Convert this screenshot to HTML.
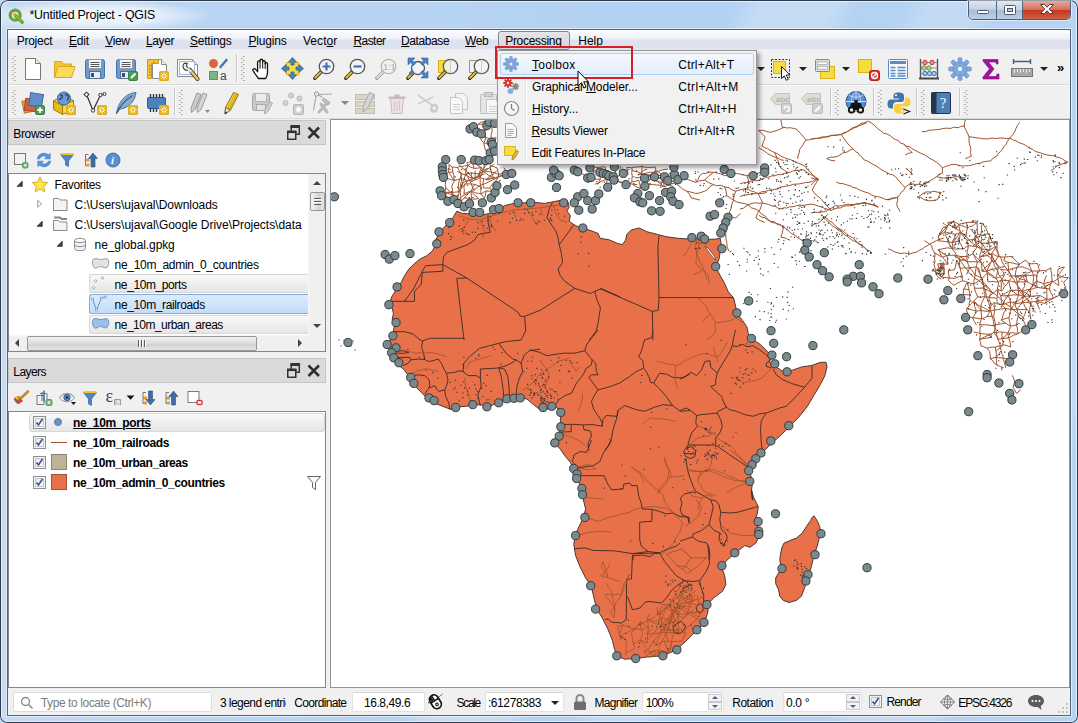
<!DOCTYPE html>
<html lang="en">
<head>
<meta charset="utf-8">
<title>*Untitled Project - QGIS</title>
<style>
*{box-sizing:border-box;margin:0;padding:0}
html,body{width:1078px;height:723px;overflow:hidden;background:#c3d8f0}
body{font-family:"Liberation Sans",sans-serif;font-size:12px;color:#000;position:relative}
.abs,.abs>*{position:absolute}
#win{position:absolute;left:0;top:0;width:1078px;height:723px;border-radius:8px 8px 7px 7px;background:linear-gradient(115deg,transparent 0,transparent 52%,rgba(255,255,255,.22) 54%,rgba(255,255,255,.22) 59%,transparent 61%,transparent 64%,rgba(255,255,255,.18) 66%,rgba(255,255,255,.18) 69%,transparent 71%,transparent 82%,rgba(255,255,255,.2) 84%,rgba(255,255,255,.2) 89%,transparent 91%),linear-gradient(90deg,#cbdef4 0,#c2d9f3 1%,#b9d5f3 20%,#b3d1f2 60%,#b6d3f3 100%);box-shadow:inset 0 0 0 1px #2c3a4c, inset 0 0 0 2px #e6f0fb;overflow:hidden}
#titleglow{position:absolute;left:2px;top:2px;width:230px;height:27px;background:radial-gradient(ellipse 120px 16px at 92px 14px,rgba(255,255,255,.85) 0,rgba(255,255,255,.6) 55%,rgba(255,255,255,0) 100%)}
#title{position:absolute;left:28px;top:8px;font-size:12.4px;color:#000;white-space:nowrap;text-shadow:0 0 5px #fff,0 0 8px #fff}
#client{position:absolute;left:7px;top:29px;width:1064px;height:687px;background:#f0f0f0;border:1px solid #53647a;outline:1px solid rgba(255,255,255,.55)}
.t{position:absolute;white-space:nowrap;line-height:14px;height:14px}
u{text-decoration:underline;text-underline-offset:1px}
/* menubar */
#menubar{position:absolute;left:0;top:0;width:1062px;height:21px;background:linear-gradient(180deg,#fdfdfe 0,#eef1f8 45%,#dfe3f0 50%,#dde1ee 88%,#e9ecf5 100%);border-bottom:1px solid #f4f5f9}
#menubar .t{top:4px}
#procbtn{position:absolute;left:490px;top:1px;width:72px;height:19px;border:1px solid #7d8694;border-radius:3px;background:linear-gradient(180deg,#e4e6ea,#d2d5db)}
/* toolbars */
.tbrow{position:absolute;left:0;width:1062px;height:34px;background:#f0f0f0}
.sep{position:absolute;width:1px;background:#c9c9c9;border-right:1px solid #fbfbfb;box-sizing:content-box}
.grip{position:absolute;width:4px;height:26px;background:repeating-linear-gradient(180deg,#a3a3a3 0,#a3a3a3 1.500px,transparent 1.500px,transparent 4px) 2px 0/1.500px 100% no-repeat,repeating-linear-gradient(180deg,#a3a3a3 0,#a3a3a3 1.500px,transparent 1.500px,transparent 4px) 0 2px/1.500px 100% no-repeat}
.ic{position:absolute;width:24px;height:24px}
.ic svg,.ic16 svg{display:block;overflow:visible}
.ic16{position:absolute;width:16px;height:16px}
.dis{opacity:.38;filter:grayscale(1)}
.dd{position:absolute;width:0;height:0;border:4px solid transparent;border-top:4px solid #222;border-bottom:0}
/* docks */
.dtitle{position:absolute;left:0px;width:318px;height:25px;background:#dadada;border:1px solid #c6c6c6}
.dtitle .t{left:4px;top:6px}
.frame{position:absolute;background:#fff;border:1px solid #828790}
.row{position:absolute;height:20px}
.selrow{position:absolute;border:1px solid #d7d7d7;border-radius:3px;background:linear-gradient(180deg,#f8f8f8,#e6e6e6)}
.selrow.act{border-color:#84acdd;background:linear-gradient(180deg,#dcebfd,#c2dcfc)}
.cb{position:absolute;width:13px;height:13px;border:1px solid #8e8f8f;background:linear-gradient(135deg,#dfe2e6,#f7f7f8 60%,#fff);box-shadow:inset 0 0 0 1px #f4f4f4, inset 0 0 0 2px #c3c7cc}
.cb svg{position:absolute;left:1px;top:1px}
/* status */
.field{position:absolute;height:20px;background:#fff;border:1px solid #e3e3e3;border-top-color:#d5d5d5;border-radius:2px}
/* popup menu */
#popup{position:absolute;left:497px;top:50px;width:260px;height:115px;background:#f1f1f1;border:1px solid #979797;box-shadow:3px 3px 4px rgba(0,0,0,.35)}
#popup .gut{position:absolute;left:27px;top:2px;width:1px;height:109px;background:#e2e3e3;border-right:1px solid #fff;box-sizing:content-box}
#popup .hl{position:absolute;left:2px;top:2px;width:254px;height:22px;border:1px solid #aecff7;border-radius:3px;background:linear-gradient(180deg,#f4f8fd,#e4eefb)}
#redbox{position:absolute;left:495px;top:46px;width:138px;height:33px;border:2px solid #d5202b}
</style>
</head>
<body>
<div id="win">
<div id="titleglow"></div>
<!-- QGIS logo -->
<svg style="position:absolute;left:8px;top:8px" width="16" height="16" viewBox="0 0 17 17">
<circle cx="7.6" cy="7.6" r="5.3" fill="none" stroke="#6fa32a" stroke-width="3.4"/>
<path d="M8 8 L15 15" stroke="#5b8f2a" stroke-width="3.6" stroke-linecap="round"/>
<path d="M6.6 6.4 L11.5 11.2" stroke="#f08b2c" stroke-width="2.2" stroke-linecap="round"/>
<path d="M9.5 9.5 L14.6 14.6" stroke="#8dbb45" stroke-width="1.8" stroke-linecap="round"/>
</svg>
<div id="title" style="letter-spacing:-0.223px;margin-left:1.5px">*Untitled Project - QGIS</div>
<!-- window buttons -->
<div style="position:absolute;left:968px;top:1px;width:103px;height:19px;border:1px solid #4f5f73;border-top:0;border-radius:0 0 5px 5px;overflow:hidden;box-shadow:0 0 0 1px rgba(255,255,255,.5)">
 <div style="position:absolute;left:0;top:0;width:28px;height:18px;background:linear-gradient(180deg,#dfe8f3 0,#c4d3e6 45%,#a9bed8 50%,#bccfe6 100%);border-right:1px solid #56667b"></div>
 <div style="position:absolute;left:28px;top:0;width:26px;height:19px;background:linear-gradient(180deg,#dfe8f3 0,#c4d3e6 45%,#a9bed8 50%,#bccfe6 100%);border-right:1px solid #56667b"></div>
 <div style="position:absolute;left:54px;top:0;width:48px;height:19px;background:linear-gradient(180deg,#e8a99b 0,#d5705c 45%,#c2391f 50%,#d0654a 100%)"></div>
 <svg style="position:absolute;left:0;top:-1px" width="102" height="19" viewBox="0 0 102 19">
  <rect x="8.5" y="10.5" width="11" height="3" rx="1" fill="#fff" stroke="#4a5566" stroke-width="1"/>
  <rect x="35.500" y="5.500" width="11" height="9" rx="1" fill="#fff" stroke="#4a5566"/>
  <rect x="38.5" y="8.5" width="5" height="3" fill="#b9c9de" stroke="#4a5566"/>
  <path d="M71.500 4.500h4l2.500 2.800 2.500-2.800h4l-4.300 4.500 4.300 4.500h-4l-2.500-2.800-2.500 2.800h-4l4.300-4.500z" fill="#fff" stroke="#5a3a3a" stroke-width="1" stroke-linejoin="round"/>
 </svg>
</div>

<div id="client">
<!-- ================= MENUBAR ================= -->
<div id="menubar">
 <div id="procbtn"></div>
 <div class="t" style="letter-spacing:-0.254px;margin-left:0.7px;left:8px">Pro<u>j</u>ect</div>
 <div class="t" style="letter-spacing:-0.176px;margin-left:0px;left:61px"><u>E</u>dit</div>
 <div class="t" style="letter-spacing:-0.328px;margin-left:0.2px;left:97px"><u>V</u>iew</div>
 <div class="t" style="letter-spacing:-0.426px;margin-left:1.1px;left:137px"><u>L</u>ayer</div>
 <div class="t" style="letter-spacing:-0.222px;margin-left:0px;left:182px"><u>S</u>ettings</div>
 <div class="t" style="letter-spacing:-0.168px;margin-left:0.5px;left:240px"><u>P</u>lugins</div>
 <div class="t" style="letter-spacing:0.076px;margin-left:-0.1px;left:295px">Vect<u>o</u>r</div>
 <div class="t" style="letter-spacing:-0.543px;margin-left:0.4px;left:345px"><u>R</u>aster</div>
 <div class="t" style="letter-spacing:-0.409px;margin-left:0.1px;left:393px"><u>D</u>atabase</div>
 <div class="t" style="letter-spacing:-0.423px;margin-left:0.1px;left:457px"><u>W</u>eb</div>
 <div class="t" style="letter-spacing:-0.307px;margin-left:0.2px;left:497px">Pro<u>c</u>essing</div>
 <div class="t" style="letter-spacing:-0.047px;margin-left:-0.7px;left:571px"><u>H</u>elp</div>
</div>
<div class="tbrow" style="top:21px;border-bottom:1px solid #dadada"></div>
<div class="tbrow" style="top:55px;border-top:1px solid #fbfbfb;border-bottom:1px solid #d8d8d8"></div>
<div class="grip" style="left:4px;top:26px"></div>
<div class="grip" style="left:4px;top:60px"></div>
<div class="ic" style="left:13px;top:26.5px"><svg width="24" height="24" viewBox="0 0 24 24"><path d="M4.500 1.500h10l5 5v16h-15z" fill="#fff" stroke="#777"/><path d="M14.500 1.500v5h5" fill="#eee" stroke="#777"/></svg></div>
<div class="ic" style="left:44px;top:26.5px"><svg width="24" height="24" viewBox="0 0 24 24"><path d="M2.500 20.500v-16h7l2 2.500h8v3" fill="#f3c63a" stroke="#d9a81c"/><path d="M2.500 20.500l3.500-11h17l-3.500 11z" fill="#fad95c" stroke="#d9a81c"/></svg></div>
<div class="ic" style="left:75px;top:26.5px"><svg width="24" height="24" viewBox="0 0 24 24"><path d="M2.500 4.500a2 2 0 0 1 2-2h15a2 2 0 0 1 2 2v15a2 2 0 0 1-2 2h-15a2 2 0 0 1-2-2z" fill="#6d9bd1" stroke="#4374ab"/><rect x="5.500" y="2.500" width="13" height="9" fill="#f4f6f9" stroke="#8d99a8"/><path d="M7.500 5.500h9M7.500 7.500h9M7.500 9.500h9" stroke="#555"/><rect x="6.500" y="14.500" width="11" height="7" fill="#e9edf2" stroke="#55708f"/><rect x="8" y="16" width="3" height="4" fill="#3c4f6b"/></svg></div>
<div class="ic" style="left:106px;top:26.5px"><svg width="24" height="24" viewBox="0 0 24 24"><path d="M2.500 4.500a2 2 0 0 1 2-2h15a2 2 0 0 1 2 2v15a2 2 0 0 1-2 2h-15a2 2 0 0 1-2-2z" fill="#6d9bd1" stroke="#4374ab"/><rect x="5.500" y="2.500" width="13" height="9" fill="#f4f6f9" stroke="#8d99a8"/><path d="M7.500 5.500h9M7.500 7.500h9M7.500 9.500h9" stroke="#555"/><rect x="6.500" y="14.500" width="11" height="7" fill="#e9edf2" stroke="#55708f"/><rect x="8" y="16" width="3" height="4" fill="#3c4f6b"/><rect x="14.500" y="14.500" width="9" height="9" rx="1.5" fill="#4f9c5a" stroke="#3b8246"/><path d="M17 21l4.500-4.500" stroke="#fff" stroke-width="2"/></svg></div>
<div class="ic" style="left:137px;top:26.5px"><svg width="24" height="24" viewBox="0 0 24 24"><path d="M7.500 2.500h9l5 5v14h-14z" fill="#fff" stroke="#888"/><path d="M16.500 2.500v5h5" fill="#eee" stroke="#888"/><path d="M2.500 2.500h11v4h-7v15h-4z" fill="#f3c63a" stroke="#c99b11"/><path d="M4 9h2M4 12h2M4 15h2M4 18h2M9 4v2" stroke="#a67d08"/><rect x="14" y="14" width="10" height="10" rx="1.500" fill="#e2b118"/><path d="M19 15.500v7M15.500 19h7M16.500 16.500l5 5M21.500 16.500l-5 5" stroke="#fff" stroke-width="1"/><circle cx="19" cy="19" r="1.100" fill="#e2b118"/></svg></div>
<div class="ic" style="left:168px;top:26.5px"><svg width="24" height="24" viewBox="0 0 24 24"><path d="M1.500 2.500h15l5 5v12h-20z" fill="#fff" stroke="#888"/><path d="M16.500 2.500v5h5" fill="#eee" stroke="#888"/><rect x="3.500" y="4.500" width="15" height="13" fill="#fff" stroke="#9db4e0"/><path d="M14.500 13.500l7 8.500" stroke="#3a3a3a" stroke-width="4.200" stroke-linecap="round"/><path d="M14.500 13.500l7 8.500" stroke="#e9c45a" stroke-width="2.600" stroke-linecap="round"/><path d="M8.300 6.200a4.200 4.200 0 1 0 6.500 5.200l-2.800-.4-1.500-2 .8-2.600z" fill="#e9e9e9" stroke="#3a3a3a" stroke-width="1.100" stroke-linejoin="round"/><path d="M11.500 11.500l3.500 3" stroke="#e4e4e4" stroke-width="2.400"/></svg></div>
<div class="ic" style="left:198px;top:26.5px"><svg width="24" height="24" viewBox="0 0 24 24"><circle cx="7.500" cy="6.500" r="4.500" fill="#d9673b"/><rect x="3.500" y="14.500" width="8" height="8" fill="#7fb583" stroke="#5d9a63"/><path d="M14.500 10l6-7" stroke="#4a7ab5" stroke-width="2.600" stroke-linecap="round"/><text x="14" y="22.500" font-family="Liberation Sans,sans-serif" font-size="12" fill="#444">a</text></svg></div>
<div class="sep" style="left:228px;top:24px;height:28px"></div>
<div class="grip" style="left:233px;top:26px"></div>
<div class="ic" style="left:242px;top:26.5px"><svg width="24" height="24" viewBox="0 0 24 24"><path d="M8.500 21.500c-1.500-2-4.500-6-5.500-8 -.7-1.600 1.400-2.600 2.600-1.200l2 2.400v-9.500c0-1.800 2.500-1.800 2.500 0v-1.600c0-1.800 2.600-1.800 2.600 0v1.400c0-1.700 2.500-1.700 2.500 0.200v1.600c0-1.500 2.300-1.500 2.300 0.300v8.400c0 3-1 4.500-1.800 6z" fill="#fff" stroke="#111" stroke-width="1.300" stroke-linejoin="round"/><path d="M10.100 5.500v6M12.700 5v6.500M15.200 6v6" stroke="#111" stroke-width="1"/></svg></div>
<div class="ic" style="left:273px;top:26.5px"><svg width="24" height="24" viewBox="0 0 24 24"><rect x="5.500" y="5.500" width="12" height="12" fill="#f5dc3f" stroke="#d9b31a"/><path d="M11.500 0.500l4 4.500h-2.500v3h-3v-3h-2.500zM11.500 22.500l4-4.500h-2.500v-3h-3v3h-2.500zM0.500 11.500l4.500-4v2.500h3v3h-3v2.500zM22.500 11.500l-4.500-4v2.500h-3v3h3v2.500z" fill="#4a82c4" stroke="#2f65a6" stroke-width=".8"/></svg></div>
<div class="ic" style="left:304px;top:26.5px"><svg width="24" height="24" viewBox="0 0 24 24"><path d="M9.500 14.500l-6.700 6.700" stroke="#222" stroke-width="3.400" stroke-linecap="round"/><path d="M8.600 15.400l-5.400 5.400" stroke="#f0c029" stroke-width="2" stroke-linecap="round"/><circle cx="14.500" cy="9.500" r="7.200" fill="#f3f4f6" stroke="#555" stroke-width="1.300"/><path d="M14.500 5.500v8M10.500 9.500h8" stroke="#3f74b5" stroke-width="2.200"/></svg></div>
<div class="ic" style="left:335px;top:26.5px"><svg width="24" height="24" viewBox="0 0 24 24"><path d="M9.500 14.500l-6.700 6.700" stroke="#222" stroke-width="3.400" stroke-linecap="round"/><path d="M8.600 15.400l-5.400 5.400" stroke="#f0c029" stroke-width="2" stroke-linecap="round"/><circle cx="14.500" cy="9.500" r="7.200" fill="#f3f4f6" stroke="#555" stroke-width="1.300"/><path d="M10.500 9.500h8" stroke="#3f74b5" stroke-width="2.200"/></svg></div>
<div class="ic dis" style="left:366px;top:26.5px"><svg width="24" height="24" viewBox="0 0 24 24"><path d="M9.500 14.500l-6.700 6.700" stroke="#222" stroke-width="3.400" stroke-linecap="round"/><path d="M8.600 15.400l-5.400 5.400" stroke="#f0c029" stroke-width="2" stroke-linecap="round"/><circle cx="14.500" cy="9.500" r="7.200" fill="#f3f4f6" stroke="#555" stroke-width="1.300"/><text x="9.300" y="13" font-family="Liberation Sans,sans-serif" font-size="8.500" font-weight="bold" fill="#666">1:1</text></svg></div>
<div class="ic" style="left:397px;top:26.5px"><svg width="24" height="24" viewBox="0 0 24 24"><path d="M9.500 14.500l-6.700 6.700" stroke="#222" stroke-width="3.400" stroke-linecap="round"/><path d="M8.600 15.400l-5.400 5.400" stroke="#f0c029" stroke-width="2" stroke-linecap="round"/><circle cx="13" cy="11" r="6.500" fill="#f3f4f6" stroke="#555" stroke-width="1.300"/><path d="M3 1h7l-2.500 2.500 3 3-2 2-3-3L3 8zM23 1h-7l2.500 2.500-3 3 2 2 3-3L23 8zM23 21h-7l2.500-2.500-3-3 2-2 3 3L23 14zM4 16l3-3 2 2-3 3z" fill="#4a82c4" stroke="#2f65a6" stroke-width=".6"/></svg></div>
<div class="ic" style="left:428px;top:26.5px"><svg width="24" height="24" viewBox="0 0 24 24"><rect x="2.500" y="3.500" width="12" height="12" fill="#f5dc3f" stroke="#d9b31a"/><path d="M9.500 14.500l-6.700 6.700" stroke="#222" stroke-width="3.400" stroke-linecap="round"/><path d="M8.600 15.400l-5.400 5.400" stroke="#f0c029" stroke-width="2" stroke-linecap="round"/><circle cx="14.500" cy="9.500" r="7.200" fill="rgba(243,244,246,.8)" stroke="#555" stroke-width="1.300"/><path d="M14.500 2.500v14" stroke="#ccc"/></svg></div>
<div class="ic" style="left:459px;top:26.5px"><svg width="24" height="24" viewBox="0 0 24 24"><rect x="2.500" y="3.500" width="12" height="12" fill="#f1f1f1" stroke="#999"/><path d="M9.500 14.500l-6.700 6.700" stroke="#222" stroke-width="3.400" stroke-linecap="round"/><path d="M8.600 15.400l-5.400 5.400" stroke="#f0c029" stroke-width="2" stroke-linecap="round"/><circle cx="14.500" cy="9.500" r="7.200" fill="rgba(243,244,246,.9)" stroke="#555" stroke-width="1.300"/><path d="M14.500 2.500v14" stroke="#ccc"/></svg></div>
<div class="dd" style="left:749px;top:37px"></div>
<div class="ic" style="left:761px;top:26.5px"><svg width="24" height="24" viewBox="0 0 24 24"><rect x="2.500" y="2.500" width="18" height="18" fill="none" stroke="#333" stroke-dasharray="2 1.500"/><rect x="4.500" y="4.500" width="12" height="12" fill="#f5dc3f" stroke="#d9b31a"/><path d="M12.500 9.500v12l2.800-2.700 2 4.500 2-1-2-4.300h3.800z" fill="#fff" stroke="#222" stroke-linejoin="round"/></svg></div>
<div class="ic" style="left:805px;top:26.5px"><svg width="24" height="24" viewBox="0 0 24 24"><rect x="7.500" y="9.500" width="14" height="12" fill="#f5dc3f" stroke="#d9b31a"/><rect x="2.500" y="2.500" width="14" height="12" rx="1" fill="#dcdcdc" stroke="#8a8a8a"/><rect x="4.500" y="5" width="10" height="2.500" fill="#fff" stroke="#9a9a9a" stroke-width=".6"/><rect x="4.500" y="9.500" width="10" height="2.500" fill="#fff" stroke="#9a9a9a" stroke-width=".6"/></svg></div>
<div class="ic" style="left:848px;top:26.5px"><svg width="24" height="24" viewBox="0 0 24 24"><rect x="2.500" y="2.500" width="13" height="13" fill="#f5dc3f" stroke="#d9b31a"/><rect x="13.500" y="13.500" width="10" height="10" rx="2" fill="#d9352d" stroke="#b31f1a"/><circle cx="18.500" cy="18.500" r="3" fill="none" stroke="#fff" stroke-width="1.300"/><path d="M16.500 20.500l4-4" stroke="#fff" stroke-width="1.300"/></svg></div>
<div class="ic" style="left:878px;top:26.5px"><svg width="24" height="24" viewBox="0 0 24 24"><rect x="2.500" y="2.500" width="19" height="19" rx="1" fill="#f4f8fd" stroke="#5b8cc4"/><rect x="4" y="4" width="16" height="3" fill="#5b8cc4"/><path d="M4.500 10.500h5M11.500 10.500h8M4.500 13.500h5M11.500 13.500h8M4.500 16.500h5M11.500 16.500h8M4.500 19h5M11.500 19h8" stroke="#5b8cc4" stroke-width="1.400"/></svg></div>
<div class="ic" style="left:909px;top:26.5px"><svg width="24" height="24" viewBox="0 0 24 24"><path d="M3.500 2v19M20.500 2v19" stroke="#555" stroke-width="1.400"/><path d="M2 21.500h20" stroke="#444" stroke-width="2"/><path d="M3.500 5.500h17M3.500 11h17M3.500 16.500h17" stroke="#777" stroke-width=".8"/><g stroke-width="1"><circle cx="8" cy="5.500" r="2.200" fill="#e98a8a" stroke="#c23b3b"/><circle cx="15" cy="5.500" r="2.200" fill="#e98a8a" stroke="#c23b3b"/><circle cx="7" cy="11" r="2.200" fill="#a5d6a5" stroke="#4e9a4e"/><circle cx="12" cy="11" r="2.200" fill="#a5d6a5" stroke="#4e9a4e"/><circle cx="8" cy="16.500" r="2.200" fill="#a9c6e8" stroke="#3f74b5"/><circle cx="12.500" cy="16.500" r="2.200" fill="#a9c6e8" stroke="#3f74b5"/><circle cx="17" cy="16.500" r="2.200" fill="#a9c6e8" stroke="#3f74b5"/></g></svg></div>
<div class="ic" style="left:940px;top:26.5px"><svg width="24" height="24" viewBox="0 0 24 24"><g transform="translate(12 12)"><g fill="#7fa9dc" stroke="#5b8cc4" stroke-width=".7"><rect x="-2" y="-11.500" width="4" height="23" rx="1.500"/><rect x="-2" y="-11.500" width="4" height="23" rx="1.500" transform="rotate(45)"/><rect x="-2" y="-11.500" width="4" height="23" rx="1.500" transform="rotate(90)"/><rect x="-2" y="-11.500" width="4" height="23" rx="1.500" transform="rotate(135)"/></g><circle r="7" fill="#7fa9dc" stroke="#5b8cc4" stroke-width=".7"/><circle r="2.800" fill="#f0f0f0" stroke="#5b8cc4" stroke-width=".7"/></g></svg></div>
<div class="ic" style="left:971px;top:26.5px"><svg width="24" height="24" viewBox="0 0 24 24"><path d="M4 2.500h15v4.500h-1.500l-1-2h-7l5.500 7-6 7.500h8l1.200-2.500h1.800v5h-16v-2l6.500-8-6.500-8z" fill="#a3119e" stroke="#7d0a79" stroke-width=".6"/></svg></div>
<div class="ic" style="left:1002px;top:26.5px"><svg width="24" height="24" viewBox="0 0 24 24"><path d="M3 4.500h18M3.500 2v5M20.500 2v5" stroke="#3f5f8a" stroke-width="1.400"/><rect x="1.500" y="11.500" width="21" height="8" fill="#a9a9a9" stroke="#777"/><path d="M4.500 12v4M7.500 12v3M10.500 12v4M13.500 12v3M16.500 12v4M19.500 12v3" stroke="#eee"/></svg></div>
<div class="dd" style="left:791px;top:37px"></div>
<div class="dd" style="left:834px;top:37px"></div>
<div class="dd" style="left:1032px;top:37px"></div>
<div class="t" style="left:1049px;top:31px;font-size:13px;font-weight:bold;letter-spacing:-1px">»</div>
<div class="ic" style="left:13px;top:60.5px"><svg width="24" height="24" viewBox="0 0 24 24"><rect x="2" y="9" width="12" height="12" transform="rotate(-12 8 15)" fill="#e5a03a" stroke="#c27a18"/><rect x="4" y="8" width="12" height="12" transform="rotate(8 10 14)" fill="#d2613d" stroke="#a8421f"/><rect x="8.500" y="2.500" width="13" height="13" transform="rotate(10 15 9)" fill="#5f8fc9" stroke="#3c6aa5"/><rect x="14.500" y="14.500" width="9" height="9" rx="1.5" fill="#4f9c5a" stroke="#3b8246"/><path d="M19 16.300v5.400M16.300 19h5.400" stroke="#fff" stroke-width="1.800"/></svg></div>
<div class="ic" style="left:44px;top:60.5px"><svg width="24" height="24" viewBox="0 0 24 24"><path d="M1.500 9.500l9 5v9l-9-5z" fill="#e8bb16" stroke="#9f7c07"/><path d="M10.500 14.500l11-5v9l-11 5z" fill="#f5d94e" stroke="#9f7c07"/><path d="M1.500 9.500l11-4 9 4-11 5z" fill="#fbe88a" stroke="#9f7c07"/><circle cx="12" cy="7.500" r="6.500" fill="#6c9bd4" stroke="#3c5f94"/><path d="M8 4c2-.5 3 1 2 2.500s-2 1-2.500 2.500M13 3c1.500 1 3 .5 3.500 2.500s-1.500 2-1 4" stroke="#2f4d7c" stroke-width="1.600" fill="none"/><rect x="14" y="14" width="10" height="10" rx="1.500" fill="#e2b118"/><path d="M19 15.500v7M15.500 19h7M16.500 16.500l5 5M21.500 16.500l-5 5" stroke="#fff" stroke-width="1"/><circle cx="19" cy="19" r="1.100" fill="#e2b118"/></svg></div>
<div class="ic" style="left:75px;top:60.5px"><svg width="24" height="24" viewBox="0 0 24 24"><path d="M3.500 3.500l6.500 16 7.500-15.500 4-1" fill="none" stroke="#333" stroke-width="1.200"/><g fill="#fff" stroke="#333"><rect x="1.800" y="1.800" width="3.400" height="3.400" transform="rotate(45 3.500 3.500)"/><circle cx="10" cy="19.500" r="1.700"/><circle cx="17.500" cy="4" r="1.700"/><circle cx="21.500" cy="3" r="1.500"/></g><rect x="14" y="14" width="10" height="10" rx="1.500" fill="#e2b118"/><path d="M19 15.500v7M15.500 19h7M16.500 16.500l5 5M21.500 16.500l-5 5" stroke="#fff" stroke-width="1"/><circle cx="19" cy="19" r="1.100" fill="#e2b118"/></svg></div>
<div class="ic" style="left:106px;top:60.5px"><svg width="24" height="24" viewBox="0 0 24 24"><path d="M2.500 22.500c1-7 4-13 9-17 3-2.400 7-3.800 10.500-4-.5 4-2 7.500-4.500 10.500-3 3.500-7 5.500-11.500 6z" fill="#88a9d0" stroke="#4d72a3"/><path d="M2.500 22.500c3-7 8-13 16-18" fill="none" stroke="#39597f" stroke-width="1.100"/><rect x="14" y="14" width="10" height="10" rx="1.500" fill="#e2b118"/><path d="M19 15.500v7M15.500 19h7M16.500 16.500l5 5M21.500 16.500l-5 5" stroke="#fff" stroke-width="1"/><circle cx="19" cy="19" r="1.100" fill="#e2b118"/></svg></div>
<div class="ic" style="left:137px;top:60.5px"><svg width="24" height="24" viewBox="0 0 24 24"><rect x="2.500" y="6.500" width="18" height="11" rx="1" fill="#4f80be" stroke="#2f5c96"/><path d="M5.500 3v3.500M8.500 3v3.500M11.500 3v3.500M14.500 3v3.500M17.500 3v3.500M5.500 17.500v3.500M8.500 17.500v3.500M11.500 17.500v3.500" stroke="#333" stroke-width="1.400"/><rect x="14" y="14" width="10" height="10" rx="1.500" fill="#e2b118"/><path d="M19 15.500v7M15.500 19h7M16.500 16.500l5 5M21.500 16.500l-5 5" stroke="#fff" stroke-width="1"/><circle cx="19" cy="19" r="1.100" fill="#e2b118"/></svg></div>
<div class="sep" style="left:166px;top:58px;height:28px"></div>
<div class="grip" style="left:171px;top:60px"></div>
<div class="ic" style="left:180px;top:60.5px"><svg width="24" height="24" viewBox="0 0 24 24"><path d="M9 2l4 1.500-6 15-3.500 3-.5-4.500z" fill="#ccc" stroke="#999"/><path d="M15 2l4 1.500-6 15-3.500 3-.5-4.500z" fill="#d5d5d5" stroke="#999"/><path d="M17 19h5l-2.500 3z" fill="#888"/></svg></div>
<div class="ic" style="left:211px;top:60.5px"><svg width="24" height="24" viewBox="0 0 24 24"><path d="M14.500 1.500l5 2-8 15.500-5.500 4 .5-6.500z" fill="#f2d230" stroke="#8a7416"/><path d="M16.500 2.300l-8 15.700M18.200 3l-8 15.500" stroke="#b99b1a" stroke-width=".8"/><path d="M6.500 16.500l5 2.500-5.500 4z" fill="#e9e2d0" stroke="#8a7416"/><path d="M6 23l.25-2.500 2 1z" fill="#222"/></svg></div>
<div class="ic" style="left:242px;top:60.5px"><svg width="24" height="24" viewBox="0 0 24 24"><path d="M2.500 4.500a2 2 0 0 1 2-2h13a2 2 0 0 1 2 2v13a2 2 0 0 1-2 2h-13a2 2 0 0 1-2-2z" fill="#c9c9c9" stroke="#a5a5a5"/><rect x="5.500" y="2.500" width="11" height="8" fill="#ececec" stroke="#b5b5b5"/><rect x="6.500" y="13.500" width="9" height="6" fill="#e2e2e2" stroke="#aaa"/><path d="M19.500 10.500l3 1.500-5 9-3 2 .3-3.500z" fill="#d2d2d2" stroke="#aaa"/></svg></div>
<div class="ic" style="left:273px;top:60.5px"><svg width="24" height="24" viewBox="0 0 24 24"><circle cx="4.500" cy="12" r="2.500" fill="#d3d3d3" stroke="#b8b8b8"/><circle cx="10" cy="4.500" r="2.500" fill="#d3d3d3" stroke="#b8b8b8"/><circle cx="18.500" cy="7.500" r="2.500" fill="#d3d3d3" stroke="#b8b8b8"/><rect x="12.500" y="13.500" width="10" height="10" rx="1.500" fill="#cfcfcf" stroke="#b5b5b5"/><path d="M17.500 15.500v6M14.500 18.500h6M15.400 16.400l4.200 4.200M19.600 16.400l-4.200 4.200" stroke="#fff" stroke-width="1.200"/></svg></div>
<div class="ic" style="left:303px;top:60.5px"><svg width="24" height="24" viewBox="0 0 24 24"><path d="M5.500 2.500l-3 17M5.500 2.500l6 4M4 3.500l17-.5" stroke="#aaa" stroke-width="1.200" fill="none"/><circle cx="5.500" cy="3" r="2.200" fill="#e8e8e8" stroke="#999"/><path d="M8 21l9-10M16 21l-6-8" stroke="#b9b9b9" stroke-width="3" stroke-linecap="round"/><path d="M13 7l6 5-2 2-6-5z" fill="#c5c5c5" stroke="#aaa"/></svg></div>
<div class="ic" style="left:346px;top:60.5px"><svg width="24" height="24" viewBox="0 0 24 24"><rect x="1.500" y="3.500" width="19" height="5" fill="#d9d7c4" stroke="#c2c0ad"/><rect x="1.500" y="10.500" width="19" height="5" fill="#d9d7c4" stroke="#c2c0ad"/><rect x="1.500" y="17.500" width="19" height="5" fill="#d9d7c4" stroke="#c2c0ad"/><path d="M15.500 1.500l4.500 2-6.500 14-4.500 3.500.3-5.500z" fill="#d5d5d5" stroke="#a9a9a9"/></svg></div>
<div class="ic" style="left:377px;top:60.5px"><svg width="24" height="24" viewBox="0 0 24 24"><path d="M5.500 7.500h13l-1.500 15h-10z" fill="#ece4e4" stroke="#c9b9b9"/><path d="M3.500 6.500h17M9.500 4.500h5" stroke="#c9b9b9" stroke-width="2"/><path d="M9.500 10v10M12 10v10M14.500 10v10" stroke="#d4c6c6"/></svg></div>
<div class="ic" style="left:408px;top:60.5px"><svg width="24" height="24" viewBox="0 0 24 24"><path d="M2 4l15 11M2 13l15-7" stroke="#cfcfcf" stroke-width="1.800"/><circle cx="18.500" cy="16.500" r="3" fill="none" stroke="#ccc" stroke-width="1.600"/><circle cx="19" cy="5" r="3" fill="none" stroke="#ccc" stroke-width="1.600" transform="translate(-1 13)"/></svg></div>
<div class="ic" style="left:439px;top:60.5px"><svg width="24" height="24" viewBox="0 0 24 24"><path d="M8.500 2.500h8l4 4v12h-12z" fill="#f4f4f4" stroke="#c4c4c4"/><path d="M3.500 6.500h8l4 4v12h-12z" fill="#f8f8f8" stroke="#c4c4c4"/><path d="M6 13.500h7M6 16h7M6 18.500h7" stroke="#d0d0d0"/></svg></div>
<div class="ic" style="left:470px;top:60.5px"><svg width="24" height="24" viewBox="0 0 24 24"><rect x="2.500" y="3.500" width="16" height="19" rx="1" fill="#e4e4e4" stroke="#c0c0c0"/><rect x="6.500" y="1.500" width="8" height="4" fill="#d0d0d0" stroke="#bbb"/><path d="M8.500 8.500h9l4 4v10h-13z" fill="#f8f8f8" stroke="#c4c4c4"/><path d="M11 15.500h8M11 18h8M11 20.500h8" stroke="#d0d0d0"/></svg></div>
<div class="dd" style="left:333px;top:71px;border-top-color:#888"></div>
<div class="ic" style="left:761px;top:60.5px"><svg width="24" height="24" viewBox="0 0 24 24"><path d="M1.500 8l5-5.500h14v11h-14z" fill="#dcdcd4" stroke="#c4c4bb"/><text x="7" y="11" font-family="Liberation Sans,sans-serif" font-size="8" font-weight="bold" fill="#b5b5ac">abc</text><rect x="12.500" y="12.500" width="10" height="10" rx="1.500" fill="#cfcfcf" stroke="#bbb"/><path d="M15 18a2.600 2.600 0 1 1 2.600 2.600" fill="none" stroke="#fff" stroke-width="1.500"/></svg></div>
<div class="ic" style="left:792px;top:60.5px"><svg width="24" height="24" viewBox="0 0 24 24"><path d="M1.500 8l5-5.500h14v11h-14z" fill="#dcdcd4" stroke="#c4c4bb"/><text x="7" y="11" font-family="Liberation Sans,sans-serif" font-size="8" font-weight="bold" fill="#b5b5ac">abc</text><rect x="12.500" y="12.500" width="10" height="10" rx="1.500" fill="#cfcfcf" stroke="#bbb"/><path d="M15 20.500l5-5" stroke="#fff" stroke-width="2"/></svg></div>
<div class="sep" style="left:822px;top:58px;height:28px"></div>
<div class="grip" style="left:827px;top:60px"></div>
<div class="ic" style="left:836px;top:60.5px"><svg width="24" height="24" viewBox="0 0 24 24"><circle cx="12" cy="10.500" r="10" fill="#5a8bd0" stroke="#2d4f86"/><path d="M2 10.500h20M12 .5v20M5 4c4 3 10 3 14 0M5 17c4-3 10-3 14 0M12 .5c-6 5-6 15 0 20M12 .5c6 5 6 15 0 20" fill="none" stroke="#cfe0f5" stroke-width=".9"/><path d="M7 12h3.500v-3h3v3h3.500l1.500 7h-13z" fill="#111"/><circle cx="7.500" cy="19" r="3.600" fill="#111"/><circle cx="16.500" cy="19" r="3.600" fill="#111"/><circle cx="7.500" cy="19" r="1.800" fill="#e8e8e8"/><circle cx="16.500" cy="19" r="1.800" fill="#e8e8e8"/></svg></div>
<div class="sep" style="left:865px;top:58px;height:28px"></div>
<div class="grip" style="left:870px;top:60px"></div>
<div class="ic" style="left:879px;top:60.5px"><svg width="24" height="24" viewBox="0 0 24 24"><path d="M11.500 1.500c-4 0-5 1.500-5 3.500v2.500h5.500v1h-8c-2.500 0-3.500 2-3.500 4.500s1 4.500 3.500 4.500h2v-3c0-2 1.500-3.500 3.500-3.500h5c1.500 0 2.500-1 2.500-2.500v-3.500c0-2-1.500-3.500-5.500-3.500z" fill="#3d77ae"/><circle cx="9" cy="4.300" r="1" fill="#fff"/><path d="M12.500 22.500c4 0 5-1.500 5-3.500v-2.500h-5.500v-1h8c2.500 0 3.500-2 3.500-4.500s-1-4.500-3.500-4.500h-2v3c0 2-1.500 3.500-3.500 3.500h-5c-1.500 0-2.500 1-2.500 2.500v3.500c0 2 1.500 3.500 5.500 3.500z" fill="#f7cf3f"/><circle cx="15" cy="19.700" r="1" fill="#fff"/><path d="M16.500 18l6 2.500-6 2.500" fill="none" stroke="#222" stroke-width="1.300"/></svg></div>
<div class="sep" style="left:908px;top:58px;height:28px"></div>
<div class="grip" style="left:913px;top:60px"></div>
<div class="ic" style="left:921px;top:60.5px"><svg width="24" height="24" viewBox="0 0 24 24"><rect x="2.500" y="1.500" width="19" height="21" rx="1" fill="#4d7eb8" stroke="#1f3552"/><rect x="2.500" y="1.500" width="5" height="21" fill="#26384f"/><text x="11" y="17" font-family="Liberation Serif,serif" font-size="14" fill="#fff">?</text></svg></div>
<div class="sep" style="left:951px;top:58px;height:28px"></div>
<div class="grip" style="left:956px;top:60px"></div>
<!-- ================= BROWSER DOCK ================= (client coords = page - (8,30)) -->
<div class="dtitle" style="top:90px"><div class="t" style="letter-spacing:-0.359px;margin-left:0.3px">Browser</div>
 <svg style="position:absolute;left:277px;top:3px" width="38" height="18" viewBox="0 0 38 18">
  <path d="M5.200 7v-4.300h8.100v7.600h-3.500" fill="none" stroke="#333" stroke-width="1.500"/><path d="M4.500 2.500h9.500" stroke="#333" stroke-width="3"/>
  <rect x="1.750" y="7.750" width="8" height="7.500" fill="#dcdcdc" stroke="#333" stroke-width="1.500"/><path d="M1 7.800h9.500" stroke="#333" stroke-width="2.600"/>
  <path d="M22.500 3.500l10.500 10.500M33 3.500l-10.500 10.500" stroke="#2e2e2e" stroke-width="2.500"/>
 </svg>
</div>
<!-- browser toolbar -->
<div class="ic16" style="left:5px;top:122px"><svg width="16" height="16" viewBox="0 0 16 16"><rect x="1.500" y="1.500" width="11" height="11" fill="#f2f2f2" stroke="#777"/><rect x="9.500" y="10.500" width="5.500" height="5.500" rx="1.500" fill="#7bb686" stroke="#4f9c5a"/><circle cx="12.300" cy="13.300" r="1.300" fill="#d9efdc"/></svg></div>
<div class="ic16" style="left:27px;top:121px"><svg width="18" height="18" viewBox="0 0 16 16"><path d="M2 7a6 6 0 0 1 10-3.500l1.500-1.500v5h-5l1.700-1.700a3.800 3.800 0 0 0-6 1.700z" fill="#5596df" stroke="#3b78c4" stroke-width=".5"/><path d="M14 9a6 6 0 0 1-10 3.500l-1.500 1.500v-5h5l-1.700 1.700a3.800 3.800 0 0 0 6-1.700z" fill="#5596df" stroke="#3b78c4" stroke-width=".5"/></svg></div>
<div class="ic16" style="left:51px;top:122px"><svg width="16" height="16" viewBox="0 0 16 16"><path d="M1.500 2.500h13l-5 6.500v5.500l-3-1.500v-4z" fill="#4f86c6" stroke="#3a6ca8" stroke-width=".8"/><path d="M1.500 2h13" stroke="#f0c929" stroke-width="2"/></svg></div>
<div class="ic16" style="left:74px;top:122px"><svg width="16" height="16" viewBox="0 0 16 16"><path d="M3.500 2.500v11M3.500 2.500h3M3.500 8h2M3.500 13.500h2" stroke="#777" fill="none"/><rect x="4.500" y="6.500" width="3" height="3" fill="#f19a2a"/><rect x="4.500" y="11.500" width="3" height="3" fill="#f19a2a"/><path d="M11 1l4.500 5.500h-2.500v8.500h-4v-8.500h-2.500z" fill="#3f6ea6" stroke="#2a4f7e" stroke-width=".6"/></svg></div>
<div class="ic16" style="left:97px;top:122px"><svg width="16" height="16" viewBox="0 0 16 16"><circle cx="8" cy="8" r="7" fill="#5b8fd0" stroke="#3f6fae"/><text x="6" y="12" font-family="Liberation Serif,serif" font-size="11" font-style="italic" font-weight="bold" fill="#fff">i</text></svg></div>
<!-- browser tree -->
<div class="frame" style="left:0px;top:143px;width:318px;height:179px"></div>
<div class="selrow" style="left:81px;top:244px;width:220px;height:19px;border-radius:3px 0 0 3px;border-right:0"></div>
<div class="selrow act" style="left:81px;top:264px;width:220px;height:20px;border-radius:3px 0 0 3px;border-right:0"></div>
<div class="selrow" style="left:81px;top:285px;width:220px;height:19px;border-radius:3px 0 0 3px;border-right:0"></div>
<svg style="position:absolute;left:2px;top:144px" width="100" height="161" viewBox="0 0 100 161">
 <!-- expand arrows -->
 <g transform="translate(-1.800 -.7)">
 <path d="M14 8v5h-5z" fill="#444" stroke="#222" stroke-width=".8"/>
 <path d="M29.500 27l4 3.500-4 3.500z" fill="#fff" stroke="#9a9a9a"/>
 <path d="M34 48v5h-5z" fill="#444" stroke="#222" stroke-width=".8"/>
 <path d="M54 68v5h-5z" fill="#444" stroke="#222" stroke-width=".8"/>
 </g>
 <!-- star -->
 <path d="M30 3l2.300 5 5.400.6-4 3.700 1.100 5.400-4.800-2.800-4.800 2.800 1.100-5.400-4-3.700 5.400-.6z" fill="#fbe94a" stroke="#d9a81c" stroke-width="1"/>
 <!-- folder -->
 <g transform="translate(0 -1)"><path d="M43.500 37.500v-12h5l1.500 1.500h7v10.500z" fill="#f3f3f3" stroke="#8a8a8a"/>
 <path d="M43.500 57.500v-10h5l1.500 1.500h7v8.500z" fill="#f3f3f3" stroke="#8a8a8a"/><path d="M44 44.500h6l1.500 1.500h5.500" stroke="#8a8a8a" stroke-width="2" fill="none"/></g>
 <!-- db -->
 <g transform="translate(0 1.500)"><path d="M64.500 65v8c0 2.800 11 2.800 11 0v-8" fill="#f4f4f4" stroke="#8a8a8a"/><ellipse cx="70" cy="65" rx="5.500" ry="2.200" fill="#fafafa" stroke="#8a8a8a"/><path d="M64.500 69c0 2.800 11 2.800 11 0" fill="none" stroke="#8a8a8a"/></g>
 <g transform="translate(0 1.500)">
 <!-- polygon grey -->
 <path d="M83 84c3-2 5 0 8 0s5-2 7 0c1.500 2 .5 6-1 8-2 1.500-4-1-6.500-1s-4.500 3-6.500 1c-1.500-2-2-6-1-8z" fill="#e3e3e3" stroke="#9a9a9a"/>
 <!-- points -->
 <g fill="#fff" stroke="#7fa3d0" stroke-width=".9"><rect x="84.600" y="104.600" width="2" height="2" transform="rotate(45 85.600 105.600)"/><rect x="91.500" y="101.500" width="2" height="2" transform="rotate(45 92.500 102.500)"/><rect x="82.600" y="111.200" width="2" height="2" transform="rotate(45 83.600 112.200)"/></g>
 <!-- line -->
 <path d="M82.500 123.500l4 11 5-12 4-1" fill="none" stroke="#6f8fba" stroke-width="1"/><g fill="#fff" stroke="#6f8fba" stroke-width=".8"><circle cx="82.500" cy="123.500" r="1.200"/><circle cx="86.500" cy="134.500" r="1.200"/><circle cx="91.500" cy="122.500" r="1.200"/><circle cx="95.500" cy="121.500" r="1.100"/></g>
 <!-- polygon blue -->
 <path d="M83 144c3-2 5 0 8 0s5-2 7 0c1.500 2 .5 6-1 8-2 1.500-4-1-6.500-1s-4.500 3-6.500 1c-1.500-2-2-6-1-8z" fill="#9dc0e8" stroke="#6d96c8"/>
 </g>
</svg>
<div class="t" style="letter-spacing:-0.362px;margin-left:0.5px;left:46px;top:148px">Favorites</div>
<div class="t" style="letter-spacing:-0.034px;margin-left:0.6px;left:66px;top:168px">C:\Users\ujaval\Downloads</div>
<div class="t" style="letter-spacing:-0.024px;margin-left:0.6px;left:66px;top:188px">C:\Users\ujaval\Google Drive\Projects\data</div>
<div class="t" style="letter-spacing:-0.093px;margin-left:0.6px;left:86px;top:208px">ne_global.gpkg</div>
<div class="t" style="letter-spacing:-0.31px;margin-left:0.6px;left:106px;top:228px">ne_10m_admin_0_countries</div>
<div class="t" style="letter-spacing:-0.402px;margin-left:0.6px;left:106px;top:248px">ne_10m_ports</div>
<div class="t" style="letter-spacing:-0.366px;margin-left:0.6px;left:106px;top:268px">ne_10m_railroads</div>
<div class="t" style="letter-spacing:-0.512px;margin-left:0.6px;left:106px;top:288px">ne_10m_urban_areas</div>
<!-- vertical scrollbar -->
<div style="position:absolute;left:300px;top:144px;width:17px;height:161px;background:#f0f0f0;border-left:1px solid #f7f7f7"></div>
<div class="dd" style="left:305px;top:151px;border-top:0;border-bottom:4px solid #444"></div>
<div class="dd" style="left:305px;top:294px;border-top-color:#444"></div>
<div style="position:absolute;left:302px;top:162px;width:15px;height:19px;border:1px solid #979797;border-radius:2px;background:linear-gradient(90deg,#f3f3f3,#dcdcdc 50%,#cfcfcf 51%,#e4e4e4)"></div>
<div style="position:absolute;left:306px;top:168px;width:7px;height:7px;background:repeating-linear-gradient(180deg,#5c5c5c 0,#5c5c5c 1px,#fff 1px,#fff 2px,transparent 2px,transparent 3px)"></div>
<!-- horizontal scrollbar -->
<div style="position:absolute;left:1px;top:305px;width:299px;height:16px;background:#f0f0f0;border-top:1px solid #f7f7f7"></div>
<div style="position:absolute;left:300px;top:305px;width:17px;height:16px;background:#f0f0f0"></div>
<div style="position:absolute;left:19px;top:306px;width:230px;height:15px;border:1px solid #979797;border-radius:2px;background:linear-gradient(180deg,#f3f3f3,#dcdcdc 50%,#cfcfcf 51%,#e4e4e4)"></div>
<div style="position:absolute;left:130px;top:310px;width:8px;height:7px;background:repeating-linear-gradient(90deg,#5c5c5c 0,#5c5c5c 1px,#fff 1px,#fff 2px,transparent 2px,transparent 3px)"></div>
<div style="position:absolute;left:7px;top:309px;width:0;height:0;border:4px solid transparent;border-right:4px solid #444;border-left:0"></div>
<div style="position:absolute;left:290px;top:309px;width:0;height:0;border:4px solid transparent;border-left:4px solid #444;border-right:0"></div>

<!-- ================= LAYERS DOCK ================= -->
<div class="dtitle" style="top:328px"><div class="t" style="letter-spacing:-0.555px;margin-left:0.3px">Layers</div>
 <svg style="position:absolute;left:277px;top:3px" width="38" height="18" viewBox="0 0 38 18">
  <path d="M5.200 7v-4.300h8.100v7.600h-3.500" fill="none" stroke="#333" stroke-width="1.500"/><path d="M4.500 2.500h9.500" stroke="#333" stroke-width="3"/>
  <rect x="1.750" y="7.750" width="8" height="7.500" fill="#dcdcdc" stroke="#333" stroke-width="1.500"/><path d="M1 7.800h9.500" stroke="#333" stroke-width="2.600"/>
  <path d="M22.500 3.500l10.500 10.500M33 3.500l-10.500 10.500" stroke="#2e2e2e" stroke-width="2.500"/>
 </svg>
</div>
<!-- layers toolbar -->
<svg style="position:absolute;left:4px;top:359px" width="200" height="18" viewBox="0 0 200 18">
 <!-- style brush -->
 <path d="M2 9l5-2 4 5-4 3c-3 0-4-3-5-6z" fill="#d9452f"/><path d="M3 8l4-1.500 2 2.500-4 2z" fill="#f0c029"/><path d="M2.500 10l3 4" stroke="#3f74b5" stroke-width="1.500"/><path d="M8.500 9.500l7.500-7" stroke="#c58a3a" stroke-width="2.800" stroke-linecap="round"/><path d="M6 7.500l4 5" stroke="#8a6a3a" stroke-width="1.200"/>
 <!-- add group -->
 <g transform="translate(-2.500 0)"><path d="M27.500 6.500h7v9h-7zM30.500 4.500h7v9" fill="#f4f4f4" stroke="#777"/><path d="M34.500 1.500v11" stroke="#4a7ab5" stroke-width="1.600"/><path d="M32.500 3v9" stroke="#666"/><rect x="36.500" y="10.500" width="6" height="6" rx="1.500" fill="#7bb686" stroke="#4f9c5a"/><circle cx="39.500" cy="13.500" r="1.300" fill="#e9f5ea"/></g>
 <!-- eye -->
 <g transform="translate(-1.500 0)"><path d="M49 9c4-6 11-6 15 0-4 5-11 5-15 0z" fill="#eef2f7" stroke="#999"/><path d="M49 8c4-5 11-5 15 0" fill="none" stroke="#aaa"/><circle cx="56.500" cy="8.500" r="3.200" fill="#5b8cc4" stroke="#3a5f8f"/><circle cx="56.500" cy="8.500" r="1.300" fill="#1d2d44"/><path d="M60.500 13h5l-2.500 3z" fill="#111"/></g>
 <!-- filter -->
 <g transform="translate(-1 0)"><path d="M72.500 3.500h13l-5 6.500v6.500l-3-1.500v-5z" fill="#4f86c6" stroke="#3a6ca8" stroke-width=".8"/><path d="M72.500 3h13" stroke="#f0c929" stroke-width="2"/></g>
 <!-- epsilon -->
 <text x="93.500" y="12.500" font-family="Liberation Serif,serif" font-size="18" fill="#6a2c7a">ε</text><path d="M102.500 16v-5.500h6v5.500" fill="#c9c9c9" stroke="#9a9a9a"/><path d="M104 11.500h3.500v4" fill="#f4f4f4"/>
 <path d="M114.500 6.500h8l-4 4.300z" fill="#111"/>
 <!-- expand all -->
 <g transform="translate(-3.500 0)"><path d="M134.500 3.500v11M134.500 3.500h3M134.500 9h2M134.500 14.500h2" stroke="#777" fill="none"/><rect x="135.500" y="7.500" width="3" height="3" fill="#f19a2a"/><rect x="135.500" y="12.500" width="3" height="3" fill="#f19a2a"/><path d="M142 16l4.500-5.500h-2.500v-8.500h-4v8.500h-2.500z" fill="#3f6ea6" stroke="#2a4f7e" stroke-width=".6"/></g>
 <!-- collapse all -->
 <g transform="translate(-3.500 0)"><path d="M157.500 3.500v11M157.500 3.500h3M157.500 9h2M157.500 14.500h2" stroke="#777" fill="none"/><rect x="158.500" y="7.500" width="3" height="3" fill="#f19a2a"/><rect x="158.500" y="12.500" width="3" height="3" fill="#f19a2a"/><path d="M165 2l4.500 5.500h-2.500v8.500h-4v-8.500h-2.500z" fill="#3f6ea6" stroke="#2a4f7e" stroke-width=".6"/></g>
 <!-- remove -->
 <g transform="translate(-7.500 0)"><rect x="183.500" y="2.500" width="11" height="11" fill="#fff" stroke="#7a7a7a"/><rect x="192.500" y="11.500" width="5" height="4" rx="1.200" fill="#fff" stroke="#e0304a" stroke-width="1.400"/></g>
</svg>
<!-- layers tree -->
<div class="frame" style="left:0px;top:381px;width:318px;height:277px"></div>
<div class="selrow" style="left:21px;top:383px;width:296px;height:19px"></div>
<!-- checkboxes -->
<div class="cb" style="left:25px;top:386px"><svg width="9" height="9" viewBox="0 0 9 9"><path d="M1.500 4.500l2 2.500 4-6" fill="none" stroke="#3b4fa5" stroke-width="1.600"/></svg></div>
<div class="cb" style="left:25px;top:406px"><svg width="9" height="9" viewBox="0 0 9 9"><path d="M1.500 4.500l2 2.500 4-6" fill="none" stroke="#3b4fa5" stroke-width="1.600"/></svg></div>
<div class="cb" style="left:25px;top:426px"><svg width="9" height="9" viewBox="0 0 9 9"><path d="M1.500 4.500l2 2.500 4-6" fill="none" stroke="#3b4fa5" stroke-width="1.600"/></svg></div>
<div class="cb" style="left:25px;top:446px"><svg width="9" height="9" viewBox="0 0 9 9"><path d="M1.500 4.500l2 2.500 4-6" fill="none" stroke="#3b4fa5" stroke-width="1.600"/></svg></div>
<!-- symbols -->
<div style="position:absolute;left:46px;top:388px;width:8px;height:8px;border-radius:50%;background:#6a94c0;border:1px solid #5580ad"></div>
<div style="position:absolute;left:43px;top:412px;width:16px;height:1px;background:#a0522d"></div>
<div style="position:absolute;left:43px;top:424px;width:16px;height:16px;background:#c0b294;border:1px solid #8b8574"></div>
<div style="position:absolute;left:43px;top:444px;width:16px;height:16px;background:#e8704a;border:1px solid #9d5640"></div>
<div class="t" style="letter-spacing:-0.315px;margin-left:0.1px;left:65px;top:386px;font-weight:bold;text-decoration:underline">ne_10m_ports</div>
<div class="t" style="letter-spacing:-0.385px;margin-left:0.1px;left:65px;top:406px;font-weight:bold">ne_10m_railroads</div>
<div class="t" style="letter-spacing:-0.447px;margin-left:0.1px;left:65px;top:426px;font-weight:bold">ne_10m_urban_areas</div>
<div class="t" style="letter-spacing:-0.373px;margin-left:0.1px;left:65px;top:446px;font-weight:bold">ne_10m_admin_0_countries</div>
<svg style="position:absolute;left:298px;top:444px" width="16" height="18" viewBox="0 0 16 18"><path d="M1.500 2.500h13l-5 6v7l-3-2v-5z" fill="#fafafa" stroke="#666"/></svg>

<div id="map" style="position:absolute;left:322px;top:89px;width:740px;height:569px;background:#fff;border:1px solid #8d949c;overflow:hidden">
<svg width="738" height="567" viewBox="0 0 738 567" style="position:absolute;left:0;top:0">
<g fill="#e8714a" stroke="#3a2a26" stroke-width="0.900" stroke-linejoin="round">
<path d="M125.8 91.2 131.4 93.4 138.1 93.8 149.2 95.6 158.1 93.4 164.8 90.1 173.7 85.6 182.6 83.4 191.5 82.9 202.6 82.3 213.7 83.4 224.9 81.2 231.6 80 237.1 82.3 238.2 86.7 236 91.2 239.4 95.6 238.2 101.2 242.7 104.5 249.4 107.9 258.3 110.1 267.2 113.4 269 118.3 277.9 119.7 286.8 123.5 291.3 124.6 294.6 120.1 295.7 114.5 300.2 110.1 308 107.9 315.8 111.7 326.9 114.5 335.8 116.8 346.9 118.3 358.1 119 364.7 118.3 371.4 118.3 378.1 119.7 384.8 119 389.2 118.3 390.3 124.6 389.2 131.2 388.1 139 384.8 146.8 389.2 155.7 393.7 163.5 397 171.3 402.6 178 404.8 186.9 405.9 193.6 411.5 200.3 415.9 206.9 417.7 215.8 420.4 220.1 422.6 220 429.3 224.5 436 231.1 440.4 236.7 438.2 242.3 444.9 246.7 451.6 251.2 458.2 251.2 464.9 248.9 471.6 246.7 480.5 245.6 489.4 242.3 495 242.3 496.1 246.7 493.9 255.6 489.4 264.5 482.7 275.7 476.1 286.8 467.1 297.9 458.2 306.8 449.3 315.7 440.4 323.5 431.5 332.4 424.8 340.2 420.4 346.9 419.3 353.6 421.5 362.5 420.4 371.4 421.5 380.1 420.6 370 422.3 376.6 425.6 383.3 427.3 386.6 426.4 393.2 424.8 398.2 425.6 403.2 428.1 411.5 427.3 418.1 424.8 423.1 419 427.3 413.8 425.6 403.8 433.4 396 440.1 390.4 446.8 393.7 455.7 394.9 464.6 391.5 471.3 382.6 478 376.4 484.6 377.1 491.3 373.7 502.4 365.9 510.2 355.9 520.3 344.8 530.3 331.4 535.8 315.8 537 304.7 538.5 293.6 539.2 285.8 535.8 283.5 529.2 281.3 520.3 276.9 509.1 271.3 498 265.7 489.1 262.4 475.7 260.2 465.7 254.6 457.9 249 446.8 244.6 435.7 242.8 424.5 244.1 415.6 247.9 406.7 252.4 397.8 254.6 388.9 252.4 380 252.7 380.1 250.5 369.2 246 358 242.7 349.1 239.4 342.4 233.8 335.8 229.3 329.1 223.8 323.5 227.1 315.7 230.4 306.8 229.3 300.1 230.4 292.4 224.9 286.8 218.2 289 208.2 289 202.6 284.6 195.9 279 189.3 277.4 175.9 278.3 167 282.3 158.1 286.8 149.2 284.6 140.3 285.7 129.1 286.8 122.5 290.1 115.8 287.9 104.7 283.5 95.8 277.9 90.2 272.3 82.4 264.5 77.9 256.7 73.5 250.1 66.8 244.5 62.4 237.8 57.9 228.9 59 220 60.1 215.8 62.4 211.4 63.5 204.7 61.2 199.1 62.4 193.6 61.2 188 59 181.3 61.2 175.8 65.7 169.1 70.2 162.4 73.5 155.7 77.9 149.1 83.5 143.5 89.1 139 95.8 135.7 101.3 131.2 104.2 125.7 104.7 120.1 108 113.4 112.5 107.9 116.9 103.4 122.5 96.7Z"/>
<path d="M482.9 395.7 486.2 400.7 488.7 406.5 489.5 413.2 487.8 419.8 486.2 426.4 483.7 433.1 482 439.7 480.4 446.3 477.9 454.6 475.4 462.9 472.9 469.6 470.4 476.2 465.4 480.4 458 482.5 452.2 480.4 448.8 476.2 447.5 469.6 444.7 463.8 444.7 458 448 452.2 449.7 446.3 448.8 439.7 449.7 433.1 451.3 426.4 453 423.1 458.8 420.6 465.4 418.1 471.2 413.2 475.4 406.5 479.5 400.7 481.2 397.4Z"/>
</g>
<path d="M374.8 127.9 378.1 132.4 381.4 136.8 384.8 140.1 383.7 136.8 380.3 132.4 377 127.9Z" fill="#fff" stroke="#3a2a26" stroke-width=".6"/>
<g fill="none" stroke="#3a2a26" stroke-width="0.900" stroke-linejoin="round">
<path d="M157 94.5 157 102.3 159.2 112.3 147 114.5 143.6 120.1 136.9 124.6 124.7 129 115.8 132.4 112.5 136.8 111.8 144.6"/>
<path d="M111.8 144.6 94.6 145.7 91.3 151.3 90.2 153.5 82.4 169.1 73.5 181.3"/>
<path d="M111.8 144.6 111.8 151.3 91.3 152.4 90.2 164.6 83.5 171.3 83.5 181.3 59 181.3"/>
<path d="M111.8 144.6 135.8 158 175.9 184.7 182.6 189.1 188.1 193.6 189.3 196.3 193.7 196.3 209.3 190.2 243.8 168.4"/>
<path d="M135.8 158 125.8 158.4 132.5 215.8 133.2 220.1"/>
<path d="M193.7 196.3 194.6 210.3"/>
<path d="M221.5 82.3 218.2 88.9 216 97.8 220.4 104.5 224.9 111.2 227.1 117.9 228.2 124.6"/>
<path d="M242.7 104.5 238.2 111.2 231.6 120.1 228.2 124.6"/>
<path d="M228.2 124.6 230.4 133.5 231.6 142.4 227.1 149.1 229.3 155.7 233.8 161.3 243.8 168.4"/>
<path d="M243.8 168.4 259.4 173.5 263.8 171.3"/>
<path d="M263.8 171.3 270.5 168.6 289 176.9"/>
<path d="M263.8 171.3 266.1 180.2 269.4 188 267.2 202.5 265 211.4 258.3 220.1"/>
<path d="M328 115.7 326.9 126.8 328 178 327.3 190.2"/>
<path d="M328 177.6 402.6 177.6"/>
<path d="M269 168.6 321.3 191.4 327.3 190.2"/>
<path d="M321.3 191.4 322 220.1"/>
<path d="M63.1 211.7 73.9 211.7 82.2 214.1 88 219.1 91.8 221.3"/>
<path d="M91.8 221.3 90.5 226.6 92.5 233.2 93.8 239.5"/>
<path d="M91.8 220.8 98.8 218.3 133 218.3"/>
<path d="M64.8 231.2 72.2 230.7 78 232.4 72.2 233.4 65.6 233.1"/>
<path d="M64.8 237.4 78.9 237.4 79.7 239.9"/>
<path d="M79.7 239.9 87.2 239 93.8 239.5"/>
<path d="M79.7 239.9 77.2 243.2 72.2 245.7"/>
<path d="M93.8 239.5 97.1 241.5 102.1 240.7 107.1 239 110.4 243.2 112.9 249 115.4 253.2"/>
<path d="M78 256.5 87.2 254.8 93.8 255.6 98 259.8 98.8 264.8 98 268.1"/>
<path d="M98 268.1 93.8 273.9"/>
<path d="M98 268.1 103.8 265.6 106.3 269.8 107.9 271.4 113.7 269.8"/>
<path d="M115.4 253.2 117 259.8 115.4 266.4 113.7 269.8 114.6 276.4 117.9 283 118.7 289.7"/>
<path d="M115.4 253.2 123.7 252.3 128.7 250.7 132 251.5"/>
<path d="M132 251.5 132.8 243.2 138.6 236.6 148.6 228.3 158.5 225.8 167.7 223.3"/>
<path d="M132 251.5 137 255.6 145.3 255.6 149.4 258.1"/>
<path d="M149.4 258.1 150.2 266.4 146.9 274.7 148.6 283 149.4 286"/>
<path d="M149.4 258.1 149.4 249 165.2 248.2 167.7 247.8"/>
<path d="M167.7 247.8 170.2 256.5 171.8 266.4 172.7 276.4 173.1 279.7"/>
<path d="M167.7 247.8 173.5 249 176.8 256.5 178.1 268.1 178.5 276.4"/>
<path d="M167.7 247.8 175.1 245.7 181.8 242.4 185.1 239.9"/>
<path d="M167.7 223.3 175.1 233.2 181.8 239 185.1 239.9"/>
<path d="M185.1 239.9 190.1 243.2 191.7 251.5 188.4 258.1 185.9 266.4 185.1 276.4"/>
<path d="M190.1 243.2 193.4 234.9 198.4 230.7 209 229.1"/>
<path d="M167.7 223.3 175.1 221.6 190.1 220 193.4 213.3 195.1 210"/>
<path d="M199 229.9 209 232.4 215.6 235.7 220.6 234.9 232.2 233.2 243.8 233.2 253.8 230.7"/>
<path d="M267 210 260.4 218.3 255.4 224.9 253.8 230.7"/>
<path d="M253.8 230.7 257.1 234.9 261.2 239.9"/>
<path d="M261.2 239.9 260.4 244.9 255.4 248.2 252.1 254.8 245.5 263.1 240.5 273.1 233.9 275.6 228 279.7 224.7 283.9 223.9 287.2"/>
<path d="M261.2 239.9 264.6 243.2 265.4 251.5 267 254.8 260.4 254.8 257.9 257.3 262.1 263.1 267 269.8"/>
<path d="M267 269.8 277 267.3 288.6 263.1 298.6 256.5 305.2 251.5 311.9 248.5"/>
<path d="M321.8 210 321 217.5 313.5 220 310.2 231.6 307.7 236.6 311.9 240.7 312.7 248.2 315.2 251.5 318.5 258.1 319.3 262.3 322.7 263.1"/>
<path d="M322.7 263.1 328.5 253.2 335.1 254 341.7 257.3 351.7 258.1 359 254"/>
<path d="M322.7 263.1 328.5 268.9 335.1 276.4 341.7 285.5 349.2 291.3 359 290.5"/>
<path d="M341.7 285.5 331.8 284.7 323.5 287.2 313.5 291.3 305.2 289.7 293.6 285.5 287 290.5"/>
<path d="M287 290.5 286.1 296.3 275.3 295.5 272 299.6 271.2 306.3"/>
<path d="M267 269.8 262.9 276.4 260.4 281.4 262.9 289.7 268.7 298 271.2 302.9 271.2 306.3"/>
<path d="M271.2 306.3 262.1 304.6 252.1 304.9 240.5 304.3 231.4 304.6"/>
<path d="M240.2 304.6 240.2 311.6 230.5 312.1"/>
<path d="M252.1 304.9 252.9 309.6 259.6 311.2 260.4 316.2 257.1 322.9 257.9 330"/>
<path d="M287 290.5 285.3 299.6 282 309.6 280.3 319.5 277 326.2 273.7 330"/>
<path d="M404.6 210 402.9 216.6 401.3 225.8"/>
<path d="M401.3 225.8 406.3 226.6 411.2 224.1 415.4 226.6 422 225.8 428.7 229.9 435.3 234.9 439.5 239.9"/>
<path d="M439.5 239.9 435.3 243.2 435.3 246.5 440.3 247.8"/>
<path d="M441.9 249 445.3 254.8 451.9 259.8 461.9 263.9 473.5 267.3 465.2 276.4 455.2 286.3 448.6 288 435.3 293"/>
<path d="M481 245.7 481 258.1 473.5 267.3"/>
<path d="M435.3 293 428.7 293.8 422 296.3 413.7 294.6 405.4 291.3 398.8 289.7 395.5 287.2"/>
<path d="M435.3 293 430.3 300.5 429.5 309.6 430.3 322.9 431.2 330"/>
<path d="M401.3 225.8 398.8 231.6 393.8 239.9 388.8 248.2 386.3 253.2"/>
<path d="M386.3 253.2 384.7 259.8 384.7 264.8 379.7 266.4 383.9 270.6 390.5 276.4 393 283 395.5 287.2"/>
<path d="M349 259 355.6 255.6 359.8 252.3 365.6 255.6 370.6 249.8 373.9 241.5 378.9 240.7 379.7 247.3 384.7 251.5 386.3 253.2"/>
<path d="M395.5 287.2 387.2 291.3 386.3 293 378.9 293.8 370.6 294.6 365.6 295.5 360.6 291.3 355.6 288 349 290.5"/>
<path d="M386.3 293 389.7 299.6 391.3 306.3 388.8 312.9 384.7 317.9 384.7 324.5"/>
<path d="M365.6 295.5 364.8 302.9 366.4 306.3 360.6 312.9 357.3 322.9 356.5 330"/>
<path d="M280.5 320 277.1 326.6 272.2 333.3 268.8 341.6 262.2 345.7 250.6 347.4 245.6 348.2"/>
<path d="M260.5 320 258 326.6 255.6 332.4 248.9 331.6 243.1 334.9 241.4 341.6 244.8 344.9"/>
<path d="M245.6 355.7 262.2 355.7 273 355.7 276.3 363.2 280.5 369.8 292.1 369 292.9 364 298.7 363.2 300.4 365.6 306.2 365.6 307.8 376.4 310.3 383.1 311.2 388.9 321.1 389.4"/>
<path d="M321.1 389.4 320.8 401.3 308.7 402.2 308.7 419.6 310.3 426.2 317 431.5"/>
<path d="M321.1 389.4 328.6 391.4 335.2 393.9 341.9 393 348.5 396.3 355.1 397.2 358.1 397.2 358.1 403 356.8 397.2 351 394.7 349.3 389.7 351 383.1 349.3 378.1 353.5 373.9 361.8 371.8 365.1 373.1"/>
<path d="M317 431.5 328.6 432.9 335.2 429.5 345.2 426.2 349 423.2"/>
<path d="M243.1 428.7 253.9 427.9 262.2 430.4 283.8 430.9 302 433.7 317 431.5"/>
<path d="M302 433.7 328.6 432.9"/>
<path d="M302 434.5 302 440"/>
<path d="M301.4 435.8 300.5 459 295.6 459.4 295.2 499.7 290.6 503 280.6 502.2 277.3 498.9 274 499.7"/>
<path d="M301.4 435.8 310.5 435 318.8 436.6 323.8 433.3 328.8 433.3"/>
<path d="M328.8 433.3 333.7 441.6 340.4 449.9 345.3 455.7 353.6 460.7"/>
<path d="M353.6 460.7 347 464.8 340.4 470.6 335.4 478.1 330.4 483.1 318.8 481.4 313.8 482.3 308.8 488.1 301.4 489.7 299.7 484.8 296.4 476.5"/>
<path d="M353.6 460.7 361.9 461.5 368.6 460.7"/>
<path d="M368.6 460.7 375.2 451.6 378.5 443.3 377.7 433.3 376.9 425"/>
<path d="M368.6 460.7 370.2 468.2 372.7 474.8 372.7 483.1"/>
<path d="M368.6 483.4 371.9 485.6 372.2 490.6 369.4 493 366.1 491.4 365.3 487.2 368.6 483.4"/>
<path d="M342 508 344.5 504.7 350.3 501.3 354.5 505.5 353.6 509.6 348.7 513.8 343.7 513 342 508"/>
<path d="M384.7 325 398.8 334.9 408.8 341.6 417 347.4"/>
<path d="M357.3 325 384.7 325"/>
<path d="M354.8 328.3 360.6 326.6 364.8 330.8 363.9 336.6 359 338.6 354 335.8 352.7 331.6 354.8 328.3"/>
<path d="M353.1 333.3 363.9 334.1"/>
<path d="M354.8 339.1 356.5 349.9 359 358.2 362.3 366.5 364.8 371.5"/>
<path d="M364.8 371.5 372.2 375.6 379.7 379.8"/>
<path d="M379.7 379.8 384.7 380.6 388 384.7 389.7 392.2 398.8 393 407.1 392.2 415.4 389.7 422 388 426.7 386.4"/>
<path d="M379.7 379.8 382.2 386.4 380.5 394.7 378 404.6 383 410.5 388.8 412.9 388 419.6 392.2 426.2 396.3 417.9 394.6 412.9 390.5 409.6 388.8 399.7 389.7 392.2"/>
<path d="M378 404.6 370.6 410.5 362.3 413.8 361.4 417.1"/>
<path d="M349 421.2 355.6 418.8 361.4 417.1"/>
<path d="M361.4 417.1 367.3 421.2 375.6 422.9 378 427.9 378.9 436.2 378 440"/>
</g>
<path fill="none" stroke="#a0522d" stroke-width="1" stroke-linejoin="round" d="M480 19.3 483.3 18.8 487.1 18.2 491.1 16.9 494.5 16.9 496.9 16.9 500.4 15.6 504.6 15.4 507.5 14.9 510.1 14.5 513 12.6 515.6 12.1 518.1 10.5 521 8 523.4 7.2 527.1 5.8 529.8 3.5 533.9 2.7 536.7 1.2M510.1 14.5 512.4 17.8 514.5 20.7 516.2 22.9 519.1 26.3 522.2 28.9 524.3 31.7 527.1 32.7 528.2 35 531.6 37.5 533.1 39.8 536.3 41 539.1 42.6 541.9 44.4 545.1 45.8 548.5 48.4 551.8 50.5 554.8 51.9 558.5 54.2 561.4 54.6 564.4 56.7 566.9 59.8 569 61.6 570.4 63.9 574.1 67.5M522.2 28.9 519.2 30 516 32.1 511.9 32.9 508.9 35 506.1 36.6 501.7 37.2 498.9 37.2 495.7 38.6 499.6 40.2 504.1 41M536.7 1.2 539.9 2.5 542.1 4.4 544.9 6.8 547.8 9.6 549.9 10.9 552.9 13.4 555.7 13.9 559.1 15.6 562 18.1 564.3 19.5 567.6 20.6 569.5 23.1 572.9 24.1 575.3 26.2 578.9 26.9 580.9 28.6 583.7 30.1 586.9 31.8 589.8 33.3 593.4 34.7 595.8 36.2 598.9 38.5 601.8 39.9 605.4 42.2 609.1 45.2 611.4 48.2 611.4 53.1 608.5 54.2 605.4 56.7 602.3 58.9 598.7 61.1 596.6 62.4 593.4 65.1 590.6 64.8 587.6 64.3 584.6 64.5 581.3 63.9 577 65.1 574.1 67.5 572.5 70.6 570.1 72.3 568.8 74.5 566.8 77.2 563 78.1 559.6 79.6M572.9 24.1 575.5 27.1 578.2 29.6 581.3 32.6 578.1 33.1 574.1 35M505.3 62.2 509 63.5 512.3 63.7 516.2 65.1 519.6 65.9 521.8 67.4 525.5 68.1 528.2 69.9 531 70.9 534.7 72.3 537.8 73.1 540.3 74.8 543 76 546.6 76.7 548.6 77.1 551.9 78.2 554.8 79.6 558.2 79.5 560.4 78.1 564.2 78 566.8 77.2 566.6 80.6 565.6 84.4 566.9 87.8 569.2 91.7M480 92.9 484 92.3 487 92.2 490.8 91.9 494.5 91.7 498.3 89.2 500.2 88.3 504.1 85.6 508.3 86 511.3 85.6 515.6 84.3 518.6 84.4 522.6 84.6 526.1 83.8 529.2 83.3 533.1 83.2 536.3 83.5 540.4 84.7 544.3 85.3 547.5 86.8M605.4 56.7 609.2 57.4 612.5 58.1 615.1 57.9 618.9 57.6 620.8 57.4 624.7 56.7 627.5 56.8 631.4 57.5 634.4 57.9M586.1 77.2 589.6 75.4 593.4 72.4 596.8 71.8 599.5 72.1 603 71.2 606.6 72.2 610.2 72.4 608.2 75.6 606.6 79.6 602.4 80.6 598.2 80.8 594.7 80.3 592.7 79.4 589.6 77.4 586.1 77.2M590.9 11.6 594.7 11.6 597.5 10.3 601.5 10.1 605.4 9.6 608.9 9.3 613 8.3 615.7 8.2 619.9 8.4 622.7 7.2 627.2 7.7 629.3 6.6 633.2 6 633.5 2.7 634.4 0M633.2 6 634.6 9.8 636.5 13.1 638 16.9 638 19.9 638.3 23.4 639.2 26.5 639.9 29.6 639.4 32.5 640.4 36.2 637.2 37.5 634.4 38.6M638 16.9 641.5 17.1 644.7 17.8 647.3 17.9 650.6 18.7 653.7 18.8 657.2 18.9 660.8 18.1 664.6 18.5 668.1 18.1 671.1 18 675.3 18.6 679 18.1 681.6 14.7 683.6 12 685 8.4 686.5 5.3 688.6 2.4M679 18.1 676.4 21.3 675.2 24.2 672.9 26.5 671.5 29.2 669.6 31.4 666.9 33.9 665.7 36.2 662 38.1 659.7 41 656.5 41.2 651.9 42 648.8 43.4 645.7 43.6 640.9 45.1 637.5 45.7 634.4 45.8 631 46 627.8 45.3 623.9 44.3 619.9 44.6 617.4 45.8 614.5 46.4 611.4 48.2M679 18.1 682.6 20.2 685 20.9 689 23.1 692.2 24.1 694.9 25.5 697.9 27.9 701.6 29.4 704.3 31.4 707.1 32.2 710.1 33.1 712.8 34.1 716.4 35 720.1 35.5 722.7 35.7 725.7 37.2 728.4 37.4 731.5 39 734 40.8 736.9 42.2 733.8 42.9 729.1 44.9 726 45.8 723.6 48.2 720 50.6M480 57.9 483.5 58.8 487.2 59.1 484.4 60.8 482 63.2 480 65.1M480 106.1 482.9 104.1 486.7 103.5 489.6 101.3 491.7 99.2 494.3 97 496.9 94.1M492.1 97.7 494.6 99.5 496.5 101.2 499.3 103.8 501.7 106.1 504.5 107.9 507.9 110.6 511.4 112.2 513.3 114.9 516.2 116.3 518.6 118.2 521.6 120.5 525.1 121.9 527.6 123.9 530.6 125.4 533.5 127.3 535.8 130 537.9 131.4M557.2 129 560.4 129.9 563.2 131.8 566.8 132.7 570.1 133.6 573.3 132.9 575.4 133.3 578.9 133.9 581.7 133 585.8 132 588.5 130.2 591 129.1 593.9 126.9 597 125.4 600.1 123.2 602 122.7 605.4 120.6 608.8 119.2 612.7 118.2M593.4 120.6 597.1 123.2 600.6 125.4 601.1 128.4 602.9 131.8 604.2 135.1 603.4 138.4 604 141.3 603 144.7 603.9 147.4 604.3 151.4 605.4 154.4 607.3 157.3 610.2 159.2M427.8 10.5 431.5 10.3 434.7 11.1 437.6 12.1 440.4 12.1 443.2 11.2 446.9 10.2 449.4 8.9 452.9 7.4 456.7 8 459.2 7.7 462.3 8.4 465.4 9 468.1 12 470.2 14 472.7 17.4 474.8 19.9 477.5 20.1 481.3 18.6 484.9 18.3 487.4 18.4 490.3 18.1 493.8 17.2 497 16.4 499.7 15.4 503.1 15.2 505.6 15 509.7 14.3 512.5 13.7 516 11.9 518.4 10.4 522.4 8.3 525 7.4 528.7 5.5 532.7 4.1 536 2.7M427.8 10.5 430.7 13.5 434.1 16.8 433.1 20.3 431.8 23.6 430.9 26.2 433.5 27.5 436.6 28.8 440.7 31.2 443.5 32.5 446.2 33.6 449.6 36 453.3 37.6 456 38.8 459.3 39.5 462.1 40.9 465.5 42.6 468.1 43.4 471.7 45 474.4 46.7 476.8 50.2 479.4 51.9 481.1 54.4 484.3 56.9 487.4 59.1M449.8 -0.4 450.7 4.2 451.3 7.4 452.9 7.4M474.8 19.9 473 22.8 471.2 26.2 468.6 29.4 468.2 32.9 466.8 36 467 38.8M427.8 27.8 431.2 29.7 434.1 31.6 436.8 33.7 440.4 35.6 442.9 36.8 446.9 37.9 449.9 39.8 452.9 40.3M409 63.8 412.7 62.7 415.7 62.7 417.8 61.7 421.2 60.7 424.7 60.7 427.9 60.4 430.7 59.3 434.4 57.4 437.8 57.1 440.4 56 444.1 55.7 447 54.5 450.2 54.7 453.4 53.4 456 52.9 459.5 52.2 461.7 51 464.8 50.6 468.1 50.3 471.7 49.7 474.6 51.3 476.8 53 479.3 54.4 482.5 55.8 484.3 58.1 487.4 59.1M443.5 32.5 445.1 35.5 445.8 38.8 447.4 41.5 447.8 44.7 449.8 48.2 453.3 50.1 456 52.9M409 76.4 412.1 75.5 414.9 74.9 418.3 74.4 420.9 73.8 424.2 73.8 427.8 73.3 430.3 71.8 434 71.6 437.5 70.3 440.4 70.1 443.4 69.2 446 69.2 449.4 67.2 452.9 66.5 456.2 66 459.2 65.4 461.8 64.3 465.8 64.1 469 63.8 472.3 63.1 474.5 62.5 478 62.3 481.6 61.4 484 59.6 487.4 59.1M409 88.9 412.4 88.3 415.4 85.7 417.8 84.6 421.1 83.3 424.7 82.7 427.2 83.3 431.5 83 434.7 83.8 437.2 84.2 440.8 86 444.1 85.9 446.4 87.9 449.8 88.9 453.5 87.7 455.8 88.1 458.6 86.9 462 86.7 465.4 85.8 469.1 85 472 85.5 475.3 84.9 478.6 84.3 481.1 84.2 484.1 84.9 487.8 86.3 490.2 86.9 493.9 88.5 497.1 89.3 499.9 90.5 503 89.1 506.5 88 509.3 88 512.7 86.2 515.6 85.8 518.4 85.8 522.1 85.3 525.5 84.2 528.7 84.1 531 83 534.4 82.7 537 83.7 541.3 84.5 543.9 85.7 547 87.4M427.8 95.2 430.4 97 433.7 97.7 436.8 100.1 440.4 101.5 443.6 102 446.3 104.5 449.4 105.1 452.9 106.2 451.8 110.2 451 113.9 449.8 117.1 453 117.7 455.6 118.6 459.2 120.3M487.4 59.1 486.3 61.3 483.6 65.3 482.3 67.9 481.1 70.1 482.9 72.4 485.4 75.3 488.3 77.3 490.5 79.5 493.2 82.8 495 85.1 497.5 87.2 499.9 90.5M490.5 95.2 493.5 97.2 496 98.5 498.1 100.8 500.9 102.1 503.1 104.6 505.4 106.5 507.5 108.4 510.9 110.1 513.3 112.3 515.6 114 517.7 115.7 521.3 117.5 523 119.1 525.2 121.1 528.1 123.4 531.2 125.6 533.7 127.8 535.8 129.6 538.2 130.8 540.7 132.8M575.2 48.2 578.9 51.9 581.4 54.4 579.9 51.3M118 44.4 121.2 47M118 44.4 118.1 47.2 117.2 49.8 117.4 52.1M117.4 52.1 121.9 52.1M117.4 52.1 115.7 54.6 113.8 57.7M117.4 52.1 119.3 54.3 120.5 56.7 121.9 58.8 123.6 60.6M113.8 57.7 116 58.2 118.5 59.2 120.9 59.8 123.6 60.6M113.8 57.7 114.5 60.9 114.3 64.4 114.7 67.7M114.7 67.7 114.4 70.4 114 73M114.7 67.7 116.5 69.1 118 71.3 120 72.7 122.2 74.5M114 73 116.6 73.5 119.5 74.2 122.2 74.5M114 73 115.2 75.5 116.3 78.5M116.3 78.5 119.8 78.5 123.2 78.1M121.2 47 123.8 47.2 126.3 47.4M121.2 47 121.5 49.6 121.9 52.1M121.9 52.1 122.8 55.3 122.8 57.8 123.6 60.6M123.6 60.6 126.7 59.6 130.5 58.7M123.6 60.6 122 63.1 120.8 66.5M120.8 66.5 121.5 69.3 121.4 72.1 122.2 74.5M122.2 74.5 123.2 78.1M123.2 78.1 123.8 80.9 124.5 83.7M126.3 47.4 129.1 46.5 131.6 46.4 133.7 45.9 136.7 45.5M126.3 47.4 128.1 50.1 129.9 53.5M129.9 53.5 130 55.7 130.5 58.7M130.5 58.7 132.7 59.4M130.5 58.7 130.5 61.6 129.6 63.6 129.6 66.6M129.6 66.6 128.9 69.6 129 72.4M129.6 66.6 131 64.3 132 61.4 132.7 59.4M129 72.4 129.7 75.3 129.7 78.4 130.3 81.3M130.3 81.3 133.3 77.9M135.8 42.5 138.5 42 141.8 42M135.8 42.5 136.7 45.5M136.7 45.5 139.8 47.2 143.2 48.4M136.7 45.5 136 48 135.1 50.7 134.5 53.9M136.7 45.5 139.5 43.8 141.8 42M134.5 53.9 137.5 53.7 140.5 52.7M134.5 53.9 133.9 56.6 132.7 59.4M132.7 59.4 135.5 60.3 138.6 60.7 140.9 61.5M133.5 64.2 135.9 63.8 138.3 63.9 141.5 64.1 143.9 64.4M133.5 64.2 132.9 67.8 133.4 70.8 132.9 73.9M132.9 73.9 135.2 72.7 137.6 71.9 140 71.3M133.3 77.9 137.2 78.3 140.3 79M133.3 77.9 135.4 75.6 137.8 73.2 140 71.3M141.8 42 142.1 45 143.2 48.4M141.8 42 143.9 43 145.7 44.6 148 46.2 150.3 47.5M143.2 48.4 147 48.1 150.3 47.5M140.5 52.7 142.9 53.5 145.3 53.5 148.2 53.7M140.5 52.7 140.2 55.9 141.1 58.7 140.9 61.5M140.9 61.5 143.6 60.1 146.6 59 149 57.4M143.9 64.4 147.1 65.7 150.1 67.5M143.9 64.4 142.2 66.6 140.9 69.3 140 71.3M140 71.3 142.7 72 144.5 72.9 147.7 73.4 150 74.1M140 71.3 140.2 73.5 140.4 76.2 140.3 79M140 71.3 141.7 73.3 143.5 75.2 146.1 76.8 147.6 78.6M140.3 79 144.1 79.1 147.6 78.6M140.3 79 141.3 81.3 142 84.4M150.3 47.5 149.3 50.2 148.2 53.7M150.3 47.5 152.1 51.4M148.2 53.7 152.1 51.4M148.2 53.7 149 57.4M149 57.4 152.6 58.9M149 57.4 149.2 59.9 149.2 62.8 149.5 65.4 150.1 67.5M149 57.4 150.5 54.7 152.1 51.4M150.1 67.5 149.8 70.5 150 74.1M150 74.1 152.2 72.5 155.2 70.9M150 74.1 152 76.2 153.4 78.3M153.8 44.4 152.5 47.4 152.1 51.4M152.1 51.4 154.7 51.2 157.5 51.6 160.3 51.9M152.1 51.4 155 53.3 157.1 55 160.3 56.7 162.7 57.9M152.6 58.9 155.1 59.1 157.8 58.3 160.1 58 162.7 57.9M152.6 58.9 152.1 62.2 152.2 65.3 152.3 67.9M152.3 67.9 155.2 68 158.7 68.3M155.2 70.9 158.6 71.3 161.2 70.9M155.2 70.9 154.8 73 154.2 75.8 153.4 78.3M159.1 44.6 160.9 46.1 163.3 46.8 166 47.9M159.1 44.6 159.5 48.5 160.3 51.9M160.3 51.9 162.9 52.6 165.3 53.5 167.8 54.5M160.3 51.9 161.2 54.7 162.7 57.9M162.7 57.9 166.8 58.2M158.7 68.3 161.2 70.9M158.7 68.3 160.1 65.9 161.8 63.9 163.3 62.1 165.2 60.6 166.8 58.2M166 47.9 166.8 51.2 167.8 54.5M167.8 54.5 170.2 53.7 173.9 53 176.4 52.8M167.8 54.5 166.8 58.2M172.9 47.6 174.4 50 176.4 52.8M136.7 60.4 134.8 63.6 132.8 65.8 129.8 68.6 128 71.7 124.7 72.1 121.8 72.3 118.2 72.4 114.6 72.4 111.3 72.5M125.1 82 126.5 79 127.1 75.1 128.7 72.4 129.8 68.8 131.2 65.3 132.2 62.5 135.1 61.3 138.8 60.2 141.8 58.8 144.2 57.4 148 56.6 150.4 54.7 153.6 54M143.5 70.9 141.7 67.6 140.4 64.1 139 61.4 137.1 57.7 135.4 54.8 138.1 51.8M176 54.3 172.9 55.6 170.1 55.6 166.9 56.6 164.4 58 160.9 58.2 158 59.6 155.4 59.9 157.6 57.1 160.1 55.2 163.5 53.3 165.7 50.6M173.4 55.1 170.3 56.2 167.2 57.1 164.4 58.7 162.2 59.7 159.3 61.1 155.8 62.9 153.3 63.8 150.1 65.1 147.1 66.7 144.8 68.7 142.1 69.8 140.2 71 137.2 73.4 135 74.3 131.7 75.9 130 77.7 127.3 80 124.3 80.9 121.9 82.8M127.2 72.8 127.8 69.8 127.5 65.6 127.8 62.4 128.8 59.2 130.3 55.6 130.9 52.7M143.6 59 147.1 56.9 151 55M143.6 59 146.5 56.7 149.8 53.5 152.9 51.4 156.4 49.3 160.2 46.7 163.1 43.7M143.6 59 140 56 137.3 52.9 133.6 49.9 130.7 47.1 127.4 43.9M143.6 59 146.8 55.5 149.3 52.2 152.3 48.7 154.9 45.6M143.6 59 138.9 57.5 135 55 130.4 53.7 126.2 51.3M143.6 59 144.2 55 144.1 50.7M149.9 2.1 154.1 1.6M149.9 2.1 147.1 4.3M147.1 4.3 150.5 4.1 153.4 4.9 156 4.6M150.5 14.2 148.4 16M148.4 16 151.8 17.1 154.6 17.5M148.4 16 149.7 18.5 151 20.9 152.8 22.8M156 4.6 158.9 5.1 161 6.2M156 4.6 155.1 6.7 153.7 8.9 153.2 11.5M153.2 11.5 154.3 14.2 154.6 17.5M153.2 11.5 155.8 9.9 158.2 8.3 161 6.2M154.6 17.5 157.4 18.3 160.1 18.4M154.6 17.5 154.1 20.3 152.8 22.8M152.8 22.8 155.7 23.5 157.6 24.3 160.2 24.7M152.8 22.8 153.4 26.1 154.2 29.1 155.5 31.8M161 6.2 161.1 11.1M161.1 11.1 160.2 14.4 160.1 18.4M160.1 18.4 164.8 17.7M160.1 18.4 160.5 21.2 160.2 24.7M160.2 24.7 164.6 23.7M160.2 24.7 160.3 29.7M160.2 24.7 161.6 22 163.1 19.8 164.8 17.7M160.3 29.7 159.4 32.9 158.3 36.5M164.8 17.7 164.4 21.1 164.6 23.7M247.8 52.3 251.7 54.1M251.7 54.1 254.7 55.7 257.5 57.2 260 58.5M261 46.4 265.4 47.4M261 46.4 262.7 50.9M262.7 50.9 266.3 51.2 269.3 52.4M262.7 50.9 261.6 53.8 260.9 55.9 260 58.5M260 58.5 263.1 59 266.4 59.2 269.3 59.3M265.4 47.4 268.6 47.4 271.4 46.8 274.1 46.9M265.4 47.4 267.6 50 269.3 52.4M265.4 47.4 267.5 49.2 269.4 50 271.6 51.8 274.2 52.7 276 54.4M269.3 52.4 272.4 53.3 276 54.4M269.3 52.4 269 55.7 269.3 59.3M269.3 59.3 268.3 61.6 266.5 64.5M274.1 46.9 274.5 49.3 275 51.8 276 54.4M276 54.4 276.1 58.4M276.1 58.4 278.9 57.8 281.6 57.8 284 57M276.1 58.4 275.9 61.2 275.5 63.4 275.3 66.3M284.5 51.1 284.1 54.2 284 57M284.5 51.1 285.2 54 286.2 56.5 286.6 59 287.6 61.8M284 57 285.9 59.3 287.6 61.8M287.6 61.8 290.6 62.7 293.7 64.7 296.4 65.6M295.8 47.4 300.8 47.8M295.8 47.4 296.5 51.2 297.1 54.5M295.7 60.8 296.4 65.6M296.4 65.6 299.1 63.6 300.9 61.9M300.8 47.8 303.1 47.3 305.5 47 308.4 46.9 311 46.3M300.8 47.8 301.1 50.1M301.1 50.1 303.8 51.4 306.1 51.7 308.8 52.8 311 53.9M301.1 50.1 300.7 53.3 301.3 56.1 300.9 59 300.9 61.9M300.9 61.9 304.4 61.3 307.7 60.1M302.2 64.7 304.2 66.2 306.8 67.4 309.3 68.3M311 46.3 314.7 47.6M311 46.3 311 48.5 310.6 51.5 311 53.9M311 53.9 313.6 54.2 316.4 54.7 319.2 55M307.7 60.1 308.5 63.2 309 65.2 309.3 68.3M309.3 68.3 311.7 66.6 314.9 64.1M314.7 47.6 316.8 47.2 319.5 47.7 322.1 47.1 324.7 47.3M319.2 55 322.3 53.3 324.7 51.5M314.9 64.1 317.8 64.3 320.5 64.6 322.5 64.6 325.4 65M314.9 64.1 317.2 61.5 319.5 59.4 321.9 57.5M324.7 47.3 324.7 51.5M324.7 51.5 327.6 52.2 329.8 53.7M321.9 57.5 324.8 58.2 327.4 58.2 330.3 58.6M321.9 57.5 324.3 59.4 326.1 61.2 329 63.3 331 65.2 333.5 66.6M325.4 65 328.4 65.1 331 66.2 333.5 66.6M329.8 53.7 330.3 58.6M330.3 58.6 334 59.4 337.2 60.7M330.3 58.6 331.3 61.4 332.7 63.8 333.5 66.6M333.5 66.6 338.2 65.1M337.7 54.1 340.4 52.7 342.3 51M337.2 60.7 340.1 61.3 343.4 61.9 346.4 62.1M337.2 60.7 338.2 65.1M338.2 65.1 342.4 66.6M338.2 65.1 340.8 63.7 343.4 63.5 346.4 62.1M342.3 51 343.5 54.1 344.7 56.7 345.5 59.5 346.4 62.1M306.4 64.6 302.6 64.5 300.3 63.8 296.4 63.6 293.7 62.8 289.8 62 286.7 61.5 283.5 61.4 280.8 60.2 277.1 59.7 273.8 59.8 269.9 61.7 267.1 63.2 263.7 64.2M289.7 46 288.8 49.2 288.6 51.6 288.6 55.1 285.2 58 283.1 62.1M316.1 49 312.6 50.4 310.1 53.1 306.6 54.8 310.1 54.5 312.2 53.8 315.9 53 319.2 52.2 322.3 52.2 324.1 50.8 327.9 51.2 330.2 50.1 334 49.4 336.8 49.2M335.8 59.2 332.7 58.3 329 57.9 325.3 56.9 322.2 56.8 318.4 55.6 315.1 56.2 310.9 56.2 308.2 57.5 304 57.8M332.1 54.9 329.4 55.3 325.9 56.1 323 56.9 319.1 56.5 315.9 57.6 313 58.3 316.3 59.3 320 59.1 323.2 60.7 326.5 61.1 329 62.1 332.5 62.4M329.8 64.7 331.9 61.4 333.4 57.1 337.2 56.3 341.7 55.3M344.6 61.2 348.7 59.8 351.8 59.3 355.8 59 359.6 60.6 364.7 62.3 368.6 60.8 373.6 60.1 377.5 62.6 382.5 64.6 385.4 65.7 389.4 65.3 393.6 66.8 398 67.8 401.7 70.3 404.7 71.2 409.1 69.9 412.1 69.1 415.9 69 420.3 71 423.5 71.9 427 73.5 431.2 73.5 435.9 72.4M364.7 62.3 366.9 59.5 368.6 55.9 371.4 53.4 374.4 53.4 378.9 52.1 382.5 52.3 386.8 53.1 389.8 54 393.6 55.7 397.7 55.1 402.5 53.4 406.7 53.6 411.4 54.6 415.9 55.7 420.2 54.3 424.1 53.5 427 53.4 432.1 50.9 435.9 47.9M404.7 71.2 403.1 75.6 402.5 80.1 401.1 83.6 400.3 87.9 398.7 91.6 398.1 95.7 397.7 100.9 395.8 104.6 395.9 108.4 394.7 113.5 394.9 118.6 395.8 122.4 396.2 127.3 398.1 131.4M402.5 80.1 405.9 82 409.2 82.9 413.7 83.5 417.1 84.8 420.3 87.8 424.8 89.1 427.8 90.8 430.6 94.2 433.7 95.7 436.6 99.2 440.4 102.4 444.3 103 449.3 104.6 452.7 107.2 454.7 108.4 458.2 111.3 460.5 113.7 464.1 115.4 467.1 118 471.1 120.4 476 122.4M427 73.5 429.6 78.4 431.5 82.4 430.5 85.3 429.2 89.1 426.3 93.9 424.8 98 429.1 100.6 433.7 102.4M344.6 61.2 346.1 64.5 349.1 66.8 352.2 69.5 355.8 71.2 360.8 72.3 364.7 73.5 368.4 73 373.6 71.2 376.5 69.6 379.2 66.3 382.5 64.6M355.8 71.2 358.5 74.3 360.2 77.9 364.1 78.8 369.1 80.1M393.6 66.8 394.9 70.5 395.8 75.7 399.2 77.8 402.5 80.1M373.6 60.1 378 55.7 382.5 52.3M415.9 55.7 418.1 62.3 417 65 415.9 69M397 95.7 401.2 97.4 404.7 98 409.2 93.5M603.4 132.6 606 134.3 608.2 135.6 611.3 137.2M611.7 108.1 615 106.3 617.6 104.4M611.7 108.1 610.2 111 609.3 113.5 607.5 115.6M607.5 115.6 610.6 114 613.9 111.9M607.5 115.6 607.7 118.6 607.4 121.1M607.5 115.6 609.5 113.7 611.1 111.9 612.8 109.9 614.7 108.5 616.3 106.4 617.6 104.4M607.4 121.1 610.6 121 614.3 121.6 617.2 121.5M607.1 129.5 610 129.2 613 128.5 616.3 127.8M607.1 129.5 608.8 132.1 609.7 135 611.3 137.2M607.1 129.5 609.6 131.3 611.1 132.8 613.6 134.4 615.7 135.6M611.3 137.2 615.7 135.6M611.3 137.2 613.4 139.2 614.9 141.5 617 144.2M606.6 143.9 609.4 143.7 612 144.2 614 144.1 617 144.2M606.6 143.9 607.8 147.4 609.5 150.7M609.2 156.6 612.6 157.3 615.3 157.7 618.4 157.8M616.8 102.5 619.2 102.2 622.3 101.4M616.8 102.5 617.6 104.4M617.6 104.4 620.4 106 622.5 107.2 624.7 109.1M617.6 104.4 616.3 106.7 615.5 109 613.9 111.9M617.6 104.4 620.3 103.3 622.3 101.4M613.9 111.9 616.6 112.5 619.5 113.3 621.9 114 624.8 114.2M613.9 111.9 614.4 114.6 615.2 116.5 616.4 119 617.2 121.5M617.2 121.5 621.1 122.7M616.3 127.8 619.6 128.3 622.2 128.7M615.7 135.6 619.4 135.3 622.5 135.2M615.7 135.6 616.5 138.7 616.7 141.6 617 144.2M617.4 150.6 620.4 150.1 623.4 149.8M617.4 150.6 617.6 154.2 618.4 157.8M618.4 157.8 620.9 158.3 623.4 158.3M618.4 157.8 617.4 160.5M617.4 160.5 620.4 163.3 622.7 165.2M622.3 101.4 623.5 103.9 623.9 106.4 624.7 109.1M622.3 101.4 624.8 102.6 627.9 104.4M624.7 109.1 626.4 106.8 627.9 104.4M624.8 114.2 627.5 113.3 629.5 112.1M624.8 114.2 623.9 117.2 622.2 120 621.1 122.7M621.1 122.7 625 121.5 628.1 121M621.1 122.7 621.7 125.4 622.2 128.7M621.1 122.7 623.1 120.8 624.6 118.9 626.6 116.5 628 113.8 629.5 112.1M622.2 128.7 624.8 129.2 627.3 128.9 629.6 128.8 632.7 129M622.5 135.2 625.5 135.5 629 136.4M622.5 135.2 624.9 136.5 626.8 138.3 628.5 139.9M625.7 140.2 625.1 143 624.4 147 623.4 149.8M625.7 140.2 627.1 142.8 627.7 145.6 629.2 148.5M623.4 158.3 625.7 157.7 628.7 156.5 631.2 155.7M622.7 165.2 625.3 163.8 628.8 162 631.4 160.8M627.9 104.4 630.7 105.7 633.2 106.5 636.5 108.2M627.9 104.4 628.2 107.2 628.7 109.8 629.5 112.1M627.9 104.4 630.3 103.7 632.6 103.4 635.2 102.5M629.5 112.1 632.5 114.1 635.3 115.5M629.5 112.1 629 115.4 628.7 117.7 628.1 121M629.5 112.1 630.7 114 632.3 116.3 634.2 118.1 635.9 120.3M628.1 121 629.3 123.5 631 126.7 632.7 129M632.7 129 634.6 127.1 637.3 125.9M629 136.4 632 136.5 635.9 136.6M629 136.4 628.5 139.9M629 136.4 631.6 138.3 633.7 139.4 636.1 141.4M628.5 139.9 631.2 140 633.9 140.4 636.1 141.4M628.5 139.9 628.6 142.5 628.6 145.8 629.2 148.5M629.2 148.5 632.5 147.9 635.4 148 638.6 147.5M629.2 148.5 629.9 151.7 631.2 155.7M631.2 155.7 631.3 158.3 631.4 160.8M631.4 160.8 634.3 161.4 636.6 162.3M632.5 169.2 635.2 169.2 638 169.8M632.5 169.2 632.4 171.9 632 174.5M632.5 169.2 634.1 167.1 634.9 164.4 636.6 162.3M632 174.5 635.6 174.8 639.2 174.6M635.2 102.5 638.2 102.3 641.1 102.4 643 102.1 646.2 102.5M635.2 102.5 636.2 105.4 636.5 108.2M636.5 108.2 635.5 111.8 635.3 115.5M636.5 108.2 638.5 106.6 641.7 105.8 643.6 104.3 646.2 102.5M635.9 120.3 639.8 119.8 642.8 119.2M635.9 120.3 636.6 123.1 637.3 125.9M637.3 125.9 640.3 125.9 643 126.3 646.1 126.5M637.3 125.9 636.9 128.7 636.3 131.3 636 134.2 635.9 136.6M635.9 136.6 638.7 135.5 642 133.8M635.9 136.6 636.1 141.4M636.1 141.4 638.8 141.8 641.2 141.8 643.6 141.6 646.5 141.8M636.1 141.4 637.2 144.3 638.6 147.5M638.6 147.5 641.8 147.4 645.4 146.7M638.6 147.5 637.8 150 636.8 152 635.6 154.5M638.6 147.5 640.3 149.6 642.6 152.6 644 155M636.6 162.3 639.9 163.3 642.6 163.9M636.6 162.3 636.9 164.6 637.5 167.5 638 169.8M638 169.8 639.2 174.6M639.2 174.6 638.6 177.2 639 180.5 638.2 183.3 638.1 185.8M638.1 185.8 640.5 183.5 642.5 181.4M638.1 185.8 635.8 188.5M635.8 188.5 638.9 189.1 641.5 190.1 645 191.1M635.8 188.5 635.7 190.9 636.7 193.3 636.9 196M636.9 196 638.8 197.1 641.7 197.8M646.2 102.5 646.1 104.9M646.1 104.9 646.3 108.1 646.2 110.6 646.6 114.1M646.6 114.1 649.6 115.3M646.6 114.1 644.7 116.4 642.8 119.2M642.8 119.2 645.6 121 648.4 122.4 651.6 123.3M642.8 119.2 644.2 121.4 645.1 124 646.1 126.5M642.8 119.2 645 122 646.5 124.3 648.7 127 650.7 129M642.8 119.2 645 117.7 647.4 116.9 649.6 115.3M646.1 126.5 644.7 129.2 643 131.1 642 133.8M642 133.8 643.4 136.2 644.5 138.7 646.5 141.8M642 133.8 643.8 135.7 645.9 137.6 648 139.9 649.8 141.9M646.5 141.8 649.8 141.9M646.5 141.8 645.9 144.1 645.4 146.7M645.4 146.7 644.8 149.6 644.5 152.1 644 155M645.4 146.7 647 149 647.4 151.6 648.9 153.7 649.9 156.6 651.2 158.6M644 155 646.8 156.1 648.7 157.1 651.2 158.6M644 155 643.7 157.9 643 160.7 642.6 163.9M642.6 163.9 643.5 168M642.6 163.9 644.5 163 647.1 161.4 649 159.9 651.2 158.6M643.5 168 646.3 168.3 650 168.1 653 168.4M643.5 168 644.2 171.1 645.4 173.9 646.8 176.9M646.8 176.9 650.3 176.9 653.9 176.8M646.8 176.9 644.5 179.3 642.5 181.4M642.5 181.4 645 182.8 647.3 185.1 649.7 186.5M642.5 181.4 643.4 183.7 643.7 186.7 644.7 188.8 645 191.1M642.5 181.4 644.5 183.3 646.8 186.4 648.5 188 650.3 190.5M645 191.1 647.9 190.8 650.3 190.5M645 191.1 644.3 193.3 643.1 195.8 641.7 197.8M641.7 197.8 644.9 198 647 198.4 650.4 198.9M641.7 197.8 642.6 200.4 643.9 202.4 645.5 205.2M642.8 212 646.4 212.7 649.4 213.7M650.9 105.1 650.3 107.3 650.6 110.3 650 113.1 649.6 115.3M649.6 115.3 652.6 115.1 655.6 114 658.7 113.7M651.6 123.3 655 123 657.7 123.1M651.6 123.3 651.1 125.9 650.7 129M650.7 129 653.5 129.3 655.8 129.8 659.1 129.9M650.7 129 650.3 131.6 649 134.4 648.6 137.4M648.6 137.4 651 136.4 653.8 135.9 655.8 135.5 658 134.7 660.6 133.8M648.6 137.4 649.8 141.9M648.6 137.4 650.5 136 652.8 134.3 654.9 132.6 656.9 131 659.1 129.9M649.8 141.9 650.6 145.1 650.9 148.3 651.3 151.4M649.8 141.9 651.5 144 653.1 146.8 654.5 149.2 655.8 151.2M651.3 151.4 655.8 151.2M651.3 151.4 653 149.4 654.7 147.2 657.2 145.4 658.4 143.2 660.6 141.5M651.2 158.6 653.3 156 656.1 153.4M651.2 158.6 651.8 161.5M651.8 161.5 652.8 164.7 653 168.4M651.8 161.5 653.9 163.7 655.4 165.4 657.4 167.6 659.1 169.6 660.7 172M653 168.4 655.4 169.6 657.7 170.9 660.7 172M653 168.4 653 171.2 653.8 173.6 653.9 176.8M653.9 176.8 657.8 177.2M653.9 176.8 652.5 179 651.4 181.6 650.5 183.9 649.7 186.5M649.7 186.5 650.3 190.5M649.7 186.5 651.8 187.2 654.2 188.4 656.9 190.2 659 191.1M650.3 190.5 652.8 190.9 656 191.3 659 191.1M650.3 190.5 650.1 192.9 650.7 196.1 650.4 198.9M650.4 198.9 653.6 197.7 656.2 196.6M650.4 198.9 649.4 202 648.7 204.3M648.7 204.3 651.2 204.7 653.6 204.9 656.8 204.8 659 205.5M648.7 204.3 649.3 207.9 648.7 210.7 649.4 213.7M649.4 213.7 651.7 213.7 654.8 214.1 656.9 214.2 659.8 214.1M649.4 213.7 649.1 216.2 648.5 219.6M648.5 219.6 651.4 218.7 654.8 218.3 657.9 217.7 660.7 217.4M648.5 219.6 649.5 222.3 649.9 225.8M648.5 219.6 651.2 218.1 653.2 217.3 655 216.2 657.6 215.1 659.8 214.1M649.9 225.8 652.9 226.8 655.9 228.1M658.7 113.7 658.1 117.3 657.9 120.1 657.7 123.1M657.7 123.1 660.8 122.5 663 122 666.1 122.1M657.7 123.1 658.7 126.2 659.1 129.9M659.1 129.9 661.2 128.4 663.7 127.4 666 126.3M660.6 133.8 662.9 134.3 665.3 136 667.6 136.5M660.6 133.8 660.7 136.5 660.2 139.3 660.6 141.5M660.6 133.8 661.5 136.6 662.3 138.9 663.8 141.6M660.6 133.8 662.4 130.8 663.9 128.5 666 126.3M660.6 141.5 663.8 141.6M660.6 141.5 659.1 143.9 657.9 146.6 656.9 148.6 655.8 151.2M655.8 151.2 659 149.9 662.1 149.2 664.8 148.7 667.6 147.4M655.8 151.2 656.1 153.4M655.8 151.2 658.2 153.1 660.5 154.6 662.5 156.4 664.7 158.5M656.1 153.4 659 154.9 661.6 156.9 664.7 158.5M656.1 153.4 656.7 156.2 656.5 158.7 657.1 161.9M657.1 161.9 659.5 161.7 662.6 161.5 665.2 162 667.3 161.6M660.7 172 659 175 657.8 177.2M657.8 177.2 660.2 177.9 663 177.8 666.1 178.4M657.8 177.2 658.3 179.9 659.5 182.4 660.1 185.6M657.8 177.2 659.9 175.3 662.3 172.8 664 171.6 666.5 169.3M660.1 185.6 663.2 182.5M660.1 185.6 659.4 188.5 659 191.1M659 191.1 663.7 189.8M659 191.1 657.6 193.6 656.2 196.6M656.2 196.6 659.9 196.3 662.7 196.1M659 205.5 662.3 205.3 664.7 204.6M659.8 214.1 663 212.4M659.8 214.1 660.7 217.4M655.9 228.1 658.8 227.5 661.5 227.1 664.4 227.1M655.9 228.1 658.6 231.3M658.6 231.3 659.2 234.8 659.2 238.7M659.2 238.7 662.1 238 665.1 237.4M659.2 238.7 661.9 240.8 663.4 243.4 666.1 245.2M666.1 122.1 666 126.3M666 126.3 666 129 666.9 131.4 667 133.8 667.6 136.5M667.6 136.5 671.3 137.1 674.1 137M667.6 136.5 666 138.6 663.8 141.6M663.8 141.6 665.8 144.8 667.6 147.4M667.6 147.4 669.6 149.2M667.6 147.4 666.6 150.4 666.2 153.2 665.6 155.8 664.7 158.5M664.7 158.5 667.5 157.6 670.4 155.7 673.4 154.8M664.7 158.5 667.3 161.6M667.3 161.6 669.9 160.4M667.3 161.6 667.4 164.4 666.7 166.7 666.5 169.3M666.5 169.3 670.5 171M666.5 169.3 666.6 172.1 666.4 175.7 666.1 178.4M666.5 169.3 667.7 172.4 669.6 175.6M663.2 182.5 665.5 183.8 668.1 183.9 671 185.1M663.2 182.5 663 186.1 663.7 189.8M663.7 189.8 666.8 189.7 669.3 188.9 671.8 188.8 674.8 188.4M663.7 189.8 663.3 192.9 662.7 196.1M662.7 196.1 663.2 198.5 663.7 201.3 664.7 204.6M664.7 204.6 667.6 204.5 669.8 203.9 671.8 203.4 674.7 203.1M664.7 204.6 664.2 206.8 663.6 209.7 663 212.4M663 212.4 666 212.6 668.6 211.9 671.3 212.1M663 212.4 664.8 215.2 666.3 216.7 667.6 219.4M667.6 219.4 671.2 218.6M664.4 227.1 667.1 226.2 669.4 225.7 672.1 224.7M664.4 227.1 664.9 231.3M664.9 231.3 665.4 234.4 665.1 237.4M664.9 231.3 667.2 229.1 669.9 227.3 672.1 224.7M665.1 237.4 667.7 237.8 670.4 237.8M665.1 237.4 665.6 240.4 665.4 242.4 666.1 245.2M665.1 237.4 666.9 234.8 668.4 233.3 669.8 230.8M666.1 245.2 669.4 246.4 672.9 248M674.1 137 677.5 136.6 680.8 136.6M674.1 137 672.7 140.4M672.7 140.4 677 142.5M669.6 149.2 672.1 149.8 674.6 149.9 677.6 150.1M669.6 149.2 671.9 151.6 673.4 154.8M673.4 154.8 672 157.5 669.9 160.4M669.9 160.4 672.4 160.2 674.8 160.5 677.8 160.8M669.9 160.4 670.1 162.7 670.5 165.7 670 168.7 670.5 171M670.5 171 672.3 169.3 673 167.2 675.1 165 676.6 163.3 677.8 160.8M669.6 175.6 672.4 175.9 674.5 175.6 677.3 175.4M669.6 175.6 670.3 178.8 670.3 181.7 671 185.1M669.6 175.6 672.5 174.6 674.6 173.1 677.6 171.3 680.1 170.3M671 185.1 674.1 183.9 676.4 182.8 679.6 181.9M671 185.1 672.8 187.1 674.8 188.4M671 185.1 672.4 183 673.8 179.9 675.9 177.4 677.3 175.4M674.8 188.4 677 188.8 679.9 189.6M674.8 188.4 674.2 190.7 672.9 192.8 671.9 195.3 671.3 198.1 670.1 200.3M670.1 200.3 672.4 199.3 675.1 198.3 677.9 197.6M670.1 200.3 672.2 201.6 674.7 203.1M674.7 203.1 677 204.6 679.4 206.2M671.3 212.1 674.3 212.4 676.7 213.2M671.3 212.1 670.9 215.3 671.2 218.6M671.2 218.6 674.9 218.2 677.7 217.9M671.2 218.6 672 222 672.1 224.7M671.2 218.6 673.2 217 675.3 215.1 676.7 213.2M672.1 224.7 674.7 225.3 677.3 226.2 679.9 227M670.4 237.8 674.4 238.5 677.6 239M680.8 136.6 683 138.7 684.5 140.6 686.3 142.4 688.5 144M677 142.5 679.8 142.6 683 143.4 685.3 144.1 688.5 144M677 142.5 677.1 144.9 677.5 147.9 677.6 150.1M677.6 150.1 680.2 148.8 682.8 148.3 686 147.4M677.6 150.1 678.6 153 679.7 154.9 680.8 157.5M680.8 157.5 677.8 160.8M677.8 160.8 680.5 161.3 683.4 162.2 686.3 162.3M677.8 160.8 678.3 163.6 679 167 680.1 170.3M680.1 170.3 684 170.2 687.4 170.2M680.1 170.3 678.7 172.4 677.3 175.4M680.1 170.3 682.8 172 685 173.8 687.7 174.9M677.3 175.4 679.5 175.3 682.6 174.9 684.7 175 687.7 174.9M677.3 175.4 678.7 178.8 679.6 181.9M679.6 181.9 683.9 183.4M679.6 181.9 679.4 184.8 679.8 187.2 679.9 189.6M679.9 189.6 683.2 189.6 686.1 189.7M679.9 189.6 679 192.7 678.7 195 677.9 197.6M679.9 189.6 681.8 186.3 683.9 183.4M677.9 197.6 678.4 200.8 679.1 203.5 679.4 206.2M679.4 206.2 682.1 205.7 685.2 204.9M679.4 206.2 678.3 209.8 676.7 213.2M676.7 213.2 679.8 212.8 682.4 212.9 684.7 213.3 687.3 213.4M676.7 213.2 677.7 217.9M677.7 217.9 678.7 221 679.4 224 679.9 227M677.7 217.9 680.4 216.5 682.5 215.2 684.7 214.7 687.3 213.4M688.5 144 691.7 142 694.6 140.1M688.5 144 686 147.4M686 147.4 688.6 147.1 691.1 146.7M686 147.4 685.1 150.1 684.6 152.8 684.2 156M684.2 156 687.5 156.3 691.4 156.2M684.2 156 685.5 158.8 686.3 162.3M684.2 156 686.7 157.4 689.4 159 692.7 159.7 695 161.2M686.3 162.3 689.3 161.7 692.5 162 695 161.2M686.3 162.3 686.5 164.7 686.7 167.5 687.4 170.2M686.3 162.3 688.3 160.1 689.3 158.6 691.4 156.2M687.4 170.2 691.5 171.4M687.4 170.2 687.7 174.9M687.4 170.2 689 171.8 690.7 173.9 692.8 176.1M687.7 174.9 690.1 175.5 692.8 176.1M687.7 174.9 686.6 177.6 685.5 180.8 683.9 183.4M683.9 183.4 687.2 183.4 691.2 182.6M683.9 183.4 684.7 186.9 686.1 189.7M683.9 183.4 686.3 181.3 688.4 180.1 690.4 178 692.8 176.1M686.1 189.7 689 189.6 692.4 189.6 695.7 189M686.1 189.7 686.8 192.7 687.1 196.5M686.1 189.7 687.5 187.4 689.2 185.2 691.2 182.6M687.1 196.5 689.6 198.2 691.9 199.3M687.1 196.5 686.2 199.5 685.8 202.5 685.2 204.9M685.2 204.9 686.4 208.1 686.4 210.6 687.3 213.4M687.3 213.4 689.6 212.1 691.5 210.4 692.9 209.1 695.3 207.2M694.6 140.1 697.6 143.4M691.1 146.7 693.7 147.7 696.2 148.5 698.7 149.9 700.8 151.1M691.4 156.2 694.3 155.5 697 155.2 700.1 155.5 702.6 155.1M691.4 156.2 693.6 159.1 695 161.2M691.4 156.2 693.9 155.1 696.2 153.2 698.8 152.3 700.8 151.1M695 161.2 697.6 162.2 699.3 163.9 702.1 164.7M695 161.2 693.7 163.5 693.7 166.5 692.1 168.5 691.5 171.4M691.5 171.4 693.6 170.6 696.9 169.5 699 169.3M691.5 171.4 692.8 176.1M691.5 171.4 694.6 172.7 697.3 174.9 699.5 176.2M692.8 176.1 696.3 176.2 699.5 176.2M692.8 176.1 691.7 179.4 691.2 182.6M692.8 176.1 695.2 173.8 696.7 171.3 699 169.3M691.2 182.6 694.1 182.5 697.1 182.2 699.6 181.9M691.2 182.6 693.1 184.5 693.8 186.7 695.7 189M691.2 182.6 693.2 180.6 695.7 179.4 697.8 178 699.5 176.2M695.7 189 697.5 190.9 698.7 193.2M695.7 189 694.5 191.6 693.9 194.4 692.6 196.6 691.9 199.3M691.9 199.3 692.8 201.5 694.4 204.7 695.3 207.2M697.6 143.4 700.6 143.8 703.6 143.6 706.3 143.5M697.6 143.4 698.6 146.2 699.8 148.2 700.8 151.1M700.8 151.1 703.4 151.1 705.9 150.9 708.7 151M700.8 151.1 702.6 155.1M702.6 155.1 705.7 155.2M702.6 155.1 702.6 158.2 702.2 161.6 702.1 164.7M702.1 164.7 704.3 163.2 705.9 160.9M702.1 164.7 700.5 166.8 699 169.3M702.1 164.7 704.5 166.4 706.3 167.5M699 169.3 701.6 169 703.8 168 706.3 167.5M699 169.3 699.5 173.1 699.5 176.2M699 169.3 700.8 167.6 702.6 165 703.8 162.6 705.9 160.9M699.5 176.2 702.2 176.3 705.8 175.7 708.8 175.5M699.6 181.9 702.3 181.7 704.9 181.7M699.6 181.9 699.7 184.9 698.8 187.3 698.8 190.4 698.7 193.2M698.7 193.2 699.4 195.8 699.7 198.7M706.3 143.5 707.2 145.6 707.8 148.6 708.7 151M708.7 151 711.1 150.5 714.3 150.7M708.7 151 706.9 152.9 705.7 155.2M705.7 155.2 705.6 158.1 705.9 160.9M705.9 160.9 707.9 162 710.8 162.9 712.7 164.3M705.9 160.9 705.7 163.9 706.3 167.5M706.3 167.5 709.4 167.8 712.5 168.4 715.8 168.5M708.8 175.5 711.7 176.9 713.9 178.2 716.2 179.6M708.8 175.5 706.5 179 704.9 181.7M704.9 181.7 707.9 182 710.6 182.7 713.8 183.4M704.9 181.7 706.1 183.8 707.5 186.8 708.5 189.4M704.9 181.7 707.5 180.9 710.9 180.7 713.3 179.9 716.2 179.6M714.3 150.7 717 149.5 719.9 147.8M715.7 155.2 714.4 157.8 713.4 161.1 712.7 164.3M712.7 164.3 715.4 162.9 718.7 162.2 721 160.8M712.7 164.3 713.9 166.8 715.8 168.5M715.8 168.5 718.6 169.1M715.8 168.5 715.8 171.6 715.8 173.7 715.9 177.1 716.2 179.6M716.2 179.6 719.1 178.8 722.4 178.3M716.2 179.6 713.8 183.4M713.8 183.4 716.8 181.5 719.2 179.9 722.4 178.3M719.9 147.8 719.9 150.7 720.6 153.3 720.8 156.1M720.8 156.1 721 160.8M721 160.8 723.3 162.4 725.8 164.3 727.9 165.5M721 160.8 719.8 163.9 719 166.2 718.6 169.1M718.6 169.1 719.6 172.5 721.3 174.9 722.4 178.3M722.4 178.3 724.9 177 728 175.4M727.2 149 730.1 147.9 733.5 147M727.2 149 726.8 152.5 726.5 155.9M726.5 155.9 729.5 155.9 731.8 157.1 734.9 157.6 737.3 157.6M726.5 155.9 727 159.4 727.5 162 727.9 165.5M726.5 155.9 728.6 153.5 729.9 151.5 731.4 149.4 733.5 147M728.1 172.4 731.8 171.3 735.1 170M728.1 172.4 728 175.4M737.3 157.6 735.3 159.7 732.7 162.1M732.7 162.1 733.5 164.9 734.6 167.2 735.1 170M696.5 162.5 695.4 158.6 695.1 155.3 692.1 155 688.5 155.6 684.7 155.8 681.1 156 677.7 156.1M616.2 121.5 618.3 123.7 619.8 126.9 621.3 129.3 623.8 132.1 625.1 134.4 626.8 137.4 629.1 139.7 630.4 142.4 632.4 145 634.1 147.7 636.2 149.8 637.8 152.5 640.2 154.7 642.5 156.8 644.3 158.7 647.4 160.2 649.8 161.8 651.6 164.4 654.4 166 656.9 168.2 658.3 169.6 660.7 172 663.2 173.6 665.7 175.4 668.5 178.1 670.5 179.7 672.5 181.8 674.9 184.1 677.8 185.8 680 187.1 681.7 189.3 684 191.3 687.2 193.7 689.5 195 691.1 196.8 693.7 199.2M639.4 108.7 641.4 111 643.4 113.8 645.2 116 646.8 118.2 648.2 120.8 650.7 122.9 652.8 126 654.6 128.4 656.1 130.2 657.7 133.1 660.3 134.9 661.2 137.6 663.4 140.2 665 142.9 667.1 145.4 669.1 147.4 674 146.5M647 147.3 648.4 150.2 649 153.5 650 157.3 651.3 160.4 651.6 163.6 652.9 166.5 653.2 169.3 654.9 172 655.1 175.3 655.8 178.3 657 180.6 658 183.5 658.6 186.7 658.8 189.4 660.5 193 660.7 195.9 662 199 662.4 201.2 663.1 204.9 664.1 207.5 665 210.1 665.5 213.5 666 216.4 666.6 219 667.9 221.5 669.1 224.7 669.1 227.6 670.3 230.6 670.5 233.1 672 236.1 672.3 239.7 673.7 242.7 673.8 244.7 674.9 248.1M704.8 192.7 703.2 190.6 701.1 187.2 699.9 184.6 697.7 182.4 696.8 179.7 694.4 177.3 692.5 174.7 691.4 172.1 689.8 169.4 687.4 167.3 686 165 684 162.3 682.8 159.3 680.6 157 679.5 154.3 677.6 152 676 149.1 673.9 146.6 672.5 144.1 671.1 141.7 670.2 138.7 668.2 135.6 667.1 133.3 665.3 130.5 664.7 127.5 663.3 124.8 661.6 122.5 659.8 119.2 659.2 116.2 657.1 113.8 656.2 111.2 655 108.5 652.7 105.2 651.8 102.9M718.6 164 715.4 166.2 712.6 167.8 715 165.7 718.2 164.6 721.3 162 723.9 160.8 727.3 158.5 730.2 157 732.8 155.4M673.5 165.2 671.9 162.8 670.7 159 669.2 156.5 667.5 154.3 666.9 151.3 664.6 148.1 663.4 145.6 662.7 142.8 661 139.7 658.9 137.3 655.8 135.3 654.3 134 651.7 131.4 649.7 129.2 646.8 127.1 645.2 125.5 642.6 123.9 640.1 122.1 638 120 635.9 117.1 633.3 115.3 630.6 113.4 628.9 111.1 626 109.1 624.3 107.5 621.4 105.5M613 148 612.8 146.9M613 148 609.6 146.7M613 148 613.2 152.6M612.8 154.7 613.2 152.6M612.8 154.7 610.2 156.9M612.8 154.7 613 148M603.5 151.4 607.3 150.4M603.5 151.4 609.6 146.7M603.5 151.4 607.1 154 610.2 156.9M609 143.5 609.6 146.7M609 143.5 612.8 142.8M609 143.5 612.8 146.9M607.3 150.4 609.6 146.7M607.3 150.4 613 148M609.6 146.7 612.8 146.9M613.2 152.6 610.2 156.9M612.8 146.9 612.8 142.8M610.2 156.9 607.3 150.4M612.8 142.8 609.6 146.7M681.4 255.3 683.8 261.3 682.1 267.3 685.5 273.4 689.8 269.7M683.8 261.3 687.9 264.2"/>
<path fill="none" stroke="#9a5128" stroke-opacity=".85" stroke-width="0.900" stroke-linejoin="round" d="M366.9 118 368 124.7 367.3 128.9 365.8 133.6 367.7 137.9 369.1 142.5 371.7 146.4 373.6 151.4 375.1 156.3 375.8 160.1M366.9 118 361.3 121.3 359.5 124.7 357.7 128.1 355.8 131.4 352.4 136.3M366.9 118 369.7 119.7 373.6 120.2 377.7 119.3 382.5 119.1M366.9 118 364.7 122 370.2 123.8M364.7 124.6 364.8 128.8 365.8 133.5 365.6 137.4 364.7 142.4 367.6 146.5 371.4 150.2 373.8 151.8 377 154.6 377.7 159.7 378.1 164.6M371.4 150.2 367 152.6 362.5 154.6M368.1 178 370.4 181.8 373.6 184.7 375.7 187.1 376.9 190.6 379.2 193.6 381.1 196.3 382.5 199.4 384.8 202.5 384 206.3 384.5 209.5 383.7 213.6 379.9 217.1 375.9 220.1M384.8 202.5 388.1 202.5 392.7 201.6 395.9 201.4 400.3 200.1 404.8 198 408.2 200.1 411.5 202.5M379.2 193.6 377.1 196.5 373.8 198.5 371.4 201.4M325.8 241.2 329.4 242 333.9 243.3 337.6 244.2 341.3 244.2 344.7 245.6 348.3 244.4 352.3 241.7 355.3 240.4 358.8 238.5 362.5 236.7 366.4 235.5 371.4 233.9 375.9 233.4 379.2 235.1 383.6 236.1 387 236.7 389.2 234.2 391.5 231.4 392.4 228.2 394.7 225.3 397 222.2M344.7 245.6 344.1 249.4 344.5 253.1 343.6 256.7 344.4 260.8 345.7 265.4 346.9 269M382.5 226.7 383.4 230.9 384.8 235.6 386.1 238.5 387 242.3M411.5 262.3 415.3 262.5 418.9 261.3 422.6 261.2 427 259.5 431.5 257.8 434.4 254 438.2 251.2 440.6 247.4 443.8 244M311.3 304.6 314.2 302.1 316.9 299.6 320.2 297.9 324 298.7 327.7 298.7 331.3 299 335.9 299.4 340.5 300.5 344.7 301.3M358.1 324.6 361.1 322.5 364 320 367 318 370.4 316.9 374.4 316.3 378.1 315.7 381.6 313.5 384.8 312.4M364.7 304.6 368.3 306.5 371.9 307.7 375.9 309.1 378.7 311.1 382 313.3 384.6 315.4 387 318 389.8 320.7 393.6 321.9 396.9 324.6 400.4 326.9 403.5 329.8 405.6 334.1 409 336.5 411.5 340.2 414.3 343.4 417.6 347 420.4 350.2M355.8 349.1 360.7 350.3 364.8 350.9 369.2 351.4 373.9 350.9 378 350.2 382.5 349.1 386.5 351.1 389.5 352.5 393.7 353.6 396.4 355.6 400.5 356.9 404.2 358.7 407 360.3 410.6 361 414.9 361.2 418.2 361.4M333.6 338 334.6 341.3 335.7 345 336.7 347.9 338 351.4 337.3 355 336.3 359.1 335.8 362.5 334 365.3 331.3 367.7 328.9 370.4 326.9 373.6M300.2 346.9 303.3 349.2 305.6 351.9 309.1 353.6 311.1 358.5 313.5 362.5M369.2 351.4 368.9 355.7 367.4 358.7 367 362.5 369.7 364.9 370.9 368.5 373.6 371.4 377.3 373.4 381.4 374.4 384.8 375.8M134.7 248.9 137 245.6 138.1 242.3 141.8 241.4 145.4 239.9 149.2 238.9 153 237.6 157.1 236.9 160.3 235.6M133.6 257.8 134.2 261.8 134.7 266.8 136.2 271.1 138.1 275.7 139.3 280.2 140.3 284.6M191.5 270.1 195.7 268.1 198.9 264.8 202.6 262.3 205 259.9 206.9 256.4 209.3 253.4 213 250.8 216 248.9 219.5 246.9 223.8 243.8 227.1 241.2 230.3 240.5 234.7 239.3 238.2 237.8M216 248.9 217.7 253.8 218.2 257.8 215.9 261.9 213.7 266.8 215.7 270.5 218.2 273.8 220.4 277.9M209.3 240 211.1 243.5 213.7 246.7 216 248.9M238.2 242.3 240.6 245.1 243.3 248.4 244.9 251.2 249.4 246.7M71.3 230 75.2 231 80.5 232 84.6 233.4 88.7 232.5 92.2 233.2 96.4 232.7 100.2 232.2 103.7 233.3 108.1 234.2 112.1 235.6 115.8 236.7M80.2 253.4 84.1 252.4 86.7 250.7 89.8 250.3 93.5 248.9 97.5 249.2 102 250.5 106.9 251.2M251.6 273.4 251.4 278 250.5 282.3 249.2 286.2 247.1 291.2M231.6 313.5 234.7 315.3 238.8 316.8 242.7 318 246.2 319.8 249.8 321.9 253.8 324.6 257.1 328 259.4 331.3M247.1 346.9 250.7 346.1 254.4 344.9 258.3 344.7 262.1 347 265 349.1M248.9 348.2 253.6 349 257.2 349.9 261.1 349.1 264.7 349M300.4 346.6 304 349.6 308.7 351.5 311.3 354 313.6 357.4 315.3 359.8 317.8 362.7 321.4 365.3 323.6 368.1 326.9 370 329 372.8 331.9 374.8 333.2 379.5 335.2 384.7 337.9 387.4 340 389.9 341.9 393 344.8 396.2 348.5 399.7 351.8 403M333.6 337.4 334 341.7 335.2 344.9 337.4 349.1 340.2 353.2 338.5 358.2 335.3 361 332.8 363.6 330.2 366.5 328 369.3 326.9 373.1M338.5 357.3 343 356.7 346.8 356.5 353.5 355.7M253.9 398 258 398.7 262.5 399.9 267.2 401.3 270.4 400.2 274.5 398.4 278.6 397.1 282.1 396.3 286.3 395.6 290.5 394 295.4 393 299.1 392.1 301.6 390.3 305.6 389.1 308.7 388 313.7 387.1 318 386.9 321.9 386.4 326 386.9 330.3 387.7 335.2 388 339.1 391 343.5 393M252.2 377.3 257.3 377.5 262.2 378.1 266.9 378.6 272.2 378.9M245.6 415.4 250.3 414.6 255.6 412.9 259.5 412.4 264.5 411.6 268.8 411.3 273 411.4 276.8 411.9 280.5 412.1M351.8 403 349.9 407.8 348.5 412.9 345.5 416.7 343.5 421.2 341.7 423.8 339.3 426.3 336.9 429.5 333.6 431.8 330.2 434.5M355.1 369.8 358.5 372.9 361.8 376.4 365.4 377 370.1 378.1 375.1 374.8 381.7 376.4M366.8 389.7 368.4 383.1 371.7 378.1M373.9 346.6 378 350.7 381.8 351.9 386.6 353.8 390.5 355.7 393.7 357.4 397.5 358.7 400.9 359 403.8 360.7 407.7 360.4 412.3 361.4 416.2 361.5M355.6 350.7 359.3 350.9 363.6 351.5 367.3 351.5 370.6 351.6 374.3 351.1 378 350.7M378 350.7 378.5 346.6 380.2 343.8 380.5 339.9 384.7 335.8M395.5 373.1 399.9 370 403.8 368.1 407.4 366 412.1 364.8 416.2 361.5M367.3 358.2 370.6 353.2 373.9 351.7 378 350.7M391.3 406.3 394.9 409 398.8 412.9 403 413.9 407.3 415 412.1 415.4 416.3 415.7 420.1 415.3 424.5 415.4M398.8 330 402.3 332.3 405.4 334.9 408.2 337.8 412.1 339.9 414.9 343 417 346.6M365.6 379.8 367.6 383.5 370.6 386.4 369.1 390.8 367.3 396.3 363.6 399.2 360.6 403 357.6 404.3 354 406.3M279 443.3 277 447.7 274 451.6 270.7 456.5M275.6 463.2 277.6 467.6 280.6 471.5 281.3 476.7 282.3 481.4 283.5 486.1 283.9 491.4M269 454.9 271.8 456.5 275.6 457.6 279 458.2 284.2 460.1 288.9 461.5M126.9 95.6 138.1 99 149.2 100.1 158.1 96.7 169.2 93.4 182.6 90.1 195.9 88.9 209.3 87.8 222.7 85.6 233.8 84.5M158.1 96.7 160.3 104.5 164.8 111.2M195.9 88.9 200.4 95.6 204.8 104.5M222.7 85.6 224.9 93.4 229.3 100.1 236 102.3M182.6 90.1 184.8 97.8M138.1 99 133.6 106.8 126.9 111.2M149.2 100.1 153.6 111.2 151.4 117.9M209.3 87.8 211.5 95.6M286.9 506.4 289.9 505.7 292.1 504.9M286.9 506.4 287.1 509.3 288.3 512 288.3 515.1M288.3 515.1 291.2 517.6M288.3 515.1 290.7 517.1 292.8 518.1 295.4 519.9M288.3 515.1 288.9 512.3 290.4 509.7 291.1 507.1 292.1 504.9M288 520.4 291.2 517.6M292.1 504.9 295.1 506.3 297.4 506.7 300 508.2 303.1 509.2M291.2 517.6 295.4 519.9M295.4 519.9 295.6 522.3 295 524.9 294.9 527.6 295.1 530 295.2 532.5M295.2 532.5 297.7 531.4 301.1 529.9 303.9 527.9M295.2 532.5 294.4 535.1M303.1 509.2 306.3 509.1 310.2 509.6M303.1 509.2 300.3 513M303.1 509.2 305 507.3 306.4 505.5 308.1 503.7 309.7 501.6M300.3 513 301 515.6 301.5 518.9 302 521.3 302.3 524.3M302.3 524.3 304.3 523 307.2 521.3 309 520.3M302.3 524.3 303.9 527.9M309.7 501.6 310.1 503.9 309.6 506.6 310.2 509.6M309.7 501.6 312.3 503.6 314.6 505.9 317.4 507.4M310.2 509.6 312.3 509.1 315.4 507.8 317.4 507.4M310.2 509.6 311.1 512 311.5 514.8M311.5 514.8 310.5 517.5 309 520.3M309 520.3 311.6 520.9 313.9 522.2 316.2 523.2M309 520.3 310.6 522.2 312.5 524.7 313.8 526 315 528 316.7 529.9 318.4 532.1M318.5 493.9 317.4 495.9 316.1 498.6M316.1 498.6 319.2 499.9 321.6 500.4 324.7 501.6M316.1 498.6 316.9 501.2 317.1 504.5 317.4 507.4M317.4 507.4 317.1 510.5 316.1 513.9M316.1 513.9 319.2 514.2 321.6 513.3 324.6 513.6M316.1 513.9 316.5 516.6 316.5 519.8 316.2 523.2M316.1 513.9 317.6 512.2 319.3 510 321.5 508.3M318.4 532.1 320.9 531.6 323.9 530.6M318.4 532.1 320.6 534 322.9 536.4M314.6 536.1 316.9 536.7 319.9 536.7 322.9 536.4M314.6 536.1 316.9 534.4 319.2 533.1 321.7 531.7 323.9 530.6M326.3 486.9 326.1 489.4 326.6 492.6 326.7 494.9M326.7 494.9 329.6 494.1 331.7 492.7M326.7 494.9 327.8 491.9 328.9 489.6 330.6 487 332 484.3M324.7 501.6 327.4 499.8 330.9 497.6M324.6 513.6 328 513 331.8 512.6M324.4 524.9 327.1 524 330.1 522.3 333.6 520.9M323.9 530.6 326.3 530 329.2 530M323.9 530.6 323.7 533.8 322.9 536.4M322.9 536.4 325.1 534.1 327.2 532.2 329.2 530M332 484.3 336.6 484.5M332 484.3 334.5 486.7 336.5 488.5 339.2 490.3 341.1 492.6M330.9 497.6 333.3 498.6 335.7 499.3 338 500.4 340.2 501.3M330.9 497.6 330.7 500.4 330.7 503.5 330.2 506.6 329.7 509.5M329.7 509.5 333.6 509.8 336.8 510.1M329.7 509.5 331.8 512.6M331.8 512.6 334.3 512.9 337.4 512.7 340.3 512.5M333.6 520.9 337.1 521.6 340.9 521.7M333.6 520.9 334.1 523.6 335 526.5 336.5 529.6 337.1 532.4M329.2 530 331.7 531.2 334.7 531.6 337.1 532.4M336.6 484.5 338.6 486.3 340.4 488.2 342.2 490.3 344.1 492.1 346.1 494.5M341.1 492.6 340.5 495.7 340.3 498.2 340.2 501.3M340.2 501.3 343.8 501.9 347.2 501.9M340.2 501.3 339 504.5 338 507 336.8 510.1M340.2 501.3 341.8 503.2 343.7 505.3 345.1 507.7 346.9 509.7M336.8 510.1 339.2 510.1 342.2 509.6 344.8 510 346.9 509.7M336.8 510.1 340.3 512.5M340.3 512.5 343.3 512.5 345.9 512.8 348.6 512.9M340.3 512.5 343.6 511.1 346.9 509.7M340.9 521.7 344.7 521.5 347.9 521.4M340.9 521.7 340.3 524.3 339 527.1 338.4 529.9 337.1 532.4M347 475.7 349.5 476.7 351.7 477.6M347 475.7 349 472.6 351.4 470.4M345.4 486 345.2 489.1 345.9 491.3 346.1 494.5M346.1 494.5 348.3 494.4 351.2 494 354.3 493.9 356.4 493.3M346.1 494.5 349.2 496.3 352.6 498.1M346.1 494.5 348.1 492.3 349.1 490.4 350.7 488.9 352.6 486.6 354 484.2 355.7 482.6M347.2 501.9 350.2 500.3 352.6 498.1M346.9 509.7 350.3 509.3 353.7 509.2M346.9 509.7 348.6 512.9M348.6 512.9 351.8 512.5 354.5 512.6M348.6 512.9 351 511.1 353.7 509.2M347.9 521.4 351.3 520.1M356.6 463.6 359.5 464.4M356.6 463.6 355.1 465.7 353.3 468.4 351.4 470.4M351.4 470.4 354.4 470.5 356.9 470.2 359.1 470.9 361.7 470.9M351.4 470.4 351.9 473.6 351.7 477.6M351.4 470.4 353.8 469 355.7 467.4 357.6 466.1 359.5 464.4M351.7 477.6 354.3 478.5 357.2 479.1 360.1 478.9 363.3 479.9M351.7 477.6 354 480.5 355.7 482.6M355.7 482.6 358.7 483.9M355.7 482.6 357.8 481.9 360.3 481.1 363.3 479.9M356.4 493.3 359.5 492.3M356.4 493.3 354.6 495.5 352.6 498.1M356.4 493.3 357.6 490 358.3 486.7 358.7 483.9M352.6 498.1 354.8 496.3 357 494.3 359.5 492.3M353.7 509.2 356.2 507.6 358.9 505.5M353.7 509.2 354.5 512.6M354.5 512.6 353.7 514.8 352.7 518 351.3 520.1M359.5 464.4 360.4 467.5 361.7 470.9M363.3 479.9 361 482.2 358.7 483.9M358.7 483.9 361.5 483.8 364.8 484.7 368.2 484.6M359.5 492.3 362.9 492.5 366 492.3 369.4 491.7M359.5 492.3 362.2 493.8 365.1 495.6 368.2 497M359.5 492.3 361.9 490.2 363.5 488.5 365.7 486.6 368.2 484.6M358.9 505.5 360.7 503.4 362.7 501.8 364.5 500.3 366.2 498.8 368.2 497M366.4 475.4 366.7 478.9 367.5 481.9 368.2 484.6M369.4 491.7 368.5 494 368.2 497M365.1 471.2 362.3 472.7 359.2 474.4 356.4 475.7 353.7 478.3 351.3 479.9 347.9 481.6 345.8 483.1 343.1 484.6 339.9 486.3 337.1 487.4 334.2 489.2 332 490.7 329.2 492.6 329.1 495.6 328.2 499.4 327.6 503.2M337.3 522.2 336.9 518.8 335.5 516.7 334.8 513.3 333.8 510.6 333 507.2 332.1 504.8 330.5 501.5 329.6 499.1 330.9 496.7 333 493.3 334.2 490.7 335.6 488.1 337.3 486.3 339.7 483.4 340.7 480.4 342.6 478.2 344.2 475.2 345.1 472.5 347.4 470.1 348.6 467M288 517.1 291.1 515.9 293.9 513.7 296.6 512.4 299.3 510.4 302 509.6 303.8 508.1 306.5 505.7 309.5 504.2 312.2 503.4 315.1 501.6 317.4 500.2 320.6 498.5 323.5 497.1 325.6 495.1 327.9 492.6 330.6 491.4 332.6 489.1 335.6 487.3 337 484.9 339.4 482.4 342.8 480.7 344.9 478.7 347 476.4 349.4 475.1 352 472.6M339.6 484.6 340 488.2 340.7 491.8 341.7 494.5 343.4 498 343.7 501.6 345.3 499.3 347.6 496.1M338.7 530.6 340 526.9 340.5 523.6 340.9 520 341.2 517.9 342.2 514.4 343 510.7 339.9 509.4 336.9 508.5 335 507.3 331.6 506.7 329.4 505.2 325.6 504 323.2 503.3 320.3 501.8 317.6 500.5M347 485.6 344 488.5 340.9 491M347 485.6 350.3 488.6 353.4 490.9 357.6 493 360.8 495.7 364.8 498.2 367.8 500.4M347 485.6 347.9 481 349.7 477.8 349.8 473.3 351.4 468.6 352.4 465M347 485.6 344.5 488.4 341.9 491.5 339 494.7 336.8 498.1 333.9 501.2 330.7 504.6 328.4 507.3 325.2 509.8 322.9 513.6 320.4 516.1 317.4 519.4M347 485.6 350.9 483 353.9 480.7 357.5 478.9 361.9 477.4 364.9 474.7M347 485.6 350.9 484.2 354.7 482.6 359.1 481.4 363.8 479.8 367 479.2 371.4 477.4M347 485.6 345 489.6 342.4 492.6 340.8 496.7 338.4 500.6 336.4 503.8 333.8 508.3 331.8 511.2 329.8 514.9 327.8 518.3 325.6 522.6 323.1 526.3M347 485.6 344.3 488.8 341.7 492.6 340.2 496.2 337.4 499.8 334.6 502.7 332.9 507 330.5 510.1 328.3 513.2 326.1 517.1 323 520.1 321.1 523.5 318 527.6 316 530.7 313.6 534.1M347 485.6 345.5 489.5 343.5 493.3 341.6 497.4 340.5 501.2 338 504.8 337 508.4 335.5 512.7 333.6 516.4 331.8 520.2 329.4 523.8 328.2 527.4M347 485.6 346.9 489.8 347.5 495.4 347.3 499.3 347.4 503.9 347.9 509.1M347 485.6 352.5 487.2 357.5 489.8M347 485.6 351.1 486.3 356 486.4 361.1 487.1M356.6 453.5 360.2 450.8M356.6 453.5 351.9 449.4M335.6 434.2 339.4 437.9 342.4 441.4 346.1 445.6M335.6 434.2 340.5 432.1 345.1 430.9 350.5 428.8M360.2 438 358.1 440M360.2 438 356.6 434.5 353 431.1M346.1 445.6 351.9 449.4M346.1 445.6 350 446.2 354.6 446.2M368.7 444.5 371.9 440.8 375.9 437.6M368.7 444.5 364.5 447.9 360.2 450.8M350.5 428.8 353 431.1M350.5 428.8 354.3 432.2 357.5 435.4 360.2 438M360.2 450.8 354.6 446.2M358.1 440 354.6 446.2M354.6 446.2 351.9 449.4M375.9 437.6 370.9 438 364.9 437.5 360.2 438M290.6 474.7 291.4 468.7 293.1 463.7M290.6 474.7 288.2 478.7 285.3 482.5 283.2 486.8M276.9 457.4 274.1 454.1 272.8 450.4 270.3 446M276.9 457.4 276.3 453.4 274.7 449.4 273.6 446 272.1 441.7M273.9 474.8 276.6 478.2 279.8 482.9 283.2 486.8M273.9 474.8 277.9 474.2 282.6 475.1 286.4 474.2 290.6 474.7M298.6 454.3 296.3 459 293.1 463.7M298.6 454.3 296.5 458.1 295.6 462.9 293.8 466.7 291.8 470.3 290.6 474.7M270.3 446 272.1 441.7M279.6 491.6 283.2 486.8M279.6 491.6 283.1 497.4M283.1 497.4 283.7 492 283.2 486.8"/>
<path fill="none" stroke="#333" stroke-width="1.100" stroke-linecap="square" d="M141.9 77.5h.1M111.9 53.5h.1M117.3 48.7h.1M173.3 57.1h.1M168.9 60.6h.1M127 75.6h.1M150.2 68.4h.1M124.1 56.9h.1M118.9 49.4h.1M126.7 67.4h.1M154.1 49.4h.1M109.9 55h.1M155.9 48.5h.1M130.6 49.4h.1M164 65.1h.1M113.5 44.7h.1M136.4 65.2h.1M153.2 44.3h.1M120.4 71.8h.1M137.4 53h.1M130.3 83.6h.1M130.7 65.9h.1M133.7 59.1h.1M134.2 49.1h.1M159.3 49.4h.1M138.3 77.5h.1M137.1 80.4h.1M315.4 58.6h.1M263 52.7h.1M291.2 48h.1M329.8 67.1h.1M265.9 61.8h.1M339.8 70.3h.1M298.1 58.9h.1M305.6 50.9h.1M261.4 50.6h.1M318 55.7h.1M302.8 56.8h.1M297.6 49.8h.1M281.6 48.6h.1M310.4 67.6h.1M257.4 62.3h.1M278.4 60.1h.1M242.3 46.5h.1M294.1 61.4h.1M269.1 67.3h.1M347.2 52.7h.1M244.2 51.2h.1M260.1 47.9h.1M336.9 58.4h.1M284.2 48.9h.1M346.8 52.8h.1M302.8 63.5h.1M283.8 58.1h.1M244.3 52.7h.1M279.2 70.8h.1M340.7 69h.1M319 63.6h.1M344.6 64.5h.1M273.3 62.1h.1M697.7 180.5h.1M706.5 152.1h.1M658.4 215.2h.1M702.5 188.7h.1M657.7 187.8h.1M612.6 115h.1M644.5 119.1h.1M701.7 195.3h.1M655.9 141.6h.1M625.6 140.9h.1M643.3 183.6h.1M667.7 240.8h.1M680.7 198.7h.1M681.8 221.6h.1M619.4 117.3h.1M620 103.1h.1M637.4 159.2h.1M630.1 100.4h.1M637.6 137.7h.1M646.3 164.2h.1M651.1 150.2h.1M702.6 176.3h.1M602.6 136.1h.1M724.7 170.8h.1M670.3 186.9h.1M618.2 149.4h.1M686.3 204.3h.1M687.7 196h.1M653.6 110.7h.1M625.6 153.6h.1M637.6 188.9h.1M654.1 115.5h.1M620.7 143h.1M689.3 198.6h.1M673.6 232.1h.1M635.1 122.7h.1M612.7 154.2h.1M614.1 133.9h.1M682.7 182h.1M679.2 193.1h.1M674.2 152.6h.1M730.9 161.2h.1M659.8 183.6h.1M706.9 183.4h.1M699.7 198.8h.1M679.5 168h.1M668.7 166.1h.1M693.2 176.7h.1M730.1 169.2h.1M650.8 104h.1M666.1 182.4h.1M644.1 116.3h.1M625.5 168.7h.1M649.5 177.4h.1M674.3 160.1h.1M620.4 102.8h.1M640.5 154.5h.1M645.6 214.9h.1M669.3 223.2h.1M630.2 157.1h.1M656.5 159.7h.1M733.5 168h.1M689.5 192.1h.1M714.8 151.8h.1M674.9 190.1h.1M653 199.5h.1M652.4 142.7h.1M639 175.4h.1M723.2 155.3h.1M712.9 173h.1M723.4 174h.1M637.3 123.3h.1M700.6 178.8h.1M624.6 137.2h.1M681.4 171.2h.1M666.1 121.8h.1M699.9 183.2h.1M655 169.7h.1M671 249.8h.1M723.1 169.8h.1M672.6 221.6h.1M627.5 143.3h.1M704.3 165.6h.1M608.7 113.4h.1M734.4 154.9h.1M672.4 183.5h.1M662.9 150.7h.1M618.6 116.4h.1M609.3 140.8h.1M705.9 173.2h.1M618.3 133.4h.1M684.7 195h.1M707.1 180.1h.1M617.7 134.5h.1M616.7 138.8h.1M710.5 184.6h.1M681.2 136.9h.1M679.1 232.4h.1M652.3 167.3h.1M681.4 149.7h.1M666.6 210.4h.1M644.9 192.7h.1M713.8 172.3h.1M687.8 144.7h.1M637 179h.1M674.6 134.6h.1M706.3 177.3h.1M650.6 139.3h.1M694.6 152.2h.1M662.2 205.7h.1M624 156.5h.1M631.7 139.7h.1M666 180.1h.1M640.5 171.9h.1M671.5 173.6h.1M614.1 104.7h.1M697.5 192.4h.1M690.9 177.5h.1M608.2 119.3h.1M712.4 152.9h.1M647.3 123.1h.1M691.5 200.1h.1M676 244.9h.1M724.9 176.2h.1M646.6 202.5h.1M698.7 171.2h.1M639.7 165.1h.1M643.8 113.3h.1M668.3 234.6h.1M697.9 196.1h.1M667.8 202.9h.1M679.5 179.1h.1M698.8 176.2h.1M654.4 185.5h.1M605.2 154.4h.1M690.7 193.6h.1M703 141.4h.1M715.7 184h.1M636.8 163.6h.1M651.4 111.9h.1M668.8 184.4h.1M650.9 206.2h.1M674.9 177h.1M637.4 134.5h.1M693.4 152.8h.1M651.1 111.5h.1M670.4 248.1h.1M705.9 156.3h.1M655.1 165.8h.1M685 181.6h.1M646.6 101.3h.1M651.7 173.2h.1M678.5 214.4h.1M699.7 184.8h.1M687.8 203.5h.1M626.5 152.4h.1M708.5 145h.1M610.6 150.7h.1M651 160.1h.1M718.5 182.5h.1M687.9 168.1h.1M664.8 248.2h.1M639.9 181.3h.1M710.8 166.9h.1M622.1 140.3h.1M659.5 216.9h.1M661.4 164.8h.1M656.9 180.6h.1M628.1 120.5h.1M676.8 154.4h.1M694.2 156.4h.1M728.3 146.5h.1M661.1 149.1h.1M674.7 143.5h.1M693.3 163.7h.1M698.5 145.1h.1M664.3 186.2h.1M699.9 201h.1M617.5 122.7h.1M627.2 128.4h.1M692.2 152.8h.1M625.4 107.1h.1M619.3 126.4h.1M645.7 109.7h.1M659.8 126.1h.1M636.6 123.5h.1M650.4 117.1h.1M616.1 114.1h.1M649.3 103.4h.1M657.6 133.4h.1M633.2 114.4h.1M641.7 109.8h.1M623.3 105h.1M652.3 119.7h.1M663.6 123.8h.1M648.2 116.9h.1M636.3 105.6h.1M643.8 110.6h.1M645.4 133.9h.1M628.4 122.3h.1M623.2 125.1h.1M644.2 112.6h.1M642.3 131.7h.1M622.9 107.2h.1M624.6 124.5h.1M612.5 103.2h.1M653.6 119.2h.1M617.4 118.3h.1M644.4 116.3h.1M641.2 101.7h.1M664.2 122.4h.1M631.6 111h.1M661.6 114.6h.1M647.2 121.4h.1M622.7 101.3h.1M655.2 106.3h.1M644.9 100.7h.1M650.2 123.7h.1M642.2 100.5h.1M661.3 118.4h.1M623.7 115.7h.1M623.8 127.2h.1M621.1 126.7h.1M648 127.5h.1M652 115.4h.1M656.9 123.2h.1M651.8 132.5h.1M659.3 117.6h.1M634.5 130.8h.1M650.3 120.9h.1M624.2 105.2h.1M656.3 126.2h.1M635.5 123.1h.1M641.4 120.9h.1M638.6 115.9h.1M652.5 104.3h.1M652.6 135.9h.1M656.8 121h.1M632 103.8h.1M659.6 118.6h.1M630.9 119.9h.1M654.7 117.4h.1M634.3 116.2h.1M624.1 118.7h.1M653.4 114h.1M650.8 119.1h.1M628 121.1h.1M614.4 107.9h.1M641.9 101.6h.1M627 119.8h.1M621.1 111.9h.1M624.7 123.1h.1M617.4 120.1h.1M649.9 103.4h.1M643.9 112h.1M655.8 123.8h.1M665.8 123.5h.1M621.6 107.2h.1M653.3 131.4h.1M627.7 118.1h.1M663.5 121.7h.1M655.7 129.6h.1M627.4 123.9h.1M633.3 118.4h.1M642.8 125.8h.1M620.3 112.1h.1M622.7 101.4h.1M618 113.8h.1M631.5 128.6h.1M606.2 159h.1M611 149.1h.1M612.1 158.1h.1M607.2 153.5h.1M601.7 151h.1M602.4 149.4h.1M607.9 151h.1M610 154.1h.1M610.8 148.1h.1M611.1 153.3h.1M608.1 150h.1M609 152h.1M609.4 154.2h.1M601.3 150.7h.1M609.8 147.2h.1M608.1 153.8h.1M609.3 151.1h.1M606 152.9h.1M609.7 147.9h.1M606.4 150.2h.1M607.5 150.2h.1M602.2 149.9h.1M632 59.2h.1M621.9 60.8h.1M636.8 58.4h.1M630 59.1h.1M619.9 57.9h.1M623.1 55.9h.1M615.7 60.4h.1M633.4 59.3h.1M628.6 58h.1M625.1 59.1h.1M637.1 55.8h.1M621.9 54.9h.1M615.5 60.2h.1M608.8 60.1h.1M631.9 60.6h.1M615.6 61h.1M619 57.5h.1M636.5 58.2h.1M628.4 55.1h.1M611 60.2h.1M615.3 61.2h.1M628.3 55.7h.1M629.3 56.6h.1M623.7 54.8h.1M633 60h.1M625.3 59.3h.1M618.1 55.2h.1M617.6 59.6h.1M624.8 55.3h.1M615.1 57.7h.1M608.2 54.6h.1M621.4 55.3h.1M634.6 55.2h.1M630.4 60h.1M617.3 58.2h.1M615.6 61.2h.1M617.2 57.3h.1M617.3 59h.1M634.4 59.3h.1M629.6 57.9h.1M633.5 55.1h.1M625.9 60h.1M631.3 59.1h.1M609.7 57.7h.1M615.9 58.7h.1M619.8 57.6h.1M624 58.5h.1M634.7 56.3h.1M616.1 55.6h.1M580.3 68.6h.1M579.2 63.6h.1M589.2 61.6h.1M583.5 65.5h.1M593.3 62.8h.1M580.5 64.3h.1M579.8 62.5h.1M580.1 68.2h.1M597.8 61.9h.1M592.6 64h.1M596.5 62.2h.1M582.8 69.2h.1M595 61.9h.1M579.9 66.9h.1M581 67.1h.1M593.1 63.4h.1M588.6 63.3h.1M593.5 66.7h.1M579.1 68.9h.1M595.5 65.8h.1M591.2 65.6h.1M595 66h.1M584.1 65.8h.1M582.6 61.5h.1M594.2 63.3h.1M589.3 66.4h.1M591 65.4h.1M599.7 77.4h.1M611.4 75.5h.1M608.3 77.3h.1M587.5 72.7h.1M593.5 73.8h.1M599.1 73.1h.1M615 77.9h.1M595.4 77.5h.1M612.7 71.6h.1M603.5 80.4h.1M595.5 79.5h.1M608.9 73.4h.1M588.2 78.7h.1M596.7 73.7h.1M598.3 77.8h.1M611.8 79.9h.1M541 80.3h.1M509.4 75h.1M496 85.4h.1M494.1 89.7h.1M490.5 95.2h.1M512.7 82.5h.1M534.6 85.1h.1M540 102.3h.1M503.4 83.1h.1M535.4 79.4h.1M556.9 95.2h.1M523.7 76.4h.1M502.5 88.1h.1M558.1 79.3h.1M527.1 77.2h.1M557.3 98.2h.1M544.7 98.3h.1M494.3 82.4h.1M483.1 92.1h.1M486.5 80.7h.1M542.9 83.7h.1M557.3 79.8h.1M491.2 86.7h.1M544.1 77.9h.1M542.8 91.8h.1M543.6 85.3h.1M483.4 77.9h.1M537.6 90.7h.1M540.8 81h.1M502.2 81.4h.1M547.7 96.8h.1M492.3 97.5h.1M483.1 89.4h.1M500.5 98.7h.1M537.2 96.2h.1M495.7 76.1h.1M530.9 96.5h.1M551.4 86.1h.1M521.3 95.2h.1M553.7 95.1h.1M521 98.9h.1M519 75.8h.1M523.6 87.8h.1M506.7 87.1h.1M497.6 84.6h.1M539.5 102.5h.1M516.3 101.3h.1M490 90.9h.1M539.3 99.2h.1M510.8 80.1h.1M556.5 93.9h.1M532 85.6h.1M489 92.7h.1M532.8 98.5h.1M525.3 98.4h.1M526.2 93.5h.1M495.1 77.7h.1M536.1 97.5h.1M533.1 82.8h.1M518.8 98.8h.1M520.2 131.6h.1M480.8 120.6h.1M506.3 122.3h.1M512 127.2h.1M493.1 102.1h.1M493.8 112.7h.1M524.3 132.7h.1M515 133.3h.1M506.8 121.9h.1M480 112.7h.1M481.4 101.6h.1M498.8 116.8h.1M486.9 122.6h.1M505.4 100.1h.1M510 110.9h.1M491.3 99.4h.1M514.6 133.6h.1M513.8 110.3h.1M507.4 116.8h.1M503.7 118.3h.1M485.6 112.7h.1M511.7 125.6h.1M530.9 124.9h.1M503.9 124h.1M492.5 120.3h.1M481 103.9h.1M491 110.1h.1M539.6 133.1h.1M518.5 128.9h.1M529 121.5h.1M485.2 116.7h.1M518 123h.1M491.2 118.4h.1M531.4 133.6h.1M522.2 113.5h.1M506.2 114.5h.1M487.8 99.4h.1M497.5 103.2h.1M536.3 131.1h.1M495.3 118.3h.1M482.7 121.1h.1M501.3 112.7h.1M540 133.4h.1M513 118.3h.1M510.4 125.9h.1M523.6 117.7h.1M488.2 114.2h.1M483.9 103.5h.1M488.5 113.3h.1M483.8 119.9h.1M494.3 104.9h.1M519.9 132.2h.1M516.5 115.3h.1M506.4 96.9h.1M502.1 116.7h.1M501.3 129.1h.1M530.8 127.2h.1M510.8 115.8h.1M494.1 97h.1M510.8 114h.1M539.9 132.4h.1M505.5 115.6h.1M512.5 103h.1M492.1 114.9h.1M496.7 127h.1M481.2 105.7h.1M486.4 122.5h.1M535.6 134.1h.1M510.3 104.9h.1M487.6 105.9h.1M526.1 118.7h.1M538.6 94.7h.1M537.1 107.1h.1M553.7 98.3h.1M558.7 108.1h.1M540.5 94.1h.1M540.1 101.3h.1M549.8 99.2h.1M554.2 99.4h.1M543.1 102.1h.1M558.4 90.2h.1M547.2 91.9h.1M553.5 97.5h.1M555.7 102.1h.1M558.6 100.4h.1M549.9 108h.1M554.9 95.7h.1M538 107h.1M537 107h.1M558 102h.1M558.4 100.9h.1M553.5 100.7h.1M540.9 90.7h.1M724.8 46.1h.1M734.6 43.7h.1M696.6 39.5h.1M706.6 35h.1M699.2 32.4h.1M722.3 46.8h.1M698.5 32h.1M724.4 35.1h.1M689.6 44.6h.1M728 42.9h.1M727.9 42.5h.1M733.5 43h.1M732.2 53.3h.1M691 43.5h.1M704.4 37.1h.1M698.2 27.3h.1M694.3 42.7h.1M728.3 47.6h.1M710.5 35.9h.1M722.4 41.9h.1M723.7 36h.1M706.2 40.8h.1M722.1 40.5h.1M722.8 54.8h.1M721.7 51.9h.1M729.9 57.6h.1M693.3 39.1h.1M723.8 41.8h.1M693.1 43.3h.1M725.6 52.7h.1M710.3 37.8h.1M728.8 43.7h.1M707.9 35.5h.1M671.7 64.4h.1M629.9 66.2h.1M655 71.6h.1M683.5 50h.1M678 43.6h.1M665.5 31.7h.1M676.4 55h.1M653.2 57.8h.1M648 43.6h.1M668.1 64.6h.1M628.1 45.7h.1M683.1 46.4h.1M643.1 62h.1M648.1 81.6h.1M686.3 38.2h.1M638.8 40.5h.1M652.6 46.4h.1M667 78.3h.1M629.2 32.8h.1M631.7 47.8h.1M633.1 54.3h.1M647.5 69.9h.1M513.2 31.1h.1M502.6 27.1h.1M497.1 26.7h.1M511.6 30h.1M511.9 27.7h.1M509.2 20.1h.1M571.8 54.9h.1M567.6 48.7h.1M580.2 48.7h.1M560.6 49.8h.1M556.4 53.9h.1M580.7 50.2h.1M576.1 49.2h.1M580.2 54.3h.1M570.6 55.4h.1M578.4 57.2h.1M564.3 49h.1M569.5 53.2h.1M575.2 54.4h.1M577.7 134.7h.1M595 132.5h.1M577.6 132.1h.1M591.4 140.6h.1M570.1 142h.1M572.3 138.5h.1M572.4 146.1h.1M602.2 142h.1M572.6 127.6h.1M575.4 136.2h.1M554.2 134.2h.1M601.6 118h.1M599.6 135.1h.1M720.8 199.9h.1M705 178.5h.1M720.9 181.8h.1M709.1 191.8h.1M701.9 191h.1M730.8 180.5h.1M723.6 187.3h.1M714.3 193.5h.1M721.9 184.6h.1M718.6 187h.1M724.1 191.1h.1M697.5 174.7h.1M716.9 202.5h.1M721.2 202.5h.1M701.9 188.6h.1M702.1 186h.1M470.8 87.4h.1M464.2 65.4h.1M469.6 114h.1M452.7 82.3h.1M445.6 61.3h.1M473.5 94.4h.1M455.6 94.3h.1M444.1 40.4h.1M451.7 88.8h.1M444 85.9h.1M450.2 62.3h.1M468.5 70.6h.1M468.6 103.5h.1M452.5 42.8h.1M473.1 86.8h.1M461.5 98.1h.1M460.1 116.8h.1M463.1 74.6h.1M475.9 115.9h.1M462.2 40.9h.1M463.4 75h.1M461.2 110.3h.1M449.6 61.4h.1M437.5 49.1h.1M447.7 84.9h.1M477.3 54.6h.1M448.6 71.7h.1M464.1 70h.1M465.4 52.8h.1M467.8 51.4h.1M466.4 53.7h.1M454 44.8h.1M439.8 69.9h.1M474.6 117.1h.1M469.1 94h.1M461.7 83.3h.1M464.8 82.1h.1M449.2 74.4h.1M451.1 76.7h.1M453.6 57.9h.1M451.5 106.9h.1M444.2 80.5h.1M448.4 89h.1M470 49.9h.1M457.4 56h.1M464.4 97.4h.1M445.7 59.6h.1M449.3 67.9h.1M475.3 114h.1M470.8 73.4h.1M456.1 57.1h.1M439.9 73.5h.1M449.2 81.3h.1M458.6 107.9h.1M467.7 103.1h.1M447.5 61.3h.1M462.3 44.3h.1M477.2 101.1h.1M457.7 70.7h.1M470 50h.1M456.6 107.1h.1M474.4 67.3h.1M459.6 89.8h.1M455.8 109.3h.1M467 109.3h.1M447.1 82.8h.1M459.9 89.5h.1M455.7 53.5h.1M473.6 87.2h.1M468.6 102.7h.1M463.4 117.4h.1M438.4 68.3h.1M445.6 42.5h.1M441.9 54.9h.1M459.7 78.6h.1M456.4 41.1h.1M459.2 61.5h.1M439.9 44.9h.1M442.6 74h.1M443.3 79.3h.1M474.5 67.5h.1M469.3 81h.1M475.2 52.6h.1M467.7 116.8h.1M475.5 111.9h.1M455.1 83.4h.1M473.3 72.2h.1M447.2 42.8h.1M444.9 52h.1M476.9 66.2h.1M466.4 76.8h.1M440.5 71h.1M447.8 44.1h.1M475.6 46.5h.1M470.7 90.5h.1M476.9 71.9h.1M466.4 101.7h.1M464.8 42.1h.1M466.2 104.5h.1M444.4 48.2h.1M468.3 76.3h.1M444 76.2h.1M462.7 113h.1M475.2 67.6h.1M466.2 94.9h.1M471.3 108.8h.1M463.5 109.6h.1M465.3 48.1h.1M448.2 81.2h.1M467.8 88.2h.1M477.6 114.9h.1M469 86.3h.1M437.8 58.8h.1M464.6 50h.1M464.3 69.5h.1M473 103.3h.1M455.6 85.5h.1M479.4 118.4h.1M462.7 46.8h.1M475.7 44h.1M466.2 54.1h.1M471.2 80.1h.1M472.3 119.5h.1M466.6 47.2h.1M452.3 99.7h.1M452 54.2h.1M456 52h.1M456.8 48.5h.1M467.9 58.1h.1M477.2 49.2h.1M463.7 94.5h.1M444.7 93.2h.1M460.1 92.2h.1M444.1 80.4h.1M472.8 92.4h.1M446.6 68.4h.1M474.7 44.6h.1M457 83.5h.1M454.9 40.3h.1M456 64.8h.1M455.8 44.5h.1M469.4 56.8h.1M449.9 46.6h.1M417.2 72.6h.1M403.2 53h.1M364.3 53.5h.1M435.6 68.4h.1M402.2 76.4h.1M369.2 65.4h.1M429.5 58.6h.1M435.5 52.3h.1M412.5 70.7h.1M400.2 86.8h.1M414.3 68.8h.1M413.3 75h.1M421.3 62.4h.1M428.6 64.5h.1M419.4 66.9h.1M394.9 76h.1M421.1 68.8h.1M428.2 60.4h.1M399.6 57.3h.1M373.1 63.5h.1M407.1 67.9h.1M420.6 74.3h.1M411.9 54.8h.1M385.2 52.1h.1M417.9 63h.1M424.2 55.4h.1M405.1 68.4h.1M389.1 68.4h.1M414.4 69.9h.1M366.8 52h.1M431.5 59.4h.1M421.8 68.3h.1M377.2 51.7h.1M392.6 76.6h.1M364.3 51.7h.1M417 62.1h.1M390.7 68.8h.1M413.8 63.3h.1M387.1 72.5h.1M416.8 72.5h.1M403.4 61h.1M389.5 74.9h.1M387.8 58.9h.1M426.4 54h.1M428.8 55.2h.1M402.1 74.3h.1M391.2 77.7h.1M427.1 64.7h.1M364.7 59.7h.1M417.3 67.7h.1M372.4 65.7h.1M395.5 84.5h.1M382.7 59.1h.1M391.5 54h.1M421.4 62h.1M414.5 71.9h.1M393.8 52.5h.1M395 88.5h.1M421.3 73.8h.1M434.6 51.3h.1M428.2 139.4h.1M398.3 154.4h.1M406.5 141.5h.1M417 132.7h.1M433.8 128.6h.1M408.4 145.4h.1M447.7 119.4h.1M477.7 120.5h.1M412.9 128.3h.1M425.1 137.5h.1M471.6 120.3h.1M443.2 143.5h.1M415.9 131.5h.1M432 155.1h.1M460.7 137.1h.1M399.6 131.7h.1M464.2 135h.1M427.4 144.1h.1M397.1 144.5h.1M452.8 120.8h.1M429.6 153.7h.1M416.3 139.3h.1M423.5 140.3h.1M427.4 131h.1M473.5 146.5h.1M479.9 130.6h.1M433.9 132h.1M468.5 132.1h.1M452.4 123.6h.1M440.5 127.7h.1M472.5 132h.1M475.9 140.9h.1M423.1 140.2h.1M474 146.5h.1M464.8 140.9h.1M447 122h.1M465.5 144.2h.1M449.6 129.3h.1M451.5 176.9h.1M452.2 189.4h.1M457.3 190.8h.1M462.3 188.7h.1M426.6 174.7h.1M456.6 182.4h.1M429 199.6h.1M412.7 183.5h.1M420.5 183.5h.1M461.6 167.3h.1M402.4 134.6h.1M456.9 172.1h.1M427.1 136h.1M401.5 133.5h.1M461.5 137.4h.1M418.1 172.4h.1M437.1 151.8h.1M442.6 186.1h.1M468.2 141.2h.1M416.1 142h.1M415.6 151h.1M455.3 199h.1M458.1 185.5h.1M439.4 168.5h.1M456 177.4h.1M420.3 174.3h.1M429.4 148.9h.1M444.6 202.2h.1M443.2 134.4h.1M424.4 196.6h.1M445.4 177.5h.1M418.7 134.9h.1M447 147.2h.1M437.3 193h.1M440.3 182.9h.1M440.2 189.5h.1M439.8 197.3h.1M433.3 191.6h.1M440.1 183.9h.1M428.5 191h.1M440.7 197h.1M425.9 181.4h.1M436.9 182.2h.1M440.1 193.6h.1M445.4 200.2h.1M438.7 200.5h.1M489.5 111h.1M471.8 120.2h.1M495.8 118.6h.1M489.7 114.6h.1M505.8 112.9h.1M474.9 125.7h.1M499.6 124.5h.1M508.4 114.2h.1M475.6 115.5h.1M488.8 113.1h.1M500.5 110.1h.1M507.8 109.2h.1M480.6 123h.1M478.7 120.7h.1M480.2 113.6h.1M488 110h.1M502 125.5h.1M506 108h.1M470.4 114.3h.1M498.7 116.7h.1M507.4 126.5h.1M496.4 110.3h.1M485.3 106h.1M485 121.3h.1M193.4 88.7h.1M167.7 93.2h.1M213.4 100.3h.1M151.5 101.5h.1M233.6 96.1h.1M156.1 108.3h.1M159.5 96.8h.1M117.5 113.6h.1M178.9 102.6h.1M130.9 111.6h.1M120.7 117.3h.1M219.1 99.9h.1M157.1 100.9h.1M208.3 102h.1M205.8 103.9h.1M205 103.2h.1M185.6 100.4h.1M128.2 105.9h.1M227.5 93.7h.1M208.9 94.1h.1M201.6 95.2h.1M119.7 116.3h.1M178.7 93.7h.1M152.7 105.5h.1M204.9 91.2h.1M192.1 99.7h.1M160 106.8h.1M133.3 107.5h.1M193.6 93.4h.1M195.9 89.7h.1M141.6 112.2h.1M189.7 98.8h.1M197.5 92.7h.1M144.3 112.2h.1M118 107.6h.1M146.9 102.6h.1M219.7 98.4h.1M160.3 105h.1M132.7 100.1h.1M131.4 109.1h.1M181.4 98.5h.1M201.4 92.8h.1M188.9 100.3h.1M132.6 113.8h.1M138 114.7h.1M207.3 101h.1M170.3 92.3h.1M132.6 110.8h.1M160.4 105.8h.1M135.4 113.3h.1M220.8 90.3h.1M119.5 119.5h.1M166.5 101h.1M220.5 95.3h.1M226.5 89.8h.1M118.3 104.7h.1M181.9 92.5h.1M146.9 108.4h.1M136.6 114.2h.1M220.6 100.4h.1M247.2 133.8h.1M250.2 117.1h.1M257.5 133.4h.1M249.7 122.2h.1M257.8 146.1h.1M209.5 270.1h.1M216 271.2h.1M209.8 272.2h.1M223.1 278h.1M219.7 274.9h.1M224.9 271.5h.1M215.4 282.1h.1M221 269.6h.1M213.9 265h.1M201.1 277.9h.1M204.6 263.9h.1M209.9 278.2h.1M216.7 277.7h.1M213.1 281h.1M206.9 274.7h.1M203 274.6h.1M216.2 271.7h.1M203.9 273.4h.1M202.8 275.6h.1M226.4 274.8h.1M212.6 281.7h.1M211.2 282.8h.1M207.8 274.9h.1M212 271.9h.1M211 277.7h.1M198.6 275.4h.1M216.4 272.1h.1M213.8 278.8h.1M212.5 283.5h.1M210 279.7h.1M208.9 266.9h.1M197.1 269.2h.1M200.1 272.5h.1M220.6 276.5h.1M200.9 258.7h.1M220.2 278.5h.1M210 280.6h.1M210.1 278.1h.1M204.1 254.6h.1M212.9 283.4h.1M209.8 283.3h.1M199.3 269.4h.1M211.5 265.7h.1M212.9 278.9h.1M214.4 284.1h.1M214.9 259.6h.1M210.6 281.3h.1M213.8 280.3h.1M207.5 265.3h.1M226.8 279.2h.1M213.9 273.8h.1M211.6 279h.1M223.1 271.6h.1M218.8 269h.1M216.3 275.3h.1M210.4 269.2h.1M207.4 263.2h.1M212.5 283.3h.1M200.1 270.6h.1M210.4 276.2h.1M205.9 272.7h.1M209.4 277.9h.1M217.2 281.8h.1M203.4 261.6h.1M214.8 276.3h.1M214.2 267.3h.1M202.8 273.1h.1M199.5 273.8h.1M204 259.5h.1M218.4 285.7h.1M224.9 272h.1M213.9 261.5h.1M212.6 254.1h.1M217.4 256.9h.1M230 245.4h.1M240.7 242.9h.1M209.9 255h.1M205.9 248.4h.1M235 240.4h.1M210.5 249.8h.1M227.6 237.9h.1M200.7 241.1h.1M211.5 258.4h.1M215.4 250.7h.1M201.1 255.9h.1M238.6 251.7h.1M238.3 251.8h.1M226.8 242.3h.1M192.9 251.7h.1M211.3 257.2h.1M219.6 240.2h.1M196.8 241.2h.1M228.4 250.6h.1M195.6 248.3h.1M212.5 264.4h.1M240.9 258.1h.1M205.1 260.9h.1M212.3 253.6h.1M239.1 240.6h.1M246.1 242.6h.1M228.9 262.2h.1M201.5 237.3h.1M237.3 250.9h.1M196.6 264.4h.1M155.8 279.9h.1M154.9 265.7h.1M129.7 265.3h.1M143.8 264.9h.1M125.5 283.5h.1M128.3 280.7h.1M146.4 271.6h.1M146.6 278.5h.1M136.8 275.1h.1M151.7 276.5h.1M136.7 271.2h.1M132 273h.1M122.7 269.3h.1M133.6 267.9h.1M125.8 272.3h.1M145 269.1h.1M139.5 280.9h.1M160.2 271.4h.1M124.3 267.8h.1M138.4 268.2h.1M131.9 277.6h.1M158.3 279.8h.1M145.2 274.8h.1M150.6 268.1h.1M101.8 252.6h.1M144.6 238.7h.1M93.4 237.9h.1M147.7 234.6h.1M152.7 263.2h.1M76.9 229.4h.1M155.9 255.4h.1M88.3 237h.1M171.1 232.5h.1M118.9 262.4h.1M124.4 260.3h.1M132.5 246.9h.1M132.1 244.5h.1M163.7 229.5h.1M106.6 258.2h.1M132.5 261.7h.1M186.6 233.2h.1M162.1 227.3h.1M148 236.3h.1M132.8 237.3h.1M94.8 250h.1M169.6 244.3h.1M414.2 253.5h.1M412.2 263.7h.1M415.8 248.9h.1M405.3 257.8h.1M405.2 264.1h.1M418.4 259.4h.1M406 259.1h.1M422 249h.1M420.7 252.9h.1M409.1 260.7h.1M409.1 267.4h.1M411.7 257.6h.1M418.1 254.7h.1M404.2 263.1h.1M407.8 260.1h.1M408.9 248h.1M412.3 254.4h.1M409.1 252h.1M414 249.9h.1M407.5 259.8h.1M416.8 255.3h.1M406.6 257.2h.1M424.5 251.3h.1M401.1 257.6h.1M374.7 309.5h.1M382 323.2h.1M372.6 316h.1M388.3 325.4h.1M377.7 312.4h.1M370.2 301.7h.1M380.1 307.2h.1M374.1 309.1h.1M373.7 309.1h.1M393.8 323.3h.1M404.9 312.2h.1M397.7 325.5h.1M374.8 308.1h.1M391.8 326.5h.1M375.2 308.9h.1M375.8 310.7h.1M379.5 313.2h.1M384.6 328.3h.1M384.6 326.3h.1M401.9 317.2h.1M395.3 324.2h.1M379 309.3h.1M380.8 337.3h.1M378 334.6h.1M383.3 335.6h.1M379.5 336.3h.1M375.2 335.5h.1M377.5 332.8h.1M380.6 337.6h.1M380.6 335.7h.1M382.6 335.1h.1M386.8 333.2h.1M373.7 336.4h.1M362.2 332.3h.1M357.6 331.5h.1M355.2 340.5h.1M364.9 330.2h.1M360.2 333.8h.1M353.5 339.3h.1M359.7 344.5h.1M365.6 342.8h.1M355.5 326.8h.1M364 326.8h.1M362.1 328.1h.1M362.4 325.7h.1M352.8 342h.1M359.4 333.7h.1M366.6 340.4h.1M354.9 338.8h.1M320.5 292.3h.1M310.8 255.4h.1M309.4 262.5h.1M294.2 356.1h.1M319.6 307.3h.1M377.4 325.7h.1M289.9 368.5h.1M393.5 350.8h.1M313 349.4h.1M354.7 224.9h.1M319.4 328.8h.1M341.7 367.7h.1M374.6 350.3h.1M400 273.4h.1M390.3 220.4h.1M375.7 233.7h.1M335.7 288.7h.1M278.6 319.2h.1M374.2 254.8h.1M414.7 230.3h.1M416.6 232.6h.1M415.6 223.9h.1M421.1 231.9h.1M409 225h.1M344.9 474.6h.1M334.7 461.9h.1M344.3 471.3h.1M356.5 462.5h.1M352.8 467.6h.1M357.8 468.5h.1M358.5 475.9h.1M342 462h.1M356.4 462.2h.1M352.3 468h.1M351.9 460.1h.1M339.5 464h.1M354.2 465.7h.1M336.8 464.1h.1M358.9 464.6h.1M352.8 471.3h.1M334.8 456h.1M349.1 466.1h.1M372.4 468.4h.1M339.3 485.1h.1M342.2 480.2h.1M349 465h.1M358.7 474h.1M368.3 464.1h.1M360.5 476h.1M354.9 472.4h.1M356.4 477h.1M349.9 472.1h.1M355.6 466.9h.1M349.2 466.2h.1M357 466.2h.1M343.2 487.1h.1M346 483.9h.1M371.4 472.8h.1M358.2 464.8h.1M339 479.6h.1M360.2 468.8h.1M347 478h.1M341.1 460h.1M344.1 460.4h.1M357.4 465.2h.1M354.5 460.9h.1M360.4 465h.1M336.9 465.7h.1M337.2 464.3h.1M360.7 465.7h.1M342.8 482.3h.1M351.2 463h.1M348.5 488.1h.1M341.6 505.9h.1M298 506.2h.1M308.4 523.3h.1M321.3 506.3h.1M294 519.7h.1M314.6 518.8h.1M294.6 513.3h.1M327.6 502.9h.1M327.2 531.8h.1M334.6 504.6h.1M338 502.9h.1M297.4 500.1h.1M329.6 506.5h.1M308.7 504.3h.1M359.9 505.2h.1M341.6 530.5h.1M322.9 522h.1M313.3 531h.1M342.5 502.7h.1M344 505.1h.1M325.5 506.7h.1M325.8 524.7h.1M346.5 512.1h.1M290.1 516.9h.1M337 528.9h.1M352.6 505.1h.1M307.6 526.9h.1M321.9 423.4h.1M352.8 359.8h.1M256.4 398.9h.1M273.1 368.1h.1M333.6 396h.1M327.8 327.3h.1M372 404.6h.1M374.1 393.5h.1M332.4 426.6h.1M348.4 396.2h.1M235.4 322.9h.1M343.7 421.6h.1M290.8 345.3h.1M299.6 421h.1M349.9 335.7h.1M376.6 332.1h.1M383.8 332.5h.1M385.7 334.1h.1M376.5 334.1h.1M375.8 338.7h.1M374.2 334.1h.1M378.9 330.4h.1M376.9 339.8h.1M385.3 334.2h.1M385.5 339h.1M385.3 337.2h.1M381.4 335.1h.1M383.4 336h.1M396.8 409.9h.1M396.1 421.3h.1M391.6 423.2h.1M390 414.1h.1M392.9 425.6h.1M389.6 423.2h.1M393.7 424.6h.1M390.2 419.5h.1M470.2 443.6h.1M464.4 439.8h.1M466.2 445h.1M466.2 448.9h.1M470.5 446.4h.1M462.8 445.7h.1M473.8 446.7h.1M469.7 455.1h.1M475.5 448.5h.1M471.4 456h.1M465.7 441.7h.1M472.9 455.1h.1M466.8 448.1h.1M467 443.7h.1M463.4 440.5h.1M471.1 449.2h.1M471.2 456.8h.1M471.4 452.2h.1M465.9 447.3h.1M372.7 121.6h.1M371.9 121.2h.1M374.4 126.3h.1M371 119.3h.1M365.4 128.7h.1M364.3 128.6h.1M368.6 128.5h.1M365.1 123.4h.1M373.1 123.1h.1M375.1 123.1h.1M370.9 122.1h.1M372.2 122.5h.1M368.2 127.8h.1M16.5 223.5h.1M20 226h.1M13 220h.1M22 221h.1M8 220h.1M10 226h.1M24 230h.1"/>
<g fill="#7a898d" stroke="#333b3e" stroke-width="1">
<circle cx="3.3" cy="76.8" r="4.100"/>
<circle cx="139.1" cy="8.9" r="4.100"/>
<circle cx="142.5" cy="6.7" r="4.100"/>
<circle cx="145.8" cy="12.2" r="4.100"/>
<circle cx="150.3" cy="13.8" r="4.100"/>
<circle cx="155.8" cy="5.6" r="4.100"/>
<circle cx="158.1" cy="2.2" r="4.100"/>
<circle cx="163.6" cy="3.3" r="4.100"/>
<circle cx="160.3" cy="22.3" r="4.100"/>
<circle cx="161.4" cy="24.5" r="4.100"/>
<circle cx="159.2" cy="32.9" r="4.100"/>
<circle cx="163.6" cy="31.2" r="4.100"/>
<circle cx="114.7" cy="39.6" r="4.100"/>
<circle cx="130.2" cy="39.6" r="4.100"/>
<circle cx="143.6" cy="40.1" r="4.100"/>
<circle cx="148.1" cy="40.7" r="4.100"/>
<circle cx="154.7" cy="40.7" r="4.100"/>
<circle cx="158.1" cy="39.6" r="4.100"/>
<circle cx="111.3" cy="46.8" r="4.100"/>
<circle cx="111.3" cy="50.8" r="4.100"/>
<circle cx="111.8" cy="54.5" r="4.100"/>
<circle cx="112.4" cy="57.4" r="4.100"/>
<circle cx="109.1" cy="70.8" r="4.100"/>
<circle cx="110.6" cy="75.7" r="4.100"/>
<circle cx="116.9" cy="81.3" r="4.100"/>
<circle cx="122.9" cy="79.5" r="4.100"/>
<circle cx="126.9" cy="83.5" r="4.100"/>
<circle cx="133.1" cy="86.8" r="4.100"/>
<circle cx="138.5" cy="83.7" r="4.100"/>
<circle cx="151.4" cy="82.8" r="4.100"/>
<circle cx="160.3" cy="77.9" r="4.100"/>
<circle cx="164.1" cy="72.4" r="4.100"/>
<circle cx="165.9" cy="65.7" r="4.100"/>
<circle cx="176.5" cy="69.7" r="4.100"/>
<circle cx="183.7" cy="65" r="4.100"/>
<circle cx="175.2" cy="54.5" r="4.100"/>
<circle cx="180.8" cy="53.4" r="4.100"/>
<circle cx="142" cy="92.4" r="4.100"/>
<circle cx="148.7" cy="92.4" r="4.100"/>
<circle cx="162.5" cy="89.7" r="4.100"/>
<circle cx="168.1" cy="88.6" r="4.100"/>
<circle cx="187" cy="82.8" r="4.100"/>
<circle cx="199.7" cy="82.8" r="4.100"/>
<circle cx="232.7" cy="82.8" r="4.100"/>
<circle cx="118.7" cy="102.6" r="4.100"/>
<circle cx="108" cy="111.8" r="4.100"/>
<circle cx="105.8" cy="123.8" r="4.100"/>
<circle cx="54.1" cy="134.5" r="4.100"/>
<circle cx="58.3" cy="139.1" r="4.100"/>
<circle cx="63.9" cy="135.6" r="4.100"/>
<circle cx="79" cy="133.6" r="4.100"/>
<circle cx="220.4" cy="57.4" r="4.100"/>
<circle cx="225.5" cy="67.5" r="4.100"/>
<circle cx="224.9" cy="53.4" r="4.100"/>
<circle cx="228.2" cy="55.7" r="4.100"/>
<circle cx="222.6" cy="50.1" r="4.100"/>
<circle cx="243.3" cy="50.1" r="4.100"/>
<circle cx="246.7" cy="51.7" r="4.100"/>
<circle cx="258.9" cy="47.9" r="4.100"/>
<circle cx="256.7" cy="57.9" r="4.100"/>
<circle cx="260" cy="57.4" r="4.100"/>
<circle cx="268.9" cy="52.3" r="4.100"/>
<circle cx="272.3" cy="53.4" r="4.100"/>
<circle cx="275.6" cy="54.5" r="4.100"/>
<circle cx="277.8" cy="55.7" r="4.100"/>
<circle cx="282.3" cy="56.8" r="4.100"/>
<circle cx="283" cy="60.1" r="4.100"/>
<circle cx="276.7" cy="67.2" r="4.100"/>
<circle cx="283.4" cy="46.8" r="4.100"/>
<circle cx="292.3" cy="53.4" r="4.100"/>
<circle cx="295" cy="64.6" r="4.100"/>
<circle cx="246.7" cy="76.8" r="4.100"/>
<circle cx="252.9" cy="73.5" r="4.100"/>
<circle cx="243.3" cy="82.8" r="4.100"/>
<circle cx="256.7" cy="80.6" r="4.100"/>
<circle cx="264.5" cy="80.6" r="4.100"/>
<circle cx="267.8" cy="73.9" r="4.100"/>
<circle cx="247.8" cy="90.2" r="4.100"/>
<circle cx="261.2" cy="89.1" r="4.100"/>
<circle cx="313.5" cy="58.3" r="4.100"/>
<circle cx="323.5" cy="56.8" r="4.100"/>
<circle cx="333.5" cy="56.8" r="4.100"/>
<circle cx="336.8" cy="60.6" r="4.100"/>
<circle cx="343.5" cy="54.5" r="4.100"/>
<circle cx="346.9" cy="59.7" r="4.100"/>
<circle cx="353.1" cy="55.7" r="4.100"/>
<circle cx="342.9" cy="47.2" r="4.100"/>
<circle cx="313.9" cy="66.3" r="4.100"/>
<circle cx="306.8" cy="73.5" r="4.100"/>
<circle cx="303.5" cy="77.9" r="4.100"/>
<circle cx="309" cy="81.9" r="4.100"/>
<circle cx="311.7" cy="82.8" r="4.100"/>
<circle cx="318.4" cy="75.7" r="4.100"/>
<circle cx="328.6" cy="80.6" r="4.100"/>
<circle cx="320.6" cy="90.8" r="4.100"/>
<circle cx="329.1" cy="91.3" r="4.100"/>
<circle cx="334.6" cy="72.4" r="4.100"/>
<circle cx="340.6" cy="71.2" r="4.100"/>
<circle cx="339.7" cy="76.8" r="4.100"/>
<circle cx="342" cy="81.3" r="4.100"/>
<circle cx="348" cy="84.6" r="4.100"/>
<circle cx="393.2" cy="49.4" r="4.100"/>
<circle cx="399.9" cy="53.4" r="4.100"/>
<circle cx="422.1" cy="55.7" r="4.100"/>
<circle cx="433.7" cy="47.9" r="4.100"/>
<circle cx="433.7" cy="52.3" r="4.100"/>
<circle cx="388.7" cy="82.8" r="4.100"/>
<circle cx="379.1" cy="96.2" r="4.100"/>
<circle cx="383.6" cy="94.6" r="4.100"/>
<circle cx="397" cy="97.3" r="4.100"/>
<circle cx="394.7" cy="102.4" r="4.100"/>
<circle cx="392.1" cy="108" r="4.100"/>
<circle cx="389.8" cy="113.1" r="4.100"/>
<circle cx="360.9" cy="117.6" r="4.100"/>
<circle cx="370.2" cy="116.2" r="4.100"/>
<circle cx="373.6" cy="119.1" r="4.100"/>
<circle cx="390.9" cy="128.7" r="4.100"/>
<circle cx="384.7" cy="146.5" r="4.100"/>
<circle cx="251.8" cy="108" r="4.100"/>
<circle cx="476" cy="123.1" r="4.100"/>
<circle cx="473.8" cy="130.2" r="4.100"/>
<circle cx="478.2" cy="136.9" r="4.100"/>
<circle cx="493.3" cy="132.7" r="4.100"/>
<circle cx="486" cy="144.7" r="4.100"/>
<circle cx="491.6" cy="150.7" r="4.100"/>
<circle cx="498.1" cy="156.8" r="4.100"/>
<circle cx="528.2" cy="144.7" r="4.100"/>
<circle cx="522.2" cy="156.3" r="4.100"/>
<circle cx="529.4" cy="156.3" r="4.100"/>
<circle cx="516.2" cy="159.2" r="4.100"/>
<circle cx="566.8" cy="158" r="4.100"/>
<circle cx="597" cy="159.2" r="4.100"/>
<circle cx="516.2" cy="161.9" r="4.100"/>
<circle cx="530.6" cy="162.9" r="4.100"/>
<circle cx="542" cy="166.8" r="4.100"/>
<circle cx="548" cy="173.7" r="4.100"/>
<circle cx="616.8" cy="170.6" r="4.100"/>
<circle cx="612.9" cy="179.8" r="4.100"/>
<circle cx="629.8" cy="178.6" r="4.100"/>
<circle cx="634.6" cy="197.4" r="4.100"/>
<circle cx="636.8" cy="209.9" r="4.100"/>
<circle cx="646.9" cy="235.7" r="4.100"/>
<circle cx="681.6" cy="234.8" r="4.100"/>
<circle cx="678.7" cy="242" r="4.100"/>
<circle cx="656.1" cy="254.5" r="4.100"/>
<circle cx="656.1" cy="257.7" r="4.100"/>
<circle cx="667.9" cy="263" r="4.100"/>
<circle cx="687.9" cy="263.7" r="4.100"/>
<circle cx="678.7" cy="273.4" r="4.100"/>
<circle cx="680.9" cy="279.9" r="4.100"/>
<circle cx="637.7" cy="291.7" r="4.100"/>
<circle cx="512.8" cy="209.9" r="4.100"/>
<circle cx="481.9" cy="225.6" r="4.100"/>
<circle cx="694.7" cy="209.9" r="4.100"/>
<circle cx="700.9" cy="204.6" r="4.100"/>
<circle cx="732.8" cy="173.7" r="4.100"/>
<circle cx="66.1" cy="166.9" r="4.100"/>
<circle cx="57.9" cy="184.7" r="4.100"/>
<circle cx="65" cy="202.5" r="4.100"/>
<circle cx="61.9" cy="215.8" r="4.100"/>
<circle cx="417.7" cy="180.9" r="4.100"/>
<circle cx="405.9" cy="192.9" r="4.100"/>
<circle cx="440" cy="210.7" r="4.100"/>
<circle cx="420.4" cy="218.5" r="4.100"/>
<circle cx="56.1" cy="224.5" r="4.100"/>
<circle cx="65" cy="227.8" r="4.100"/>
<circle cx="60.6" cy="232.7" r="4.100"/>
<circle cx="62.8" cy="237.8" r="4.100"/>
<circle cx="67.9" cy="242.7" r="4.100"/>
<circle cx="79.7" cy="257.4" r="4.100"/>
<circle cx="82.8" cy="263.4" r="4.100"/>
<circle cx="98" cy="277.9" r="4.100"/>
<circle cx="103.1" cy="280.6" r="4.100"/>
<circle cx="124.7" cy="287.5" r="4.100"/>
<circle cx="141.8" cy="284.6" r="4.100"/>
<circle cx="155.9" cy="286.8" r="4.100"/>
<circle cx="167.7" cy="282.8" r="4.100"/>
<circle cx="175.9" cy="278.8" r="4.100"/>
<circle cx="183" cy="278.3" r="4.100"/>
<circle cx="189.3" cy="277.9" r="4.100"/>
<circle cx="212" cy="287.5" r="4.100"/>
<circle cx="220.9" cy="286.3" r="4.100"/>
<circle cx="229.8" cy="292.4" r="4.100"/>
<circle cx="229.8" cy="306.8" r="4.100"/>
<circle cx="228.2" cy="316.2" r="4.100"/>
<circle cx="223.8" cy="322.9" r="4.100"/>
<circle cx="242.7" cy="348.5" r="4.100"/>
<circle cx="246" cy="354" r="4.100"/>
<circle cx="245.6" cy="358.5" r="4.100"/>
<circle cx="250.9" cy="368.5" r="4.100"/>
<circle cx="251.6" cy="374.7" r="4.100"/>
<circle cx="442.7" cy="223.3" r="4.100"/>
<circle cx="440.9" cy="235.1" r="4.100"/>
<circle cx="455.6" cy="236.7" r="4.100"/>
<circle cx="443.8" cy="243.8" r="4.100"/>
<circle cx="456" cy="251.8" r="4.100"/>
<circle cx="457.8" cy="305.7" r="4.100"/>
<circle cx="439.8" cy="320.9" r="4.100"/>
<circle cx="430" cy="332.9" r="4.100"/>
<circle cx="424.8" cy="338.7" r="4.100"/>
<circle cx="421.1" cy="344.7" r="4.100"/>
<circle cx="417.7" cy="350.7" r="4.100"/>
<circle cx="418.8" cy="361.4" r="4.100"/>
<circle cx="253.9" cy="397.4" r="4.100"/>
<circle cx="244.6" cy="415.6" r="4.100"/>
<circle cx="259.7" cy="465.7" r="4.100"/>
<circle cx="264.6" cy="489.1" r="4.100"/>
<circle cx="285.8" cy="535.8" r="4.100"/>
<circle cx="304.7" cy="538.5" r="4.100"/>
<circle cx="331.9" cy="535.8" r="4.100"/>
<circle cx="345.9" cy="529.8" r="4.100"/>
<circle cx="365.9" cy="509.8" r="4.100"/>
<circle cx="373" cy="502.4" r="4.100"/>
<circle cx="375.9" cy="484.6" r="4.100"/>
<circle cx="390.9" cy="445.7" r="4.100"/>
<circle cx="403.8" cy="432.8" r="4.100"/>
<circle cx="427.1" cy="401.6" r="4.100"/>
<circle cx="427.8" cy="411.2" r="4.100"/>
<circle cx="427.8" cy="414.5" r="4.100"/>
<circle cx="444.5" cy="393.8" r="4.100"/>
<circle cx="451" cy="448.6" r="4.100"/>
<circle cx="490" cy="413.7" r="4.100"/>
<circle cx="484" cy="434.7" r="4.100"/>
<circle cx="477" cy="454.6" r="4.100"/>
<circle cx="474.9" cy="461" r="4.100"/>
<circle cx="536" cy="447.7" r="4.100"/>
<circle cx="17" cy="222.5" r="4.100"/>
</g>
</svg></div>
<!-- ================= STATUS BAR ================= -->
<div class="field" style="left:5px;top:662px;width:199px;height:20px;border-color:#dcdcdc"></div>
<svg style="position:absolute;left:12px;top:666px" width="14" height="14" viewBox="0 0 14 14"><circle cx="5.500" cy="5.500" r="4" fill="none" stroke="#8c8c8c" stroke-width="1.300"/><path d="M8.500 8.500l4 4" stroke="#8c8c8c" stroke-width="1.600"/></svg>
<div class="t" style="letter-spacing:-0.414px;margin-left:-0.2px;left:33px;top:666px;color:#7d7d7d">Type to locate (Ctrl+K)</div>
<div class="t" style="letter-spacing:-0.55px;margin-left:0.9px;left:211px;top:666px;width:66px;overflow:hidden">3 legend entries</div>
<div class="t" style="letter-spacing:-0.662px;margin-left:0.3px;left:286px;top:666px">Coordinate</div>
<div class="field" style="left:344px;top:662px;width:73px"></div>
<div class="t" style="letter-spacing:-0.416px;margin-left:0.9px;left:355px;top:666px">16.8,49.6</div>
<svg style="position:absolute;left:419px;top:662px" width="18" height="19" viewBox="0 0 18 19"><g transform="rotate(-32 8.500 10)"><rect x="4" y="2.500" width="9" height="14.500" rx="4.500" fill="#fff" stroke="#111" stroke-width="1.700"/><path d="M4.200 8.500h8.600" stroke="#111" stroke-width="1.500"/><path d="M8.500 2.500v6" stroke="#111" stroke-width="1.300"/><path d="M5.200 4.500c.8-1.200 1.800-1.700 2.700-1.800v5h-3.400c0-1.200.2-2.300.7-3.200z" fill="#222"/><circle cx="8.500" cy="12.800" r="1.300" fill="none" stroke="#111" stroke-width="1.100"/></g><path d="M12.500 4.500l1-1M14.500 3l1-.8M1 10.500l1.500.5" stroke="#222" stroke-width="1"/></svg>
<div class="t" style="letter-spacing:-1.346px;margin-left:0.6px;left:448px;top:666px">Scale</div>
<div class="field" style="left:477px;top:662px;width:79px"></div>
<div class="t" style="letter-spacing:-0.404px;margin-left:0.9px;left:479px;top:666px">:61278383</div>
<div class="dd" style="left:543px;top:671px"></div>
<svg style="position:absolute;left:565px;top:664px" width="14" height="17" viewBox="0 0 14 17"><path d="M3.500 8v-3.500a3.500 3.500 0 0 1 7 0v3.500" fill="none" stroke="#8a8a8a" stroke-width="2"/><rect x="1" y="7.500" width="12" height="8.500" rx="1.500" fill="#6e6e6e"/></svg>
<div class="t" style="letter-spacing:-0.751px;margin-left:0.6px;left:586px;top:666px">Magnifier</div>
<div class="field" style="left:634px;top:662px;width:82px"></div>
<div class="t" style="letter-spacing:-0.926px;margin-left:-0.3px;left:638px;top:666px">100%</div>
<div style="position:absolute;left:700px;top:664px;width:14px;height:8px;border:1px solid #c9c9c9;background:#f4f4f4"></div>
<div style="position:absolute;left:700px;top:672px;width:14px;height:8px;border:1px solid #c9c9c9;background:#f4f4f4"></div>
<div class="dd" style="left:704px;top:666px;border-width:3px;border-top:0;border-bottom:3px solid #48609a"></div>
<div class="dd" style="left:704px;top:675px;border-width:3px;border-bottom:0;border-top:3px solid #48609a"></div>
<div class="t" style="letter-spacing:-0.513px;margin-left:0.3px;left:724px;top:666px">Rotation</div>
<div class="field" style="left:775px;top:662px;width:79px"></div>
<div class="t" style="letter-spacing:-0.306px;margin-left:-1.1px;left:779px;top:666px">0.0 °</div>
<div style="position:absolute;left:838px;top:664px;width:14px;height:8px;border:1px solid #c9c9c9;background:#f4f4f4"></div>
<div style="position:absolute;left:838px;top:672px;width:14px;height:8px;border:1px solid #c9c9c9;background:#f4f4f4"></div>
<div class="dd" style="left:842px;top:666px;border-width:3px;border-top:0;border-bottom:3px solid #48609a"></div>
<div class="dd" style="left:842px;top:675px;border-width:3px;border-bottom:0;border-top:3px solid #48609a"></div>
<div class="cb" style="left:861px;top:665px"><svg width="9" height="9" viewBox="0 0 9 9"><path d="M1.500 4.500l2 2.500 4-6" fill="none" stroke="#3b4fa5" stroke-width="1.600"/></svg></div>
<div class="t" style="letter-spacing:-0.843px;margin-left:0.4px;left:878px;top:665px">Render</div>
<svg style="position:absolute;left:931px;top:664px" width="17" height="16" viewBox="0 0 17 16"><path d="M8.500 1l7 7-7 7-7-7z" fill="#f2f2f2" stroke="#666" stroke-width=".9"/><path d="M1.500 8h14M8.500 1v14M4 4.500c3 1.500 6 1.500 9 0M4 11.500c3-1.500 6-1.500 9 0M8.500 1c-4 4-4 10 0 14M8.500 1c4 4 4 10 0 14" fill="none" stroke="#666" stroke-width=".7"/></svg>
<div class="t" style="letter-spacing:-1.142px;margin-left:0.3px;left:950px;top:666px">EPSG:4326</div>
<svg style="position:absolute;left:1019px;top:664px" width="18" height="17" viewBox="0 0 18 17"><path d="M9 1c-4.500 0-8 2.600-8 6s3.500 6 8 6c.6 0 1.200 0 1.800-.1l3.700 3-.8-3.900c2-1.100 3.300-2.900 3.300-5 0-3.400-3.500-6-8-6z" fill="#5a5a5a"/><circle cx="5.500" cy="7" r="1.100" fill="#fff"/><circle cx="9" cy="7" r="1.100" fill="#fff"/><circle cx="12.500" cy="7" r="1.100" fill="#fff"/></svg>
<svg style="position:absolute;left:1050px;top:673px" width="11" height="11" viewBox="0 0 11 11"><g fill="#c4c4c4"><rect x="8" y="0" width="2" height="2"/><rect x="4" y="4" width="2" height="2"/><rect x="8" y="4" width="2" height="2"/><rect x="0" y="8" width="2" height="2"/><rect x="4" y="8" width="2" height="2"/><rect x="8" y="8" width="2" height="2"/></g></svg>

<!-- ================= POPUP MENU ================= (client coords) -->
<div id="popup" style="left:489px;top:20px">
 <div class="gut"></div>
 <div class="hl"></div>
 <div class="t" style="letter-spacing:0.318px;margin-left:0px;left:34px;top:7px"><u>T</u>oolbox</div><div class="t" style="letter-spacing:0.188px;margin-left:0.3px;left:180px;top:7px">Ctrl+Alt+T</div>
 <div class="t" style="letter-spacing:-0.08px;margin-left:0px;left:34px;top:29px">Graphical <u>M</u>odeler...</div><div class="t" style="letter-spacing:0.371px;margin-left:0.3px;left:180px;top:29px">Ctrl+Alt+M</div>
 <div class="t" style="letter-spacing:-0.005px;margin-left:0px;left:34px;top:51px"><u>H</u>istory...</div><div class="t" style="letter-spacing:0.304px;margin-left:0.3px;left:180px;top:51px">Ctrl+Alt+H</div>
 <div class="t" style="letter-spacing:-0.273px;margin-left:-0.4px;left:34px;top:73px"><u>R</u>esults Viewer</div><div class="t" style="letter-spacing:0.174px;margin-left:0px;left:180px;top:73px">Ctrl+Alt+R</div>
 <div class="t" style="letter-spacing:-0.229px;margin-left:-0.4px;left:34px;top:95px">Edit Features In-Place</div>
 <!-- icons -->
 <svg style="position:absolute;left:5px;top:5px" width="16" height="16" viewBox="0 0 24 24"><g transform="translate(12 12)"><g fill="#7fa9dc" stroke="#5b8cc4" stroke-width=".7"><rect x="-2.200" y="-11.500" width="4.400" height="23" rx="1.500"/><rect x="-2.200" y="-11.500" width="4.400" height="23" rx="1.500" transform="rotate(45)"/><rect x="-2.200" y="-11.500" width="4.400" height="23" rx="1.500" transform="rotate(90)"/><rect x="-2.200" y="-11.500" width="4.400" height="23" rx="1.500" transform="rotate(135)"/></g><circle r="7" fill="#7fa9dc" stroke="#5b8cc4" stroke-width=".7"/><circle r="2.800" fill="#eef3fb" stroke="#5b8cc4" stroke-width=".7"/></g></svg>
 <svg style="position:absolute;left:5px;top:27px" width="17" height="17" viewBox="0 0 17 17"><g stroke-width="2" stroke-linecap="round"><g stroke="#d9352d"><path d="M5 1v8M1 5h8M2.200 2.200l5.600 5.600M7.800 2.200l-5.600 5.600"/></g><g stroke="#8a8a8a" stroke-width="1.600"><path d="M12.500 5.500v6M9.500 8.500h6M10.400 6.400l4.200 4.200M14.600 6.400l-4.200 4.200"/></g><g stroke="#7fa9dc" stroke-width="1.500"><path d="M7.500 10.500v5M5 13h5M5.700 11.200l3.600 3.600M9.300 11.200l-3.600 3.600"/></g></g><circle cx="5" cy="5" r="1.200" fill="#f1f1f1"/></svg>
 <svg style="position:absolute;left:5px;top:49px" width="17" height="17" viewBox="0 0 17 17"><circle cx="8.500" cy="8.500" r="7" fill="#f7f7f7" stroke="#8a8a8a" stroke-width="1.200"/><path d="M8.500 4v4.500l3 2" fill="none" stroke="#7a7a7a" stroke-width="1.200"/></svg>
 <svg style="position:absolute;left:6px;top:71px" width="14" height="17" viewBox="0 0 14 17"><path d="M1.500 1.500h7l4 4v10h-11z" fill="#f8f8f8" stroke="#9a9a9a"/><path d="M3.500 7.500h6M3.500 9.500h6M3.500 11.500h6M3.500 13.500h4" stroke="#aaa"/></svg>
 <svg style="position:absolute;left:5px;top:93px" width="17" height="17" viewBox="0 0 17 17"><path d="M1.500 2.500h11v9h-11z" fill="#f5dc3f" stroke="#d9b31a"/><path d="M13.500 6.500l2 1-4 7-2.500 1.500.3-3z" fill="#f0c029" stroke="#8a7416" stroke-width=".8"/></svg>
</div>
<div id="redbox" style="left:487px;top:16px"></div>
<!-- mouse cursor -->
<svg style="position:absolute;left:569px;top:40px" width="13" height="20" viewBox="0 0 13 20"><path d="M1 1v15l3.500-3.300 2.300 5.300 2.200-1-2.300-5.200h4.800z" fill="#fff" stroke="#000" stroke-width="1" stroke-linejoin="round"/></svg>

</div>
</div>
</body>
</html>
